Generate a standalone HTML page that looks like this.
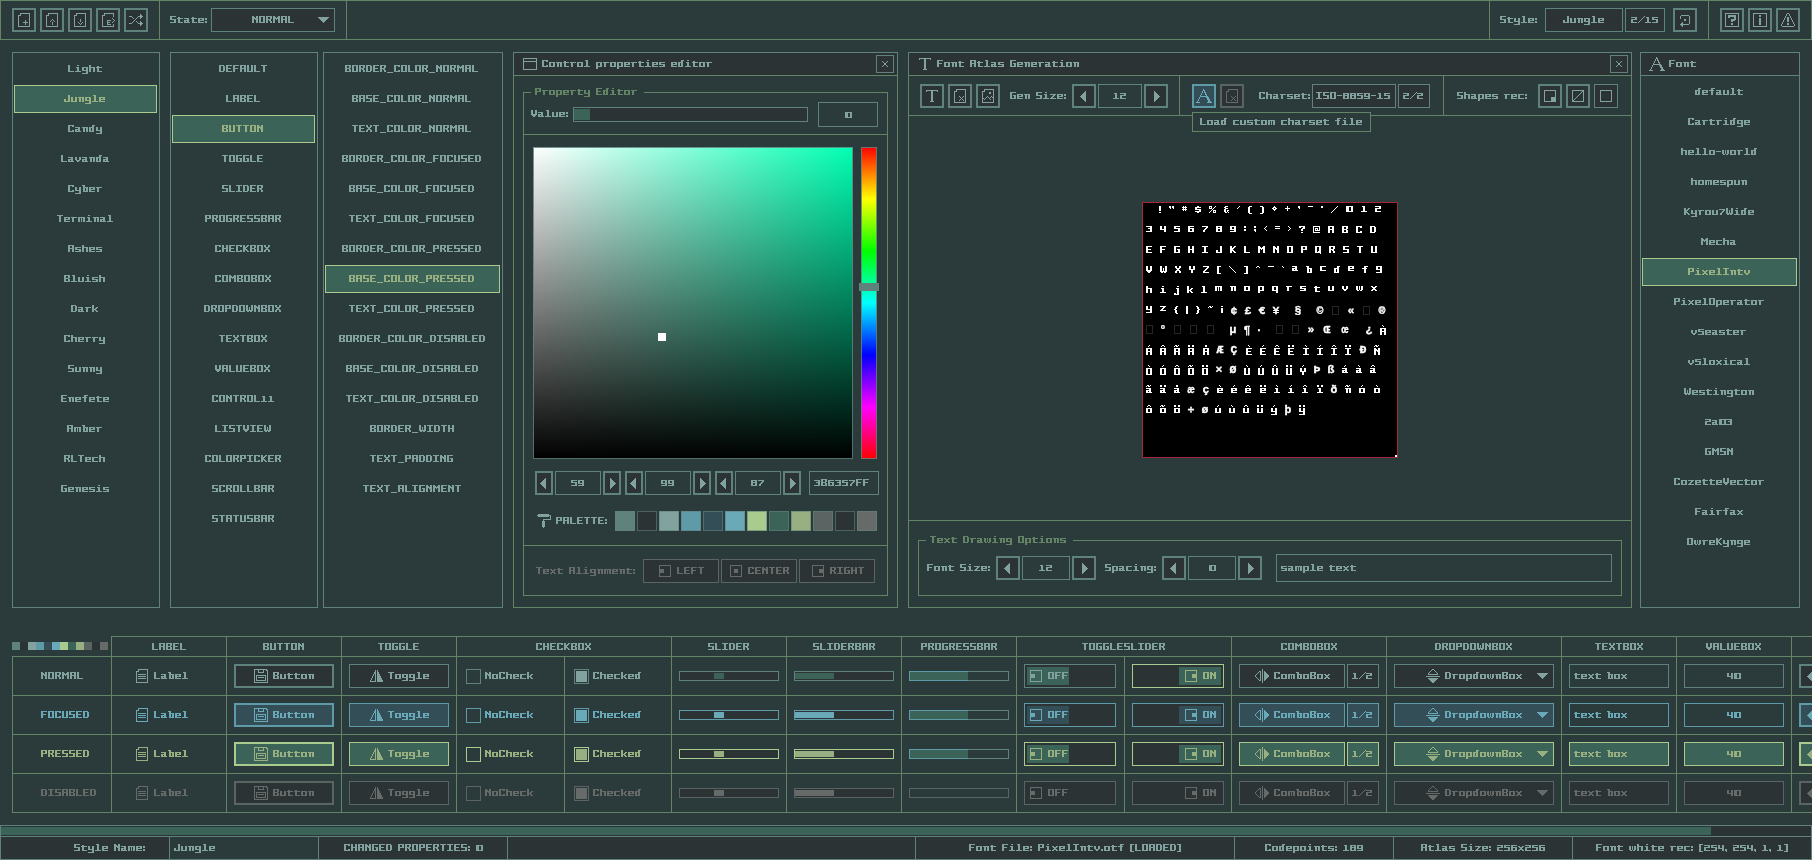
<!DOCTYPE html>
<html><head><meta charset="utf-8"><title>rGuiStyler</title>
<style>
html,body{margin:0;padding:0}
body{width:1812px;height:860px;background:#2b3a3a;overflow:hidden;position:relative;font-family:"Liberation Mono",monospace}
#r{left:0;top:0;width:1812px;height:860px;will-change:transform}
div,.t,.a,svg{position:absolute;box-sizing:border-box}
i{font-style:normal}
.t{white-space:pre;font:bold 10.3px/14px "Liberation Mono",monospace;height:14px;transform:scaleX(1.1325);transform-origin:0 50%;-webkit-text-stroke:0.14px}
.a{white-space:pre;font:bold 10px/14px "Liberation Mono",monospace;width:14px;height:14px;text-align:center;color:#fff;transform:scaleX(1.15);-webkit-text-stroke:0.3px}
.i,.p{shape-rendering:crispEdges;overflow:visible}
</style></head><body><div id="r">
<svg width="0" height="0" style="left:0;top:0"><defs><path id="g44" d="M0 5h2v1h-2zM0 6h2v1h-2zM1 7h1v1h-1z"/><path id="g45" d="M0 3h5v1h-5z"/><path id="g46" d="M0 5h2v1h-2zM0 6h2v1h-2z"/><path id="g47" d="M6 0h1v1h-1zM5 1h1v1h-1zM4 2h1v1h-1zM3 3h1v1h-1zM2 4h1v1h-1zM1 5h1v1h-1zM0 6h1v1h-1z"/><path id="g48" d="M0 1h7v1h-7zM0 2h3v1h-3zM5 2h2v1h-2zM0 3h3v1h-3zM5 3h2v1h-2zM0 4h3v1h-3zM5 4h2v1h-2zM0 5h3v1h-3zM5 5h2v1h-2zM0 6h7v1h-7z"/><path id="g49" d="M1 1h3v1h-3zM2 2h2v1h-2zM2 3h2v1h-2zM2 4h2v1h-2zM2 5h2v1h-2zM0 6h6v1h-6z"/><path id="g50" d="M0 1h6v1h-6zM4 2h2v1h-2zM0 3h6v1h-6zM0 4h2v1h-2zM0 5h2v1h-2zM0 6h6v1h-6z"/><path id="g51" d="M0 1h6v1h-6zM4 2h2v1h-2zM2 3h4v1h-4zM4 4h2v1h-2zM4 5h2v1h-2zM0 6h6v1h-6z"/><path id="g52" d="M0 1h2v1h-2zM4 1h2v1h-2zM0 2h2v1h-2zM4 2h2v1h-2zM0 3h2v1h-2zM4 3h2v1h-2zM0 4h6v1h-6zM4 5h2v1h-2zM4 6h2v1h-2z"/><path id="g53" d="M0 1h6v1h-6zM0 2h2v1h-2zM0 3h6v1h-6zM4 4h2v1h-2zM4 5h2v1h-2zM0 6h6v1h-6z"/><path id="g54" d="M0 1h6v1h-6zM0 2h2v1h-2zM0 3h6v1h-6zM0 4h2v1h-2zM4 4h2v1h-2zM0 5h2v1h-2zM4 5h2v1h-2zM0 6h6v1h-6z"/><path id="g55" d="M0 1h6v1h-6zM4 2h2v1h-2zM3 3h2v1h-2zM2 4h2v1h-2zM1 5h2v1h-2zM1 6h2v1h-2z"/><path id="g56" d="M0 1h6v1h-6zM0 2h2v1h-2zM4 2h2v1h-2zM0 3h6v1h-6zM0 4h2v1h-2zM4 4h2v1h-2zM0 5h2v1h-2zM4 5h2v1h-2zM0 6h6v1h-6z"/><path id="g57" d="M0 1h6v1h-6zM0 2h2v1h-2zM4 2h2v1h-2zM0 3h2v1h-2zM4 3h2v1h-2zM0 4h6v1h-6zM4 5h2v1h-2zM0 6h6v1h-6z"/><path id="g58" d="M0 2h2v1h-2zM0 3h2v1h-2zM0 5h2v1h-2zM0 6h2v1h-2z"/><path id="g65" d="M0 0h6v1h-6zM0 1h2v1h-2zM4 1h2v1h-2zM0 2h2v1h-2zM4 2h2v1h-2zM0 3h6v1h-6zM0 4h2v1h-2zM4 4h2v1h-2zM0 5h2v1h-2zM4 5h2v1h-2zM0 6h2v1h-2zM4 6h2v1h-2z"/><path id="g66" d="M0 0h6v1h-6zM0 1h2v1h-2zM4 1h2v1h-2zM0 2h2v1h-2zM4 2h2v1h-2zM0 3h5v1h-5zM0 4h2v1h-2zM4 4h2v1h-2zM0 5h2v1h-2zM4 5h2v1h-2zM0 6h6v1h-6z"/><path id="g67" d="M0 0h6v1h-6zM0 1h2v1h-2zM4 1h2v1h-2zM0 2h2v1h-2zM0 3h2v1h-2zM0 4h2v1h-2zM0 5h2v1h-2zM4 5h2v1h-2zM0 6h6v1h-6z"/><path id="g68" d="M0 0h5v1h-5zM0 1h2v1h-2zM4 1h2v1h-2zM0 2h2v1h-2zM4 2h2v1h-2zM0 3h2v1h-2zM4 3h2v1h-2zM0 4h2v1h-2zM4 4h2v1h-2zM0 5h2v1h-2zM4 5h2v1h-2zM0 6h5v1h-5z"/><path id="g69" d="M0 0h6v1h-6zM0 1h2v1h-2zM0 2h2v1h-2zM0 3h5v1h-5zM0 4h2v1h-2zM0 5h2v1h-2zM0 6h6v1h-6z"/><path id="g70" d="M0 0h6v1h-6zM0 1h2v1h-2zM0 2h2v1h-2zM0 3h5v1h-5zM0 4h2v1h-2zM0 5h2v1h-2zM0 6h2v1h-2z"/><path id="g71" d="M0 0h6v1h-6zM0 1h2v1h-2zM0 2h2v1h-2zM0 3h2v1h-2zM3 3h3v1h-3zM0 4h2v1h-2zM4 4h2v1h-2zM0 5h2v1h-2zM4 5h2v1h-2zM0 6h6v1h-6z"/><path id="g72" d="M0 0h2v1h-2zM4 0h2v1h-2zM0 1h2v1h-2zM4 1h2v1h-2zM0 2h2v1h-2zM4 2h2v1h-2zM0 3h6v1h-6zM0 4h2v1h-2zM4 4h2v1h-2zM0 5h2v1h-2zM4 5h2v1h-2zM0 6h2v1h-2zM4 6h2v1h-2z"/><path id="g73" d="M0 0h6v1h-6zM2 1h2v1h-2zM2 2h2v1h-2zM2 3h2v1h-2zM2 4h2v1h-2zM2 5h2v1h-2zM0 6h6v1h-6z"/><path id="g74" d="M4 0h2v1h-2zM4 1h2v1h-2zM4 2h2v1h-2zM4 3h2v1h-2zM0 4h2v1h-2zM4 4h2v1h-2zM0 5h2v1h-2zM4 5h2v1h-2zM0 6h6v1h-6z"/><path id="g75" d="M0 0h2v1h-2zM4 0h2v1h-2zM0 1h2v1h-2zM3 1h2v1h-2zM0 2h4v1h-4zM0 3h3v1h-3zM0 4h4v1h-4zM0 5h2v1h-2zM3 5h2v1h-2zM0 6h2v1h-2zM4 6h2v1h-2z"/><path id="g76" d="M0 0h2v1h-2zM0 1h2v1h-2zM0 2h2v1h-2zM0 3h2v1h-2zM0 4h2v1h-2zM0 5h2v1h-2zM0 6h6v1h-6z"/><path id="g77" d="M0 0h2v1h-2zM5 0h2v1h-2zM0 1h3v1h-3zM4 1h3v1h-3zM0 2h7v1h-7zM0 3h2v1h-2zM3 3h1v1h-1zM5 3h2v1h-2zM0 4h2v1h-2zM5 4h2v1h-2zM0 5h2v1h-2zM5 5h2v1h-2zM0 6h2v1h-2zM5 6h2v1h-2z"/><path id="g78" d="M0 0h2v1h-2zM4 0h2v1h-2zM0 1h3v1h-3zM4 1h2v1h-2zM0 2h6v1h-6zM0 3h2v1h-2zM3 3h3v1h-3zM0 4h2v1h-2zM4 4h2v1h-2zM0 5h2v1h-2zM4 5h2v1h-2zM0 6h2v1h-2zM4 6h2v1h-2z"/><path id="g79" d="M0 0h6v1h-6zM0 1h2v1h-2zM4 1h2v1h-2zM0 2h2v1h-2zM4 2h2v1h-2zM0 3h2v1h-2zM4 3h2v1h-2zM0 4h2v1h-2zM4 4h2v1h-2zM0 5h2v1h-2zM4 5h2v1h-2zM0 6h6v1h-6z"/><path id="g80" d="M0 0h6v1h-6zM0 1h2v1h-2zM4 1h2v1h-2zM0 2h2v1h-2zM4 2h2v1h-2zM0 3h6v1h-6zM0 4h2v1h-2zM0 5h2v1h-2zM0 6h2v1h-2z"/><path id="g82" d="M0 0h6v1h-6zM0 1h2v1h-2zM4 1h2v1h-2zM0 2h2v1h-2zM4 2h2v1h-2zM0 3h5v1h-5zM0 4h2v1h-2zM3 4h2v1h-2zM0 5h2v1h-2zM4 5h2v1h-2zM0 6h2v1h-2zM4 6h2v1h-2z"/><path id="g83" d="M0 0h6v1h-6zM0 1h2v1h-2zM0 2h2v1h-2zM0 3h6v1h-6zM4 4h2v1h-2zM4 5h2v1h-2zM0 6h6v1h-6z"/><path id="g84" d="M0 0h6v1h-6zM2 1h2v1h-2zM2 2h2v1h-2zM2 3h2v1h-2zM2 4h2v1h-2zM2 5h2v1h-2zM2 6h2v1h-2z"/><path id="g85" d="M0 0h2v1h-2zM4 0h2v1h-2zM0 1h2v1h-2zM4 1h2v1h-2zM0 2h2v1h-2zM4 2h2v1h-2zM0 3h2v1h-2zM4 3h2v1h-2zM0 4h2v1h-2zM4 4h2v1h-2zM0 5h2v1h-2zM4 5h2v1h-2zM0 6h6v1h-6z"/><path id="g86" d="M0 0h2v1h-2zM4 0h2v1h-2zM0 1h2v1h-2zM4 1h2v1h-2zM0 2h2v1h-2zM4 2h2v1h-2zM0 3h2v1h-2zM4 3h2v1h-2zM0 4h6v1h-6zM1 5h4v1h-4zM2 6h2v1h-2z"/><path id="g87" d="M0 0h2v1h-2zM5 0h2v1h-2zM0 1h2v1h-2zM5 1h2v1h-2zM0 2h2v1h-2zM3 2h1v1h-1zM5 2h2v1h-2zM0 3h2v1h-2zM3 3h1v1h-1zM5 3h2v1h-2zM0 4h2v1h-2zM3 4h1v1h-1zM5 4h2v1h-2zM0 5h7v1h-7zM1 6h2v1h-2zM4 6h2v1h-2z"/><path id="g88" d="M0 0h2v1h-2zM4 0h2v1h-2zM0 1h2v1h-2zM4 1h2v1h-2zM1 2h4v1h-4zM2 3h2v1h-2zM1 4h4v1h-4zM0 5h2v1h-2zM4 5h2v1h-2zM0 6h2v1h-2zM4 6h2v1h-2z"/><path id="g91" d="M0 0h4v1h-4zM0 1h2v1h-2zM0 2h2v1h-2zM0 3h2v1h-2zM0 4h2v1h-2zM0 5h2v1h-2zM0 6h2v1h-2zM0 7h4v1h-4z"/><path id="g93" d="M0 0h4v1h-4zM2 1h2v1h-2zM2 2h2v1h-2zM2 3h2v1h-2zM2 4h2v1h-2zM2 5h2v1h-2zM2 6h2v1h-2zM0 7h4v1h-4z"/><path id="g95" d="M0 7h6v1h-6z"/><path id="g97" d="M0 2h5v1h-5zM3 3h2v1h-2zM0 4h5v1h-5zM0 5h2v1h-2zM3 5h2v1h-2zM0 6h6v1h-6z"/><path id="g98" d="M0 0h3v1h-3zM1 1h2v1h-2zM1 2h5v1h-5zM1 3h2v1h-2zM4 3h2v1h-2zM1 4h2v1h-2zM4 4h2v1h-2zM1 5h2v1h-2zM4 5h2v1h-2zM1 6h5v1h-5z"/><path id="g99" d="M0 2h6v1h-6zM0 3h2v1h-2zM0 4h2v1h-2zM0 5h2v1h-2zM0 6h6v1h-6z"/><path id="g100" d="M3 0h3v1h-3zM3 1h2v1h-2zM0 2h5v1h-5zM0 3h2v1h-2zM3 3h2v1h-2zM0 4h2v1h-2zM3 4h2v1h-2zM0 5h2v1h-2zM3 5h2v1h-2zM0 6h5v1h-5z"/><path id="g101" d="M0 2h6v1h-6zM0 3h2v1h-2zM4 3h2v1h-2zM0 4h6v1h-6zM0 5h2v1h-2zM0 6h6v1h-6z"/><path id="g102" d="M2 0h4v1h-4zM2 1h2v1h-2zM0 2h5v1h-5zM2 3h2v1h-2zM2 4h2v1h-2zM2 5h2v1h-2zM2 6h2v1h-2z"/><path id="g103" d="M0 2h6v1h-6zM0 3h2v1h-2zM4 3h2v1h-2zM0 4h2v1h-2zM4 4h2v1h-2zM0 5h6v1h-6zM4 6h2v1h-2zM4 7h2v1h-2zM0 8h6v1h-6z"/><path id="g104" d="M0 0h2v1h-2zM0 1h2v1h-2zM0 2h6v1h-6zM0 3h2v1h-2zM4 3h2v1h-2zM0 4h2v1h-2zM4 4h2v1h-2zM0 5h2v1h-2zM4 5h2v1h-2zM0 6h2v1h-2zM4 6h2v1h-2z"/><path id="g105" d="M2 0h2v1h-2zM1 2h3v1h-3zM2 3h2v1h-2zM2 4h2v1h-2zM2 5h2v1h-2zM0 6h6v1h-6z"/><path id="g107" d="M0 0h2v1h-2zM0 1h2v1h-2zM0 2h2v1h-2zM4 2h2v1h-2zM0 3h2v1h-2zM3 3h2v1h-2zM0 4h4v1h-4zM0 5h2v1h-2zM3 5h2v1h-2zM0 6h2v1h-2zM4 6h2v1h-2z"/><path id="g108" d="M1 0h3v1h-3zM2 1h2v1h-2zM2 2h2v1h-2zM2 3h2v1h-2zM2 4h2v1h-2zM2 5h2v1h-2zM0 6h6v1h-6z"/><path id="g109" d="M0 2h7v1h-7zM0 3h2v1h-2zM3 3h1v1h-1zM5 3h2v1h-2zM0 4h2v1h-2zM3 4h1v1h-1zM5 4h2v1h-2zM0 5h2v1h-2zM3 5h1v1h-1zM5 5h2v1h-2zM0 6h2v1h-2zM3 6h1v1h-1zM5 6h2v1h-2z"/><path id="g110" d="M0 2h6v1h-6zM1 3h2v1h-2zM4 3h2v1h-2zM1 4h2v1h-2zM4 4h2v1h-2zM1 5h2v1h-2zM4 5h2v1h-2zM1 6h2v1h-2zM4 6h2v1h-2z"/><path id="g111" d="M0 2h6v1h-6zM0 3h2v1h-2zM4 3h2v1h-2zM0 4h2v1h-2zM4 4h2v1h-2zM0 5h2v1h-2zM4 5h2v1h-2zM0 6h6v1h-6z"/><path id="g112" d="M0 2h6v1h-6zM0 3h2v1h-2zM4 3h2v1h-2zM0 4h2v1h-2zM4 4h2v1h-2zM0 5h2v1h-2zM4 5h2v1h-2zM0 6h6v1h-6zM0 7h2v1h-2zM0 8h2v1h-2z"/><path id="g114" d="M0 2h6v1h-6zM1 3h2v1h-2zM1 4h2v1h-2zM1 5h2v1h-2zM1 6h2v1h-2z"/><path id="g115" d="M0 2h6v1h-6zM0 3h2v1h-2zM0 4h6v1h-6zM4 5h2v1h-2zM0 6h6v1h-6z"/><path id="g116" d="M1 1h2v1h-2zM0 2h6v1h-6zM1 3h2v1h-2zM1 4h2v1h-2zM1 5h2v1h-2zM1 6h5v1h-5z"/><path id="g117" d="M0 2h2v1h-2zM4 2h2v1h-2zM0 3h2v1h-2zM4 3h2v1h-2zM0 4h2v1h-2zM4 4h2v1h-2zM0 5h2v1h-2zM4 5h2v1h-2zM0 6h6v1h-6z"/><path id="g118" d="M0 2h2v1h-2zM4 2h2v1h-2zM0 3h2v1h-2zM4 3h2v1h-2zM0 4h2v1h-2zM4 4h2v1h-2zM1 5h4v1h-4zM2 6h2v1h-2z"/><path id="g119" d="M0 2h2v1h-2zM3 2h1v1h-1zM5 2h2v1h-2zM0 3h2v1h-2zM3 3h1v1h-1zM5 3h2v1h-2zM0 4h2v1h-2zM3 4h1v1h-1zM5 4h2v1h-2zM0 5h2v1h-2zM3 5h1v1h-1zM5 5h2v1h-2zM1 6h2v1h-2zM4 6h2v1h-2z"/><path id="g120" d="M0 2h2v1h-2zM4 2h2v1h-2zM1 3h4v1h-4zM2 4h2v1h-2zM1 5h4v1h-4zM0 6h2v1h-2zM4 6h2v1h-2z"/><path id="g121" d="M0 2h2v1h-2zM4 2h2v1h-2zM0 3h2v1h-2zM4 3h2v1h-2zM0 4h2v1h-2zM4 4h2v1h-2zM0 5h6v1h-6zM4 6h2v1h-2zM4 7h2v1h-2zM0 8h6v1h-6z"/><path id="g122" d="M0 2h6v1h-6zM3 3h2v1h-2zM2 4h2v1h-2zM1 5h2v1h-2zM0 6h6v1h-6z"/></defs></svg>
<div style="left:0px;top:0px;width:160px;height:40px;background:#2b3a3a;border:1px solid #638465;"></div>
<div style="left:159px;top:0px;width:188px;height:40px;background:#2b3a3a;border:1px solid #638465;"></div>
<div style="left:346px;top:0px;width:1144px;height:40px;background:#2b3a3a;border:1px solid #638465;"></div>
<div style="left:1489px;top:0px;width:220px;height:40px;background:#2b3a3a;border:1px solid #638465;"></div>
<div style="left:1708px;top:0px;width:104px;height:40px;background:#2b3a3a;border:1px solid #638465;"></div>
<div style="left:12px;top:8px;width:24px;height:24px;background:#2c3334;border:2px solid #60827d;"></div>
<svg class="i" style="left:16px;top:12px" width="16" height="16" viewBox="0 0 16 16"><path fill="#82a29f" d="M4 1h10v1h-10zM4 2h1v1h-1zM13 2h1v1h-1zM2 3h3v1h-3zM13 3h1v1h-1zM2 4h1v1h-1zM13 4h1v1h-1zM2 5h1v1h-1zM13 5h1v1h-1zM2 6h1v1h-1zM13 6h1v1h-1zM2 7h1v1h-1zM13 7h1v1h-1zM2 8h1v1h-1zM9 8h1v1h-1zM13 8h1v1h-1zM2 9h1v1h-1zM9 9h1v1h-1zM13 9h1v1h-1zM2 10h1v1h-1zM7 10h5v1h-5zM13 10h1v1h-1zM2 11h1v1h-1zM9 11h1v1h-1zM13 11h1v1h-1zM2 12h1v1h-1zM9 12h1v1h-1zM13 12h1v1h-1zM2 13h1v1h-1zM13 13h1v1h-1zM2 14h12v1h-12z"/></svg>
<div style="left:40px;top:8px;width:24px;height:24px;background:#2c3334;border:2px solid #60827d;"></div>
<svg class="i" style="left:44px;top:12px" width="16" height="16" viewBox="0 0 16 16"><path fill="#82a29f" d="M4 1h10v1h-10zM4 2h1v1h-1zM13 2h1v1h-1zM2 3h3v1h-3zM13 3h1v1h-1zM2 4h1v1h-1zM13 4h1v1h-1zM2 5h1v1h-1zM13 5h1v1h-1zM2 6h1v1h-1zM13 6h1v1h-1zM2 7h1v1h-1zM8 7h1v1h-1zM13 7h1v1h-1zM2 8h1v1h-1zM7 8h1v1h-1zM9 8h1v1h-1zM13 8h1v1h-1zM2 9h1v1h-1zM6 9h1v1h-1zM10 9h1v1h-1zM13 9h1v1h-1zM2 10h1v1h-1zM8 10h1v1h-1zM13 10h1v1h-1zM2 11h1v1h-1zM8 11h1v1h-1zM13 11h1v1h-1zM2 12h1v1h-1zM8 12h1v1h-1zM13 12h1v1h-1zM2 13h1v1h-1zM13 13h1v1h-1zM2 14h12v1h-12z"/></svg>
<div style="left:68px;top:8px;width:24px;height:24px;background:#2c3334;border:2px solid #60827d;"></div>
<svg class="i" style="left:72px;top:12px" width="16" height="16" viewBox="0 0 16 16"><path fill="#82a29f" d="M4 1h10v1h-10zM4 2h1v1h-1zM13 2h1v1h-1zM2 3h3v1h-3zM13 3h1v1h-1zM2 4h1v1h-1zM13 4h1v1h-1zM2 5h1v1h-1zM13 5h1v1h-1zM2 6h1v1h-1zM13 6h1v1h-1zM2 7h1v1h-1zM8 7h1v1h-1zM13 7h1v1h-1zM2 8h1v1h-1zM8 8h1v1h-1zM13 8h1v1h-1zM2 9h1v1h-1zM8 9h1v1h-1zM13 9h1v1h-1zM2 10h1v1h-1zM6 10h1v1h-1zM10 10h1v1h-1zM13 10h1v1h-1zM2 11h1v1h-1zM7 11h1v1h-1zM9 11h1v1h-1zM13 11h1v1h-1zM2 12h1v1h-1zM8 12h1v1h-1zM13 12h1v1h-1zM2 13h1v1h-1zM13 13h1v1h-1zM2 14h12v1h-12z"/></svg>
<div style="left:96px;top:8px;width:24px;height:24px;background:#2c3334;border:2px solid #60827d;"></div>
<svg class="i" style="left:100px;top:12px" width="16" height="16" viewBox="0 0 16 16"><path fill="#82a29f" d="M4 1h10v1h-10zM4 2h1v1h-1zM13 2h1v1h-1zM2 3h3v1h-3zM13 3h1v1h-1zM2 4h1v1h-1zM13 4h1v1h-1zM2 5h1v1h-1zM2 6h1v1h-1zM12 6h1v1h-1zM2 7h1v1h-1zM13 7h1v1h-1zM2 8h1v1h-1zM7 8h4v1h-4zM14 8h1v1h-1zM2 9h1v1h-1zM7 9h1v1h-1zM13 9h1v1h-1zM2 10h1v1h-1zM7 10h3v1h-3zM12 10h1v1h-1zM2 11h1v1h-1zM7 11h1v1h-1zM2 12h1v1h-1zM7 12h4v1h-4zM13 12h1v1h-1zM2 13h1v1h-1zM13 13h1v1h-1zM2 14h12v1h-12z"/></svg>
<div style="left:124px;top:8px;width:24px;height:24px;background:#2c3334;border:2px solid #60827d;"></div>
<svg class="i" style="left:128px;top:12px" width="16" height="16" viewBox="0 0 16 16"><path fill="#82a29f" d="M12 2h1v1h-1zM12 3h2v1h-2zM1 4h3v1h-3zM10 4h5v1h-5zM4 5h1v1h-1zM9 5h1v1h-1zM12 5h2v1h-2zM5 6h1v1h-1zM8 6h1v1h-1zM12 6h1v1h-1zM7 7h1v1h-1zM6 8h1v1h-1zM5 9h1v1h-1zM8 9h1v1h-1zM12 9h1v1h-1zM4 10h1v1h-1zM9 10h1v1h-1zM12 10h2v1h-2zM1 11h3v1h-3zM10 11h5v1h-5zM12 12h2v1h-2zM12 13h1v1h-1z"/></svg>
<svg class="p" style="left:170px;top:16px;fill:#82a29f" width="38" height="9" role="img"><title>State:</title><use href="#g83"/><use href="#g116" x="7"/><use href="#g97" x="14"/><use href="#g116" x="21"/><use href="#g101" x="28"/><use href="#g58" x="35"/></svg>
<div style="left:211px;top:8px;width:124px;height:24px;background:#2c3334;border:1px solid #60827d;"></div>
<svg class="p" style="left:252px;top:16px;fill:#82a29f" width="43" height="9" role="img"><title>NORMAL</title><use href="#g78"/><use href="#g79" x="7"/><use href="#g82" x="14"/><use href="#g77" x="21"/><use href="#g65" x="29"/><use href="#g76" x="36"/></svg>
<svg class="i" style="left:316px;top:12px" width="16" height="16" viewBox="0 0 16 16"><path fill="#82a29f" d="M2 5h11v1h-11zM3 6h9v1h-9zM4 7h7v1h-7zM5 8h5v1h-5zM6 9h3v1h-3zM7 10h1v1h-1z"/></svg>
<svg class="p" style="left:1500px;top:16px;fill:#82a29f" width="38" height="9" role="img"><title>Style:</title><use href="#g83"/><use href="#g116" x="7"/><use href="#g121" x="14"/><use href="#g108" x="21"/><use href="#g101" x="28"/><use href="#g58" x="35"/></svg>
<div style="left:1545px;top:8px;width:78px;height:24px;background:#2c3334;border:1px solid #60827d;"></div>
<svg class="p" style="left:1563px;top:16px;fill:#82a29f" width="42" height="9" role="img"><title>Jungle</title><use href="#g74"/><use href="#g117" x="7"/><use href="#g110" x="14"/><use href="#g103" x="21"/><use href="#g108" x="28"/><use href="#g101" x="35"/></svg>
<div style="left:1625px;top:8px;width:40px;height:24px;background:#2c3334;border:1px solid #60827d;"></div>
<svg class="p" style="left:1631px;top:16px;fill:#82a29f" width="28" height="9" role="img"><title>2/15</title><use href="#g50"/><use href="#g47" x="7"/><use href="#g49" x="14"/><use href="#g53" x="21"/></svg>
<div style="left:1673px;top:8px;width:24px;height:24px;background:#2c3334;border:2px solid #60827d;"></div>
<svg class="i" style="left:1677px;top:12px" width="16" height="16" viewBox="0 0 16 16"><path fill="#82a29f" d="M4 3h8v1h-8zM3 4h1v1h-1zM12 4h1v1h-1zM3 5h1v1h-1zM12 5h1v1h-1zM3 6h1v1h-1zM12 6h1v1h-1zM7 7h2v1h-2zM12 7h1v1h-1zM7 8h2v1h-2zM12 8h1v1h-1zM12 9h1v1h-1zM5 10h1v1h-1zM12 10h1v1h-1zM4 11h2v1h-2zM12 11h1v1h-1zM3 12h9v1h-9zM4 13h2v1h-2zM5 14h1v1h-1z"/></svg>
<div style="left:1720px;top:8px;width:24px;height:24px;background:#2c3334;border:2px solid #60827d;"></div>
<svg class="i" style="left:1724px;top:12px" width="16" height="16" viewBox="0 0 16 16"><path fill="#82a29f" d="M1 1h14v1h-14zM1 2h1v1h-1zM14 2h1v1h-1zM1 3h1v1h-1zM4 3h8v1h-8zM14 3h1v1h-1zM1 4h1v1h-1zM4 4h8v1h-8zM14 4h1v1h-1zM1 5h1v1h-1zM4 5h2v1h-2zM10 5h2v1h-2zM14 5h1v1h-1zM1 6h1v1h-1zM10 6h2v1h-2zM14 6h1v1h-1zM1 7h1v1h-1zM7 7h5v1h-5zM14 7h1v1h-1zM1 8h1v1h-1zM7 8h4v1h-4zM14 8h1v1h-1zM1 9h1v1h-1zM7 9h2v1h-2zM14 9h1v1h-1zM1 10h1v1h-1zM14 10h1v1h-1zM1 11h1v1h-1zM7 11h2v1h-2zM14 11h1v1h-1zM1 12h1v1h-1zM7 12h2v1h-2zM14 12h1v1h-1zM1 13h1v1h-1zM14 13h1v1h-1zM1 14h14v1h-14z"/></svg>
<div style="left:1748px;top:8px;width:24px;height:24px;background:#2c3334;border:2px solid #60827d;"></div>
<svg class="i" style="left:1752px;top:12px" width="16" height="16" viewBox="0 0 16 16"><path fill="#82a29f" d="M1 1h14v1h-14zM1 2h1v1h-1zM14 2h1v1h-1zM1 3h1v1h-1zM7 3h2v1h-2zM14 3h1v1h-1zM1 4h1v1h-1zM7 4h2v1h-2zM14 4h1v1h-1zM1 5h1v1h-1zM14 5h1v1h-1zM1 6h1v1h-1zM7 6h2v1h-2zM14 6h1v1h-1zM1 7h1v1h-1zM7 7h2v1h-2zM14 7h1v1h-1zM1 8h1v1h-1zM7 8h2v1h-2zM14 8h1v1h-1zM1 9h1v1h-1zM7 9h2v1h-2zM14 9h1v1h-1zM1 10h1v1h-1zM7 10h2v1h-2zM14 10h1v1h-1zM1 11h1v1h-1zM7 11h2v1h-2zM14 11h1v1h-1zM1 12h1v1h-1zM7 12h2v1h-2zM14 12h1v1h-1zM1 13h1v1h-1zM14 13h1v1h-1zM1 14h14v1h-14z"/></svg>
<div style="left:1776px;top:8px;width:24px;height:24px;background:#2c3334;border:2px solid #60827d;"></div>
<svg class="i" style="left:1780px;top:12px" width="16" height="16" viewBox="0 0 16 16"><path fill="#82a29f" d="M7 1h2v1h-2zM6 2h1v1h-1zM9 2h1v1h-1zM6 3h1v1h-1zM9 3h1v1h-1zM5 4h1v1h-1zM10 4h1v1h-1zM5 5h1v1h-1zM7 5h2v1h-2zM10 5h1v1h-1zM4 6h1v1h-1zM7 6h2v1h-2zM11 6h1v1h-1zM4 7h1v1h-1zM7 7h2v1h-2zM11 7h1v1h-1zM3 8h1v1h-1zM7 8h2v1h-2zM12 8h1v1h-1zM3 9h1v1h-1zM7 9h2v1h-2zM12 9h1v1h-1zM2 10h1v1h-1zM13 10h1v1h-1zM2 11h1v1h-1zM7 11h2v1h-2zM13 11h1v1h-1zM1 12h1v1h-1zM7 12h2v1h-2zM14 12h1v1h-1zM1 13h1v1h-1zM14 13h1v1h-1zM2 14h12v1h-12z"/></svg>
<div style="left:12px;top:52px;width:148px;height:556px;background:#2b3a3a;border:1px solid #60827d;"></div>
<svg class="p" style="left:68px;top:65px;fill:#82a29f" width="35" height="9" role="img"><title>Light</title><use href="#g76"/><use href="#g105" x="7"/><use href="#g103" x="14"/><use href="#g104" x="21"/><use href="#g116" x="28"/></svg>
<div style="left:14px;top:85px;width:143px;height:28px;background:#3b6357;border:1px solid #a9cb8d;"></div>
<svg class="p" style="left:64px;top:95px;fill:#97af81" width="42" height="9" role="img"><title>Jungle</title><use href="#g74"/><use href="#g117" x="7"/><use href="#g110" x="14"/><use href="#g103" x="21"/><use href="#g108" x="28"/><use href="#g101" x="35"/></svg>
<svg class="p" style="left:68px;top:125px;fill:#82a29f" width="35" height="9" role="img"><title>Candy</title><use href="#g67"/><use href="#g97" x="7"/><use href="#g110" x="14"/><use href="#g100" x="21"/><use href="#g121" x="28"/></svg>
<svg class="p" style="left:61px;top:155px;fill:#82a29f" width="49" height="9" role="img"><title>Lavanda</title><use href="#g76"/><use href="#g97" x="7"/><use href="#g118" x="14"/><use href="#g97" x="21"/><use href="#g110" x="28"/><use href="#g100" x="35"/><use href="#g97" x="42"/></svg>
<svg class="p" style="left:68px;top:185px;fill:#82a29f" width="35" height="9" role="img"><title>Cyber</title><use href="#g67"/><use href="#g121" x="7"/><use href="#g98" x="14"/><use href="#g101" x="21"/><use href="#g114" x="28"/></svg>
<svg class="p" style="left:57px;top:215px;fill:#82a29f" width="57" height="9" role="img"><title>Terminal</title><use href="#g84"/><use href="#g101" x="7"/><use href="#g114" x="14"/><use href="#g109" x="21"/><use href="#g105" x="29"/><use href="#g110" x="36"/><use href="#g97" x="43"/><use href="#g108" x="50"/></svg>
<svg class="p" style="left:68px;top:245px;fill:#82a29f" width="35" height="9" role="img"><title>Ashes</title><use href="#g65"/><use href="#g115" x="7"/><use href="#g104" x="14"/><use href="#g101" x="21"/><use href="#g115" x="28"/></svg>
<svg class="p" style="left:64px;top:275px;fill:#82a29f" width="42" height="9" role="img"><title>Bluish</title><use href="#g66"/><use href="#g108" x="7"/><use href="#g117" x="14"/><use href="#g105" x="21"/><use href="#g115" x="28"/><use href="#g104" x="35"/></svg>
<svg class="p" style="left:71px;top:305px;fill:#82a29f" width="28" height="9" role="img"><title>Dark</title><use href="#g68"/><use href="#g97" x="7"/><use href="#g114" x="14"/><use href="#g107" x="21"/></svg>
<svg class="p" style="left:64px;top:335px;fill:#82a29f" width="42" height="9" role="img"><title>Cherry</title><use href="#g67"/><use href="#g104" x="7"/><use href="#g101" x="14"/><use href="#g114" x="21"/><use href="#g114" x="28"/><use href="#g121" x="35"/></svg>
<svg class="p" style="left:68px;top:365px;fill:#82a29f" width="35" height="9" role="img"><title>Sunny</title><use href="#g83"/><use href="#g117" x="7"/><use href="#g110" x="14"/><use href="#g110" x="21"/><use href="#g121" x="28"/></svg>
<svg class="p" style="left:61px;top:395px;fill:#82a29f" width="49" height="9" role="img"><title>Enefete</title><use href="#g69"/><use href="#g110" x="7"/><use href="#g101" x="14"/><use href="#g102" x="21"/><use href="#g101" x="28"/><use href="#g116" x="35"/><use href="#g101" x="42"/></svg>
<svg class="p" style="left:67px;top:425px;fill:#82a29f" width="36" height="9" role="img"><title>Amber</title><use href="#g65"/><use href="#g109" x="7"/><use href="#g98" x="15"/><use href="#g101" x="22"/><use href="#g114" x="29"/></svg>
<svg class="p" style="left:64px;top:455px;fill:#82a29f" width="42" height="9" role="img"><title>RLTech</title><use href="#g82"/><use href="#g76" x="7"/><use href="#g84" x="14"/><use href="#g101" x="21"/><use href="#g99" x="28"/><use href="#g104" x="35"/></svg>
<svg class="p" style="left:61px;top:485px;fill:#82a29f" width="49" height="9" role="img"><title>Genesis</title><use href="#g71"/><use href="#g101" x="7"/><use href="#g110" x="14"/><use href="#g101" x="21"/><use href="#g115" x="28"/><use href="#g105" x="35"/><use href="#g115" x="42"/></svg>
<div style="left:170px;top:52px;width:148px;height:556px;background:#2b3a3a;border:1px solid #60827d;"></div>
<svg class="p" style="left:219px;top:65px;fill:#82a29f" width="49" height="9" role="img"><title>DEFAULT</title><use href="#g68"/><use href="#g69" x="7"/><use href="#g70" x="14"/><use href="#g65" x="21"/><use href="#g85" x="28"/><use href="#g76" x="35"/><use href="#g84" x="42"/></svg>
<svg class="p" style="left:226px;top:95px;fill:#82a29f" width="35" height="9" role="img"><title>LABEL</title><use href="#g76"/><use href="#g65" x="7"/><use href="#g66" x="14"/><use href="#g69" x="21"/><use href="#g76" x="28"/></svg>
<div style="left:172px;top:115px;width:143px;height:28px;background:#3b6357;border:1px solid #a9cb8d;"></div>
<svg class="p" style="left:222px;top:125px;fill:#97af81" width="42" height="9" role="img"><title>BUTTON</title><use href="#g66"/><use href="#g85" x="7"/><use href="#g84" x="14"/><use href="#g84" x="21"/><use href="#g79" x="28"/><use href="#g78" x="35"/></svg>
<svg class="p" style="left:222px;top:155px;fill:#82a29f" width="42" height="9" role="img"><title>TOGGLE</title><use href="#g84"/><use href="#g79" x="7"/><use href="#g71" x="14"/><use href="#g71" x="21"/><use href="#g76" x="28"/><use href="#g69" x="35"/></svg>
<svg class="p" style="left:222px;top:185px;fill:#82a29f" width="42" height="9" role="img"><title>SLIDER</title><use href="#g83"/><use href="#g76" x="7"/><use href="#g73" x="14"/><use href="#g68" x="21"/><use href="#g69" x="28"/><use href="#g82" x="35"/></svg>
<svg class="p" style="left:205px;top:215px;fill:#82a29f" width="77" height="9" role="img"><title>PROGRESSBAR</title><use href="#g80"/><use href="#g82" x="7"/><use href="#g79" x="14"/><use href="#g71" x="21"/><use href="#g82" x="28"/><use href="#g69" x="35"/><use href="#g83" x="42"/><use href="#g83" x="49"/><use href="#g66" x="56"/><use href="#g65" x="63"/><use href="#g82" x="70"/></svg>
<svg class="p" style="left:215px;top:245px;fill:#82a29f" width="56" height="9" role="img"><title>CHECKBOX</title><use href="#g67"/><use href="#g72" x="7"/><use href="#g69" x="14"/><use href="#g67" x="21"/><use href="#g75" x="28"/><use href="#g66" x="35"/><use href="#g79" x="42"/><use href="#g88" x="49"/></svg>
<svg class="p" style="left:215px;top:275px;fill:#82a29f" width="57" height="9" role="img"><title>COMBOBOX</title><use href="#g67"/><use href="#g79" x="7"/><use href="#g77" x="14"/><use href="#g66" x="22"/><use href="#g79" x="29"/><use href="#g66" x="36"/><use href="#g79" x="43"/><use href="#g88" x="50"/></svg>
<svg class="p" style="left:204px;top:305px;fill:#82a29f" width="78" height="9" role="img"><title>DROPDOWNBOX</title><use href="#g68"/><use href="#g82" x="7"/><use href="#g79" x="14"/><use href="#g80" x="21"/><use href="#g68" x="28"/><use href="#g79" x="35"/><use href="#g87" x="42"/><use href="#g78" x="50"/><use href="#g66" x="57"/><use href="#g79" x="64"/><use href="#g88" x="71"/></svg>
<svg class="p" style="left:219px;top:335px;fill:#82a29f" width="49" height="9" role="img"><title>TEXTBOX</title><use href="#g84"/><use href="#g69" x="7"/><use href="#g88" x="14"/><use href="#g84" x="21"/><use href="#g66" x="28"/><use href="#g79" x="35"/><use href="#g88" x="42"/></svg>
<svg class="p" style="left:215px;top:365px;fill:#82a29f" width="56" height="9" role="img"><title>VALUEBOX</title><use href="#g86"/><use href="#g65" x="7"/><use href="#g76" x="14"/><use href="#g85" x="21"/><use href="#g69" x="28"/><use href="#g66" x="35"/><use href="#g79" x="42"/><use href="#g88" x="49"/></svg>
<svg class="p" style="left:212px;top:395px;fill:#82a29f" width="63" height="9" role="img"><title>CONTROL11</title><use href="#g67"/><use href="#g79" x="7"/><use href="#g78" x="14"/><use href="#g84" x="21"/><use href="#g82" x="28"/><use href="#g79" x="35"/><use href="#g76" x="42"/><use href="#g49" x="49"/><use href="#g49" x="56"/></svg>
<svg class="p" style="left:215px;top:425px;fill:#82a29f" width="57" height="9" role="img"><title>LISTVIEW</title><use href="#g76"/><use href="#g73" x="7"/><use href="#g83" x="14"/><use href="#g84" x="21"/><use href="#g86" x="28"/><use href="#g73" x="35"/><use href="#g69" x="42"/><use href="#g87" x="49"/></svg>
<svg class="p" style="left:205px;top:455px;fill:#82a29f" width="77" height="9" role="img"><title>COLORPICKER</title><use href="#g67"/><use href="#g79" x="7"/><use href="#g76" x="14"/><use href="#g79" x="21"/><use href="#g82" x="28"/><use href="#g80" x="35"/><use href="#g73" x="42"/><use href="#g67" x="49"/><use href="#g75" x="56"/><use href="#g69" x="63"/><use href="#g82" x="70"/></svg>
<svg class="p" style="left:212px;top:485px;fill:#82a29f" width="63" height="9" role="img"><title>SCROLLBAR</title><use href="#g83"/><use href="#g67" x="7"/><use href="#g82" x="14"/><use href="#g79" x="21"/><use href="#g76" x="28"/><use href="#g76" x="35"/><use href="#g66" x="42"/><use href="#g65" x="49"/><use href="#g82" x="56"/></svg>
<svg class="p" style="left:212px;top:515px;fill:#82a29f" width="63" height="9" role="img"><title>STATUSBAR</title><use href="#g83"/><use href="#g84" x="7"/><use href="#g65" x="14"/><use href="#g84" x="21"/><use href="#g85" x="28"/><use href="#g83" x="35"/><use href="#g66" x="42"/><use href="#g65" x="49"/><use href="#g82" x="56"/></svg>
<div style="left:323px;top:52px;width:180px;height:556px;background:#2b3a3a;border:1px solid #60827d;"></div>
<svg class="p" style="left:345px;top:65px;fill:#82a29f" width="134" height="9" role="img"><title>BORDER_COLOR_NORMAL</title><use href="#g66"/><use href="#g79" x="7"/><use href="#g82" x="14"/><use href="#g68" x="21"/><use href="#g69" x="28"/><use href="#g82" x="35"/><use href="#g95" x="42"/><use href="#g67" x="49"/><use href="#g79" x="56"/><use href="#g76" x="63"/><use href="#g79" x="70"/><use href="#g82" x="77"/><use href="#g95" x="84"/><use href="#g78" x="91"/><use href="#g79" x="98"/><use href="#g82" x="105"/><use href="#g77" x="112"/><use href="#g65" x="120"/><use href="#g76" x="127"/></svg>
<svg class="p" style="left:352px;top:95px;fill:#82a29f" width="120" height="9" role="img"><title>BASE_COLOR_NORMAL</title><use href="#g66"/><use href="#g65" x="7"/><use href="#g83" x="14"/><use href="#g69" x="21"/><use href="#g95" x="28"/><use href="#g67" x="35"/><use href="#g79" x="42"/><use href="#g76" x="49"/><use href="#g79" x="56"/><use href="#g82" x="63"/><use href="#g95" x="70"/><use href="#g78" x="77"/><use href="#g79" x="84"/><use href="#g82" x="91"/><use href="#g77" x="98"/><use href="#g65" x="106"/><use href="#g76" x="113"/></svg>
<svg class="p" style="left:352px;top:125px;fill:#82a29f" width="120" height="9" role="img"><title>TEXT_COLOR_NORMAL</title><use href="#g84"/><use href="#g69" x="7"/><use href="#g88" x="14"/><use href="#g84" x="21"/><use href="#g95" x="28"/><use href="#g67" x="35"/><use href="#g79" x="42"/><use href="#g76" x="49"/><use href="#g79" x="56"/><use href="#g82" x="63"/><use href="#g95" x="70"/><use href="#g78" x="77"/><use href="#g79" x="84"/><use href="#g82" x="91"/><use href="#g77" x="98"/><use href="#g65" x="106"/><use href="#g76" x="113"/></svg>
<svg class="p" style="left:342px;top:155px;fill:#82a29f" width="140" height="9" role="img"><title>BORDER_COLOR_FOCUSED</title><use href="#g66"/><use href="#g79" x="7"/><use href="#g82" x="14"/><use href="#g68" x="21"/><use href="#g69" x="28"/><use href="#g82" x="35"/><use href="#g95" x="42"/><use href="#g67" x="49"/><use href="#g79" x="56"/><use href="#g76" x="63"/><use href="#g79" x="70"/><use href="#g82" x="77"/><use href="#g95" x="84"/><use href="#g70" x="91"/><use href="#g79" x="98"/><use href="#g67" x="105"/><use href="#g85" x="112"/><use href="#g83" x="119"/><use href="#g69" x="126"/><use href="#g68" x="133"/></svg>
<svg class="p" style="left:349px;top:185px;fill:#82a29f" width="126" height="9" role="img"><title>BASE_COLOR_FOCUSED</title><use href="#g66"/><use href="#g65" x="7"/><use href="#g83" x="14"/><use href="#g69" x="21"/><use href="#g95" x="28"/><use href="#g67" x="35"/><use href="#g79" x="42"/><use href="#g76" x="49"/><use href="#g79" x="56"/><use href="#g82" x="63"/><use href="#g95" x="70"/><use href="#g70" x="77"/><use href="#g79" x="84"/><use href="#g67" x="91"/><use href="#g85" x="98"/><use href="#g83" x="105"/><use href="#g69" x="112"/><use href="#g68" x="119"/></svg>
<svg class="p" style="left:349px;top:215px;fill:#82a29f" width="126" height="9" role="img"><title>TEXT_COLOR_FOCUSED</title><use href="#g84"/><use href="#g69" x="7"/><use href="#g88" x="14"/><use href="#g84" x="21"/><use href="#g95" x="28"/><use href="#g67" x="35"/><use href="#g79" x="42"/><use href="#g76" x="49"/><use href="#g79" x="56"/><use href="#g82" x="63"/><use href="#g95" x="70"/><use href="#g70" x="77"/><use href="#g79" x="84"/><use href="#g67" x="91"/><use href="#g85" x="98"/><use href="#g83" x="105"/><use href="#g69" x="112"/><use href="#g68" x="119"/></svg>
<svg class="p" style="left:342px;top:245px;fill:#82a29f" width="140" height="9" role="img"><title>BORDER_COLOR_PRESSED</title><use href="#g66"/><use href="#g79" x="7"/><use href="#g82" x="14"/><use href="#g68" x="21"/><use href="#g69" x="28"/><use href="#g82" x="35"/><use href="#g95" x="42"/><use href="#g67" x="49"/><use href="#g79" x="56"/><use href="#g76" x="63"/><use href="#g79" x="70"/><use href="#g82" x="77"/><use href="#g95" x="84"/><use href="#g80" x="91"/><use href="#g82" x="98"/><use href="#g69" x="105"/><use href="#g83" x="112"/><use href="#g83" x="119"/><use href="#g69" x="126"/><use href="#g68" x="133"/></svg>
<div style="left:325px;top:265px;width:175px;height:28px;background:#3b6357;border:1px solid #a9cb8d;"></div>
<svg class="p" style="left:349px;top:275px;fill:#97af81" width="126" height="9" role="img"><title>BASE_COLOR_PRESSED</title><use href="#g66"/><use href="#g65" x="7"/><use href="#g83" x="14"/><use href="#g69" x="21"/><use href="#g95" x="28"/><use href="#g67" x="35"/><use href="#g79" x="42"/><use href="#g76" x="49"/><use href="#g79" x="56"/><use href="#g82" x="63"/><use href="#g95" x="70"/><use href="#g80" x="77"/><use href="#g82" x="84"/><use href="#g69" x="91"/><use href="#g83" x="98"/><use href="#g83" x="105"/><use href="#g69" x="112"/><use href="#g68" x="119"/></svg>
<svg class="p" style="left:349px;top:305px;fill:#82a29f" width="126" height="9" role="img"><title>TEXT_COLOR_PRESSED</title><use href="#g84"/><use href="#g69" x="7"/><use href="#g88" x="14"/><use href="#g84" x="21"/><use href="#g95" x="28"/><use href="#g67" x="35"/><use href="#g79" x="42"/><use href="#g76" x="49"/><use href="#g79" x="56"/><use href="#g82" x="63"/><use href="#g95" x="70"/><use href="#g80" x="77"/><use href="#g82" x="84"/><use href="#g69" x="91"/><use href="#g83" x="98"/><use href="#g83" x="105"/><use href="#g69" x="112"/><use href="#g68" x="119"/></svg>
<svg class="p" style="left:339px;top:335px;fill:#82a29f" width="147" height="9" role="img"><title>BORDER_COLOR_DISABLED</title><use href="#g66"/><use href="#g79" x="7"/><use href="#g82" x="14"/><use href="#g68" x="21"/><use href="#g69" x="28"/><use href="#g82" x="35"/><use href="#g95" x="42"/><use href="#g67" x="49"/><use href="#g79" x="56"/><use href="#g76" x="63"/><use href="#g79" x="70"/><use href="#g82" x="77"/><use href="#g95" x="84"/><use href="#g68" x="91"/><use href="#g73" x="98"/><use href="#g83" x="105"/><use href="#g65" x="112"/><use href="#g66" x="119"/><use href="#g76" x="126"/><use href="#g69" x="133"/><use href="#g68" x="140"/></svg>
<svg class="p" style="left:346px;top:365px;fill:#82a29f" width="133" height="9" role="img"><title>BASE_COLOR_DISABLED</title><use href="#g66"/><use href="#g65" x="7"/><use href="#g83" x="14"/><use href="#g69" x="21"/><use href="#g95" x="28"/><use href="#g67" x="35"/><use href="#g79" x="42"/><use href="#g76" x="49"/><use href="#g79" x="56"/><use href="#g82" x="63"/><use href="#g95" x="70"/><use href="#g68" x="77"/><use href="#g73" x="84"/><use href="#g83" x="91"/><use href="#g65" x="98"/><use href="#g66" x="105"/><use href="#g76" x="112"/><use href="#g69" x="119"/><use href="#g68" x="126"/></svg>
<svg class="p" style="left:346px;top:395px;fill:#82a29f" width="133" height="9" role="img"><title>TEXT_COLOR_DISABLED</title><use href="#g84"/><use href="#g69" x="7"/><use href="#g88" x="14"/><use href="#g84" x="21"/><use href="#g95" x="28"/><use href="#g67" x="35"/><use href="#g79" x="42"/><use href="#g76" x="49"/><use href="#g79" x="56"/><use href="#g82" x="63"/><use href="#g95" x="70"/><use href="#g68" x="77"/><use href="#g73" x="84"/><use href="#g83" x="91"/><use href="#g65" x="98"/><use href="#g66" x="105"/><use href="#g76" x="112"/><use href="#g69" x="119"/><use href="#g68" x="126"/></svg>
<svg class="p" style="left:370px;top:425px;fill:#82a29f" width="85" height="9" role="img"><title>BORDER_WIDTH</title><use href="#g66"/><use href="#g79" x="7"/><use href="#g82" x="14"/><use href="#g68" x="21"/><use href="#g69" x="28"/><use href="#g82" x="35"/><use href="#g95" x="42"/><use href="#g87" x="49"/><use href="#g73" x="57"/><use href="#g68" x="64"/><use href="#g84" x="71"/><use href="#g72" x="78"/></svg>
<svg class="p" style="left:370px;top:455px;fill:#82a29f" width="84" height="9" role="img"><title>TEXT_PADDING</title><use href="#g84"/><use href="#g69" x="7"/><use href="#g88" x="14"/><use href="#g84" x="21"/><use href="#g95" x="28"/><use href="#g80" x="35"/><use href="#g65" x="42"/><use href="#g68" x="49"/><use href="#g68" x="56"/><use href="#g73" x="63"/><use href="#g78" x="70"/><use href="#g71" x="77"/></svg>
<svg class="p" style="left:363px;top:485px;fill:#82a29f" width="99" height="9" role="img"><title>TEXT_ALIGNMENT</title><use href="#g84"/><use href="#g69" x="7"/><use href="#g88" x="14"/><use href="#g84" x="21"/><use href="#g95" x="28"/><use href="#g65" x="35"/><use href="#g76" x="42"/><use href="#g73" x="49"/><use href="#g71" x="56"/><use href="#g78" x="63"/><use href="#g77" x="70"/><use href="#g69" x="78"/><use href="#g78" x="85"/><use href="#g84" x="92"/></svg>
<div style="left:513px;top:75px;width:385px;height:533px;background:#2b3a3a;border:1px solid #638465;"></div>
<div style="left:513px;top:52px;width:385px;height:24px;background:#2c3334;border:1px solid #60827d;"></div>
<svg class="i" style="left:522px;top:56px" width="16" height="16" viewBox="0 0 16 16"><path fill="#82a29f" d="M1 2h14v1h-14zM1 3h1v1h-1zM14 3h1v1h-1zM1 4h1v1h-1zM14 4h1v1h-1zM1 5h14v1h-14zM1 6h1v1h-1zM14 6h1v1h-1zM1 7h1v1h-1zM14 7h1v1h-1zM1 8h1v1h-1zM14 8h1v1h-1zM1 9h1v1h-1zM14 9h1v1h-1zM1 10h1v1h-1zM14 10h1v1h-1zM1 11h1v1h-1zM14 11h1v1h-1zM1 12h1v1h-1zM14 12h1v1h-1zM1 13h14v1h-14z"/></svg>
<svg class="p" style="left:542px;top:60px;fill:#82a29f" width="171" height="9" role="img"><title>Control properties editor</title><use href="#g67"/><use href="#g111" x="7"/><use href="#g110" x="14"/><use href="#g116" x="21"/><use href="#g114" x="28"/><use href="#g111" x="35"/><use href="#g108" x="42"/><use href="#g112" x="54"/><use href="#g114" x="61"/><use href="#g111" x="68"/><use href="#g112" x="75"/><use href="#g101" x="82"/><use href="#g114" x="89"/><use href="#g116" x="96"/><use href="#g105" x="103"/><use href="#g101" x="110"/><use href="#g115" x="117"/><use href="#g101" x="129"/><use href="#g100" x="136"/><use href="#g105" x="143"/><use href="#g116" x="150"/><use href="#g111" x="157"/><use href="#g114" x="164"/></svg>
<div style="left:876px;top:55px;width:18px;height:18px;background:#2c3334;border:1px solid #60827d;"></div>
<svg class="i" style="left:877px;top:56px" width="16" height="16" viewBox="0 0 16 16"><path fill="#82a29f" d="M5 5h1v1h-1zM10 5h1v1h-1zM6 6h1v1h-1zM9 6h1v1h-1zM7 7h2v1h-2zM7 8h2v1h-2zM6 9h1v1h-1zM9 9h1v1h-1zM5 10h1v1h-1zM10 10h1v1h-1z"/></svg>
<div style="left:513px;top:75px;width:385px;height:1px;background:#638465;"></div>
<div style="left:523px;top:92px;width:1px;height:504px;background:#638465;"></div>
<div style="left:887px;top:92px;width:1px;height:504px;background:#638465;"></div>
<div style="left:523px;top:595px;width:365px;height:1px;background:#638465;"></div>
<div style="left:523px;top:92px;width:8px;height:1px;background:#638465;"></div>
<div style="left:644px;top:92px;width:244px;height:1px;background:#638465;"></div>
<svg class="p" style="left:535px;top:88px;fill:#638465" width="103" height="9" role="img"><title>Property Editor</title><use href="#g80"/><use href="#g114" x="7"/><use href="#g111" x="14"/><use href="#g112" x="21"/><use href="#g101" x="28"/><use href="#g114" x="35"/><use href="#g116" x="42"/><use href="#g121" x="49"/><use href="#g69" x="61"/><use href="#g100" x="68"/><use href="#g105" x="75"/><use href="#g116" x="82"/><use href="#g111" x="89"/><use href="#g114" x="96"/></svg>
<svg class="p" style="left:531px;top:110px;fill:#82a29f" width="38" height="9" role="img"><title>Value:</title><use href="#g86"/><use href="#g97" x="7"/><use href="#g108" x="14"/><use href="#g117" x="21"/><use href="#g101" x="28"/><use href="#g58" x="35"/></svg>
<div style="left:573px;top:107px;width:235px;height:15px;background:#2c3334;border:1px solid #60827d;"></div>
<div style="left:574px;top:109px;width:16px;height:11px;background:#3b6357;"></div>
<div style="left:818px;top:102px;width:60px;height:25px;background:#2b3a3a;border:1px solid #60827d;"></div>
<svg class="p" style="left:845px;top:111px;fill:#82a29f" width="7" height="9" role="img"><title>0</title><use href="#g48"/></svg>
<div style="left:523px;top:134px;width:365px;height:1px;background:#638465;"></div>
<div style="left:533px;top:147px;width:320px;height:312px;background:linear-gradient(180deg,rgba(0,0,0,0),#000),linear-gradient(90deg,#fff,#00ffb2)"></div>
<div style="left:533px;top:147px;width:320px;height:312px;border:1px solid rgba(96,130,125,.85);"></div>
<div style="left:658px;top:333px;width:8px;height:8px;background:#fff;"></div>
<div style="left:861px;top:147px;width:16px;height:312px;background:linear-gradient(180deg,#f00 0%,#ff0 16.67%,#0f0 33.33%,#0ff 50%,#00f 66.67%,#f0f 83.33%,#f00 100%);"></div>
<div style="left:861px;top:147px;width:16px;height:312px;border:1px solid rgba(96,130,125,.85);"></div>
<div style="left:859px;top:283px;width:20px;height:8px;background:#60827d;"></div>
<div style="left:535px;top:471px;width:18px;height:24px;background:#2c3334;border:2px solid #60827d;"></div>
<svg class="i" style="left:536px;top:475px" width="16" height="16" viewBox="0 0 16 16"><path fill="#82a29f" d="M9 3h1v1h-1zM8 4h2v1h-2zM7 5h3v1h-3zM6 6h4v1h-4zM5 7h5v1h-5zM4 8h6v1h-6zM5 9h5v1h-5zM6 10h4v1h-4zM7 11h3v1h-3zM8 12h2v1h-2zM9 13h1v1h-1z"/></svg>
<div style="left:555px;top:471px;width:46px;height:24px;background:#2b3a3a;border:1px solid #60827d;"></div>
<svg class="p" style="left:571px;top:479px;fill:#82a29f" width="14" height="9" role="img"><title>59</title><use href="#g53"/><use href="#g57" x="7"/></svg>
<div style="left:603px;top:471px;width:18px;height:24px;background:#2c3334;border:2px solid #60827d;"></div>
<svg class="i" style="left:604px;top:475px" width="16" height="16" viewBox="0 0 16 16"><path fill="#82a29f" d="M6 3h1v1h-1zM6 4h2v1h-2zM6 5h3v1h-3zM6 6h4v1h-4zM6 7h5v1h-5zM6 8h6v1h-6zM6 9h5v1h-5zM6 10h4v1h-4zM6 11h3v1h-3zM6 12h2v1h-2zM6 13h1v1h-1z"/></svg>
<div style="left:625px;top:471px;width:18px;height:24px;background:#2c3334;border:2px solid #60827d;"></div>
<svg class="i" style="left:626px;top:475px" width="16" height="16" viewBox="0 0 16 16"><path fill="#82a29f" d="M9 3h1v1h-1zM8 4h2v1h-2zM7 5h3v1h-3zM6 6h4v1h-4zM5 7h5v1h-5zM4 8h6v1h-6zM5 9h5v1h-5zM6 10h4v1h-4zM7 11h3v1h-3zM8 12h2v1h-2zM9 13h1v1h-1z"/></svg>
<div style="left:645px;top:471px;width:46px;height:24px;background:#2b3a3a;border:1px solid #60827d;"></div>
<svg class="p" style="left:661px;top:479px;fill:#82a29f" width="14" height="9" role="img"><title>99</title><use href="#g57"/><use href="#g57" x="7"/></svg>
<div style="left:693px;top:471px;width:18px;height:24px;background:#2c3334;border:2px solid #60827d;"></div>
<svg class="i" style="left:694px;top:475px" width="16" height="16" viewBox="0 0 16 16"><path fill="#82a29f" d="M6 3h1v1h-1zM6 4h2v1h-2zM6 5h3v1h-3zM6 6h4v1h-4zM6 7h5v1h-5zM6 8h6v1h-6zM6 9h5v1h-5zM6 10h4v1h-4zM6 11h3v1h-3zM6 12h2v1h-2zM6 13h1v1h-1z"/></svg>
<div style="left:715px;top:471px;width:18px;height:24px;background:#2c3334;border:2px solid #60827d;"></div>
<svg class="i" style="left:716px;top:475px" width="16" height="16" viewBox="0 0 16 16"><path fill="#82a29f" d="M9 3h1v1h-1zM8 4h2v1h-2zM7 5h3v1h-3zM6 6h4v1h-4zM5 7h5v1h-5zM4 8h6v1h-6zM5 9h5v1h-5zM6 10h4v1h-4zM7 11h3v1h-3zM8 12h2v1h-2zM9 13h1v1h-1z"/></svg>
<div style="left:735px;top:471px;width:46px;height:24px;background:#2b3a3a;border:1px solid #60827d;"></div>
<svg class="p" style="left:751px;top:479px;fill:#82a29f" width="14" height="9" role="img"><title>87</title><use href="#g56"/><use href="#g55" x="7"/></svg>
<div style="left:783px;top:471px;width:18px;height:24px;background:#2c3334;border:2px solid #60827d;"></div>
<svg class="i" style="left:784px;top:475px" width="16" height="16" viewBox="0 0 16 16"><path fill="#82a29f" d="M6 3h1v1h-1zM6 4h2v1h-2zM6 5h3v1h-3zM6 6h4v1h-4zM6 7h5v1h-5zM6 8h6v1h-6zM6 9h5v1h-5zM6 10h4v1h-4zM6 11h3v1h-3zM6 12h2v1h-2zM6 13h1v1h-1z"/></svg>
<div style="left:809px;top:471px;width:70px;height:24px;background:#2b3a3a;border:1px solid #60827d;"></div>
<svg class="p" style="left:814px;top:479px;fill:#82a29f" width="56" height="9" role="img"><title>3B6357FF</title><use href="#g51"/><use href="#g66" x="7"/><use href="#g54" x="14"/><use href="#g51" x="21"/><use href="#g53" x="28"/><use href="#g55" x="35"/><use href="#g70" x="42"/><use href="#g70" x="49"/></svg>
<svg class="i" style="left:536px;top:513px" width="16" height="16" viewBox="0 0 16 16"><path fill="#82a29f" d="M2 1h11v1h-11zM1 2h14v1h-14zM2 3h11v1h-11zM14 3h1v1h-1zM14 4h1v1h-1zM14 5h1v1h-1zM7 6h8v1h-8zM7 7h1v1h-1zM6 8h3v1h-3zM6 9h3v1h-3zM6 10h3v1h-3zM6 11h3v1h-3zM6 12h3v1h-3zM6 13h3v1h-3zM7 14h1v1h-1z"/></svg>
<svg class="p" style="left:556px;top:517px;fill:#82a29f" width="52" height="9" role="img"><title>PALETTE:</title><use href="#g80"/><use href="#g65" x="7"/><use href="#g76" x="14"/><use href="#g69" x="21"/><use href="#g84" x="28"/><use href="#g84" x="35"/><use href="#g69" x="42"/><use href="#g58" x="49"/></svg>
<div style="left:615px;top:511px;width:20px;height:20px;background:#60827d;border:1px solid rgba(96,130,125,.6);"></div>
<div style="left:637px;top:511px;width:20px;height:20px;background:#2c3334;border:1px solid rgba(96,130,125,.6);"></div>
<div style="left:659px;top:511px;width:20px;height:20px;background:#82a29f;border:1px solid rgba(96,130,125,.6);"></div>
<div style="left:681px;top:511px;width:20px;height:20px;background:#5f9aa8;border:1px solid rgba(96,130,125,.6);"></div>
<div style="left:703px;top:511px;width:20px;height:20px;background:#334e57;border:1px solid rgba(96,130,125,.6);"></div>
<div style="left:725px;top:511px;width:20px;height:20px;background:#6aa9b8;border:1px solid rgba(96,130,125,.6);"></div>
<div style="left:747px;top:511px;width:20px;height:20px;background:#a9cb8d;border:1px solid rgba(96,130,125,.6);"></div>
<div style="left:769px;top:511px;width:20px;height:20px;background:#3b6357;border:1px solid rgba(96,130,125,.6);"></div>
<div style="left:791px;top:511px;width:20px;height:20px;background:#97af81;border:1px solid rgba(96,130,125,.6);"></div>
<div style="left:813px;top:511px;width:20px;height:20px;background:#5b6462;border:1px solid rgba(96,130,125,.6);"></div>
<div style="left:835px;top:511px;width:20px;height:20px;background:#2c3334;border:1px solid rgba(96,130,125,.6);"></div>
<div style="left:857px;top:511px;width:20px;height:20px;background:#666b69;border:1px solid rgba(96,130,125,.6);"></div>
<div style="left:523px;top:545px;width:365px;height:1px;background:#638465;"></div>
<svg class="p" style="left:536px;top:567px;fill:#666b69" width="100" height="9" role="img"><title>Text Alignment:</title><use href="#g84"/><use href="#g101" x="7"/><use href="#g120" x="14"/><use href="#g116" x="21"/><use href="#g65" x="33"/><use href="#g108" x="40"/><use href="#g105" x="47"/><use href="#g103" x="54"/><use href="#g110" x="61"/><use href="#g109" x="68"/><use href="#g101" x="76"/><use href="#g110" x="83"/><use href="#g116" x="90"/><use href="#g58" x="97"/></svg>
<div style="left:643px;top:559px;width:76px;height:24px;background:#2c3334;border:1px solid #5b6462;"></div>
<svg class="i" style="left:657px;top:563px" width="16" height="16" viewBox="0 0 16 16"><path fill="#666b69" d="M2 2h12v1h-12zM2 3h1v1h-1zM13 3h1v1h-1zM2 4h1v1h-1zM13 4h1v1h-1zM2 5h1v1h-1zM13 5h1v1h-1zM2 6h5v1h-5zM13 6h1v1h-1zM2 7h5v1h-5zM13 7h1v1h-1zM2 8h5v1h-5zM13 8h1v1h-1zM2 9h5v1h-5zM13 9h1v1h-1zM2 10h1v1h-1zM13 10h1v1h-1zM2 11h1v1h-1zM13 11h1v1h-1zM2 12h1v1h-1zM13 12h1v1h-1zM2 13h12v1h-12z"/></svg>
<svg class="p" style="left:677px;top:567px;fill:#666b69" width="28" height="9" role="img"><title>LEFT</title><use href="#g76"/><use href="#g69" x="7"/><use href="#g70" x="14"/><use href="#g84" x="21"/></svg>
<div style="left:721px;top:559px;width:76px;height:24px;background:#2c3334;border:1px solid #5b6462;"></div>
<svg class="i" style="left:728px;top:563px" width="16" height="16" viewBox="0 0 16 16"><path fill="#666b69" d="M2 2h12v1h-12zM2 3h1v1h-1zM13 3h1v1h-1zM2 4h1v1h-1zM13 4h1v1h-1zM2 5h1v1h-1zM13 5h1v1h-1zM2 6h1v1h-1zM6 6h4v1h-4zM13 6h1v1h-1zM2 7h1v1h-1zM6 7h4v1h-4zM13 7h1v1h-1zM2 8h1v1h-1zM6 8h4v1h-4zM13 8h1v1h-1zM2 9h1v1h-1zM6 9h4v1h-4zM13 9h1v1h-1zM2 10h1v1h-1zM13 10h1v1h-1zM2 11h1v1h-1zM13 11h1v1h-1zM2 12h1v1h-1zM13 12h1v1h-1zM2 13h12v1h-12z"/></svg>
<svg class="p" style="left:748px;top:567px;fill:#666b69" width="42" height="9" role="img"><title>CENTER</title><use href="#g67"/><use href="#g69" x="7"/><use href="#g78" x="14"/><use href="#g84" x="21"/><use href="#g69" x="28"/><use href="#g82" x="35"/></svg>
<div style="left:799px;top:559px;width:76px;height:24px;background:#2c3334;border:1px solid #5b6462;"></div>
<svg class="i" style="left:810px;top:563px" width="16" height="16" viewBox="0 0 16 16"><path fill="#666b69" d="M2 2h12v1h-12zM2 3h1v1h-1zM13 3h1v1h-1zM2 4h1v1h-1zM13 4h1v1h-1zM2 5h1v1h-1zM13 5h1v1h-1zM2 6h1v1h-1zM9 6h5v1h-5zM2 7h1v1h-1zM9 7h5v1h-5zM2 8h1v1h-1zM9 8h5v1h-5zM2 9h1v1h-1zM9 9h5v1h-5zM2 10h1v1h-1zM13 10h1v1h-1zM2 11h1v1h-1zM13 11h1v1h-1zM2 12h1v1h-1zM13 12h1v1h-1zM2 13h12v1h-12z"/></svg>
<svg class="p" style="left:830px;top:567px;fill:#666b69" width="35" height="9" role="img"><title>RIGHT</title><use href="#g82"/><use href="#g73" x="7"/><use href="#g71" x="14"/><use href="#g72" x="21"/><use href="#g84" x="28"/></svg>
<div style="left:908px;top:75px;width:724px;height:533px;background:#2b3a3a;border:1px solid #638465;"></div>
<div style="left:908px;top:52px;width:724px;height:24px;background:#2c3334;border:1px solid #60827d;"></div>
<svg class="i" style="left:917px;top:56px" width="16" height="16" viewBox="0 0 16 16"><path fill="#82a29f" d="M2 2h12v1h-12zM2 3h1v1h-1zM7 3h2v1h-2zM13 3h1v1h-1zM7 4h2v1h-2zM7 5h2v1h-2zM7 6h2v1h-2zM7 7h2v1h-2zM7 8h2v1h-2zM7 9h2v1h-2zM7 10h2v1h-2zM7 11h2v1h-2zM7 12h2v1h-2zM6 13h4v1h-4z"/></svg>
<svg class="p" style="left:937px;top:60px;fill:#82a29f" width="143" height="9" role="img"><title>Font Atlas Generation</title><use href="#g70"/><use href="#g111" x="7"/><use href="#g110" x="14"/><use href="#g116" x="21"/><use href="#g65" x="33"/><use href="#g116" x="40"/><use href="#g108" x="47"/><use href="#g97" x="54"/><use href="#g115" x="61"/><use href="#g71" x="73"/><use href="#g101" x="80"/><use href="#g110" x="87"/><use href="#g101" x="94"/><use href="#g114" x="101"/><use href="#g97" x="108"/><use href="#g116" x="115"/><use href="#g105" x="122"/><use href="#g111" x="129"/><use href="#g110" x="136"/></svg>
<div style="left:1610px;top:55px;width:18px;height:18px;background:#2c3334;border:1px solid #60827d;"></div>
<svg class="i" style="left:1611px;top:56px" width="16" height="16" viewBox="0 0 16 16"><path fill="#82a29f" d="M5 5h1v1h-1zM10 5h1v1h-1zM6 6h1v1h-1zM9 6h1v1h-1zM7 7h2v1h-2zM7 8h2v1h-2zM6 9h1v1h-1zM9 9h1v1h-1zM5 10h1v1h-1zM10 10h1v1h-1z"/></svg>
<div style="left:908px;top:75px;width:272px;height:41px;background:#2b3a3a;border:1px solid #638465;"></div>
<div style="left:1179px;top:75px;width:265px;height:41px;background:#2b3a3a;border:1px solid #638465;"></div>
<div style="left:1443px;top:75px;width:189px;height:41px;background:#2b3a3a;border:1px solid #638465;"></div>
<div style="left:920px;top:84px;width:24px;height:24px;background:#2c3334;border:2px solid #60827d;"></div>
<svg class="i" style="left:924px;top:88px" width="16" height="16" viewBox="0 0 16 16"><path fill="#82a29f" d="M2 2h12v1h-12zM2 3h1v1h-1zM7 3h2v1h-2zM13 3h1v1h-1zM7 4h2v1h-2zM7 5h2v1h-2zM7 6h2v1h-2zM7 7h2v1h-2zM7 8h2v1h-2zM7 9h2v1h-2zM7 10h2v1h-2zM7 11h2v1h-2zM7 12h2v1h-2zM6 13h4v1h-4z"/></svg>
<div style="left:948px;top:84px;width:24px;height:24px;background:#2c3334;border:2px solid #60827d;"></div>
<svg class="i" style="left:952px;top:88px" width="16" height="16" viewBox="0 0 16 16"><path fill="#82a29f" d="M4 1h10v1h-10zM4 2h1v1h-1zM13 2h1v1h-1zM2 3h3v1h-3zM13 3h1v1h-1zM2 4h1v1h-1zM13 4h1v1h-1zM2 5h1v1h-1zM13 5h1v1h-1zM2 6h1v1h-1zM13 6h1v1h-1zM2 7h1v1h-1zM13 7h1v1h-1zM2 8h1v1h-1zM7 8h1v1h-1zM11 8h1v1h-1zM13 8h1v1h-1zM2 9h1v1h-1zM8 9h1v1h-1zM10 9h1v1h-1zM13 9h1v1h-1zM2 10h1v1h-1zM9 10h1v1h-1zM13 10h1v1h-1zM2 11h1v1h-1zM8 11h1v1h-1zM10 11h1v1h-1zM13 11h1v1h-1zM2 12h1v1h-1zM7 12h1v1h-1zM11 12h1v1h-1zM13 12h1v1h-1zM2 13h1v1h-1zM13 13h1v1h-1zM2 14h12v1h-12z"/></svg>
<div style="left:976px;top:84px;width:24px;height:24px;background:#2c3334;border:2px solid #60827d;"></div>
<svg class="i" style="left:980px;top:88px" width="16" height="16" viewBox="0 0 16 16"><path fill="#82a29f" d="M4 1h10v1h-10zM4 2h1v1h-1zM13 2h1v1h-1zM2 3h3v1h-3zM13 3h1v1h-1zM2 4h1v1h-1zM9 4h2v1h-2zM13 4h1v1h-1zM2 5h1v1h-1zM9 5h2v1h-2zM13 5h1v1h-1zM2 6h1v1h-1zM13 6h1v1h-1zM2 7h1v1h-1zM13 7h1v1h-1zM2 8h1v1h-1zM7 8h1v1h-1zM11 8h1v1h-1zM13 8h1v1h-1zM2 9h1v1h-1zM6 9h1v1h-1zM8 9h1v1h-1zM10 9h1v1h-1zM12 9h2v1h-2zM2 10h2v1h-2zM5 10h1v1h-1zM9 10h1v1h-1zM13 10h1v1h-1zM2 11h1v1h-1zM4 11h1v1h-1zM10 11h1v1h-1zM13 11h1v1h-1zM2 12h1v1h-1zM13 12h1v1h-1zM2 13h1v1h-1zM13 13h1v1h-1zM2 14h12v1h-12z"/></svg>
<svg class="p" style="left:1010px;top:92px;fill:#82a29f" width="57" height="9" role="img"><title>Gen Size:</title><use href="#g71"/><use href="#g101" x="7"/><use href="#g110" x="14"/><use href="#g83" x="26"/><use href="#g105" x="33"/><use href="#g122" x="40"/><use href="#g101" x="47"/><use href="#g58" x="54"/></svg>
<div style="left:1072px;top:84px;width:24px;height:24px;background:#2c3334;border:2px solid #60827d;"></div>
<svg class="i" style="left:1076px;top:88px" width="16" height="16" viewBox="0 0 16 16"><path fill="#82a29f" d="M9 3h1v1h-1zM8 4h2v1h-2zM7 5h3v1h-3zM6 6h4v1h-4zM5 7h5v1h-5zM4 8h6v1h-6zM5 9h5v1h-5zM6 10h4v1h-4zM7 11h3v1h-3zM8 12h2v1h-2zM9 13h1v1h-1z"/></svg>
<div style="left:1098px;top:84px;width:44px;height:24px;background:#2b3a3a;border:1px solid #60827d;"></div>
<svg class="p" style="left:1113px;top:92px;fill:#82a29f" width="14" height="9" role="img"><title>12</title><use href="#g49"/><use href="#g50" x="7"/></svg>
<div style="left:1144px;top:84px;width:24px;height:24px;background:#2c3334;border:2px solid #60827d;"></div>
<svg class="i" style="left:1148px;top:88px" width="16" height="16" viewBox="0 0 16 16"><path fill="#82a29f" d="M6 3h1v1h-1zM6 4h2v1h-2zM6 5h3v1h-3zM6 6h4v1h-4zM6 7h5v1h-5zM6 8h6v1h-6zM6 9h5v1h-5zM6 10h4v1h-4zM6 11h3v1h-3zM6 12h2v1h-2zM6 13h1v1h-1z"/></svg>
<div style="left:1192px;top:84px;width:24px;height:24px;background:#334e57;border:2px solid #5f9aa8;"></div>
<svg class="i" style="left:1196px;top:88px" width="16" height="16" viewBox="0 0 16 16"><path fill="#6aa9b8" d="M7 1h1v1h-1zM7 2h2v1h-2zM6 3h1v1h-1zM8 3h1v1h-1zM6 4h1v1h-1zM8 4h2v1h-2zM5 5h1v1h-1zM9 5h1v1h-1zM5 6h1v1h-1zM9 6h2v1h-2zM4 7h1v1h-1zM10 7h1v1h-1zM4 8h8v1h-8zM3 9h1v1h-1zM10 9h3v1h-3zM3 10h1v1h-1zM11 10h2v1h-2zM2 11h1v1h-1zM11 11h3v1h-3zM2 12h1v1h-1zM12 12h2v1h-2zM1 13h1v1h-1zM12 13h3v1h-3zM0 14h4v1h-4zM11 14h5v1h-5z"/></svg>
<div style="left:1220px;top:84px;width:24px;height:24px;background:#2c3334;border:2px solid #5b6462;"></div>
<svg class="i" style="left:1224px;top:88px" width="16" height="16" viewBox="0 0 16 16"><path fill="#666b69" d="M4 1h10v1h-10zM4 2h1v1h-1zM13 2h1v1h-1zM2 3h3v1h-3zM13 3h1v1h-1zM2 4h1v1h-1zM13 4h1v1h-1zM2 5h1v1h-1zM13 5h1v1h-1zM2 6h1v1h-1zM13 6h1v1h-1zM2 7h1v1h-1zM13 7h1v1h-1zM2 8h1v1h-1zM7 8h1v1h-1zM11 8h1v1h-1zM13 8h1v1h-1zM2 9h1v1h-1zM8 9h1v1h-1zM10 9h1v1h-1zM13 9h1v1h-1zM2 10h1v1h-1zM9 10h1v1h-1zM13 10h1v1h-1zM2 11h1v1h-1zM8 11h1v1h-1zM10 11h1v1h-1zM13 11h1v1h-1zM2 12h1v1h-1zM7 12h1v1h-1zM11 12h1v1h-1zM13 12h1v1h-1zM2 13h1v1h-1zM13 13h1v1h-1zM2 14h12v1h-12z"/></svg>
<svg class="p" style="left:1259px;top:92px;fill:#82a29f" width="52" height="9" role="img"><title>Charset:</title><use href="#g67"/><use href="#g104" x="7"/><use href="#g97" x="14"/><use href="#g114" x="21"/><use href="#g115" x="28"/><use href="#g101" x="35"/><use href="#g116" x="42"/><use href="#g58" x="49"/></svg>
<div style="left:1312px;top:84px;width:84px;height:24px;background:#2c3334;border:1px solid #60827d;"></div>
<svg class="p" style="left:1316px;top:92px;fill:#82a29f" width="75" height="9" role="img"><title>ISO-8859-15</title><use href="#g73"/><use href="#g83" x="7"/><use href="#g79" x="14"/><use href="#g45" x="21"/><use href="#g56" x="27"/><use href="#g56" x="34"/><use href="#g53" x="41"/><use href="#g57" x="48"/><use href="#g45" x="55"/><use href="#g49" x="61"/><use href="#g53" x="68"/></svg>
<div style="left:1398px;top:84px;width:32px;height:24px;background:#2c3334;border:1px solid #60827d;"></div>
<svg class="p" style="left:1403px;top:92px;fill:#82a29f" width="21" height="9" role="img"><title>2/2</title><use href="#g50"/><use href="#g47" x="7"/><use href="#g50" x="14"/></svg>
<svg class="p" style="left:1457px;top:92px;fill:#82a29f" width="71" height="9" role="img"><title>Shapes rec:</title><use href="#g83"/><use href="#g104" x="7"/><use href="#g97" x="14"/><use href="#g112" x="21"/><use href="#g101" x="28"/><use href="#g115" x="35"/><use href="#g114" x="47"/><use href="#g101" x="54"/><use href="#g99" x="61"/><use href="#g58" x="68"/></svg>
<div style="left:1538px;top:84px;width:24px;height:24px;background:#2c3334;border:2px solid #60827d;"></div>
<svg class="i" style="left:1542px;top:88px" width="16" height="16" viewBox="0 0 16 16"><path fill="#82a29f" d="M2 2h12v1h-12zM2 3h1v1h-1zM13 3h1v1h-1zM2 4h1v1h-1zM13 4h1v1h-1zM2 5h1v1h-1zM13 5h1v1h-1zM2 6h1v1h-1zM13 6h1v1h-1zM2 7h1v1h-1zM13 7h1v1h-1zM2 8h1v1h-1zM13 8h1v1h-1zM2 9h1v1h-1zM9 9h5v1h-5zM2 10h1v1h-1zM9 10h5v1h-5zM2 11h1v1h-1zM9 11h5v1h-5zM2 12h1v1h-1zM9 12h5v1h-5zM2 13h12v1h-12z"/></svg>
<div style="left:1566px;top:84px;width:24px;height:24px;background:#2c3334;border:2px solid #60827d;"></div>
<svg class="i" style="left:1570px;top:88px" width="16" height="16" viewBox="0 0 16 16"><path fill="#82a29f" d="M2 2h12v1h-12zM2 3h1v1h-1zM12 3h2v1h-2zM2 4h1v1h-1zM11 4h1v1h-1zM13 4h1v1h-1zM2 5h1v1h-1zM10 5h1v1h-1zM13 5h1v1h-1zM2 6h1v1h-1zM9 6h1v1h-1zM13 6h1v1h-1zM2 7h1v1h-1zM8 7h1v1h-1zM13 7h1v1h-1zM2 8h1v1h-1zM7 8h1v1h-1zM13 8h1v1h-1zM2 9h1v1h-1zM6 9h1v1h-1zM13 9h1v1h-1zM2 10h1v1h-1zM5 10h1v1h-1zM13 10h1v1h-1zM2 11h1v1h-1zM4 11h1v1h-1zM13 11h1v1h-1zM2 12h2v1h-2zM13 12h1v1h-1zM2 13h12v1h-12z"/></svg>
<div style="left:1594px;top:84px;width:24px;height:24px;background:#2c3334;border:1px solid #60827d;"></div>
<svg class="i" style="left:1598px;top:88px" width="16" height="16" viewBox="0 0 16 16"><path fill="#82a29f" d="M2 2h12v1h-12zM2 3h1v1h-1zM13 3h1v1h-1zM2 4h1v1h-1zM13 4h1v1h-1zM2 5h1v1h-1zM13 5h1v1h-1zM2 6h1v1h-1zM13 6h1v1h-1zM2 7h1v1h-1zM13 7h1v1h-1zM2 8h1v1h-1zM13 8h1v1h-1zM2 9h1v1h-1zM13 9h1v1h-1zM2 10h1v1h-1zM13 10h1v1h-1zM2 11h1v1h-1zM13 11h1v1h-1zM2 12h1v1h-1zM13 12h1v1h-1zM2 13h12v1h-12z"/></svg>
<div style="left:1192px;top:112px;width:179px;height:20px;background:#2b3a3a;border:1px solid #638465;"></div>
<svg class="p" style="left:1200px;top:118px;fill:#82a29f" width="163" height="9" role="img"><title>Load custom charset file</title><use href="#g76"/><use href="#g111" x="7"/><use href="#g97" x="14"/><use href="#g100" x="21"/><use href="#g99" x="33"/><use href="#g117" x="40"/><use href="#g115" x="47"/><use href="#g116" x="54"/><use href="#g111" x="61"/><use href="#g109" x="68"/><use href="#g99" x="81"/><use href="#g104" x="88"/><use href="#g97" x="95"/><use href="#g114" x="102"/><use href="#g115" x="109"/><use href="#g101" x="116"/><use href="#g116" x="123"/><use href="#g102" x="135"/><use href="#g105" x="142"/><use href="#g108" x="149"/><use href="#g101" x="156"/></svg>
<div style="left:1142px;top:202px;width:256px;height:256px;background:#000;border:1px solid #a3283a;"></div>
<div style="left:1395px;top:455px;width:2px;height:2px;background:#fff;"></div>
<svg class="p" style="left:1142px;top:202px;fill:#fff" width="256" height="256"><path d="M17 4h2v1h-2zM17 5h2v1h-2zM17 6h2v1h-2zM17 7h2v1h-2zM17 8h2v1h-2zM17 10h2v1h-2zM27 4h2v1h-2zM30 4h2v1h-2zM27 5h2v1h-2zM30 5h2v1h-2zM28 6h1v1h-1zM31 6h1v1h-1zM41 4h1v1h-1zM43 4h1v1h-1zM40 5h5v1h-5zM41 6h1v1h-1zM43 6h1v1h-1zM40 7h5v1h-5zM41 8h1v1h-1zM43 8h1v1h-1zM55 4h2v1h-2zM53 5h6v1h-6zM53 6h2v1h-2zM53 7h6v1h-6zM57 8h2v1h-2zM53 9h6v1h-6zM55 10h2v1h-2zM67 4h3v1h-3zM73 4h1v1h-1zM67 5h1v1h-1zM69 5h1v1h-1zM72 5h1v1h-1zM67 6h3v1h-3zM71 6h1v1h-1zM70 7h1v1h-1zM69 8h1v1h-1zM71 8h3v1h-3zM68 9h1v1h-1zM71 9h1v1h-1zM73 9h1v1h-1zM67 10h1v1h-1zM71 10h3v1h-3zM83 4h3v1h-3zM82 5h2v1h-2zM83 6h3v1h-3zM82 7h2v1h-2zM82 8h2v1h-2zM85 8h2v1h-2zM82 9h2v1h-2zM85 9h1v1h-1zM83 10h2v1h-2zM86 10h1v1h-1zM97 4h1v1h-1zM96 5h1v1h-1zM95 6h1v1h-1zM107 4h3v1h-3zM106 5h2v1h-2zM106 6h2v1h-2zM106 7h2v1h-2zM106 8h2v1h-2zM106 9h2v1h-2zM106 10h2v1h-2zM107 11h3v1h-3zM118 4h3v1h-3zM120 5h2v1h-2zM120 6h2v1h-2zM120 7h2v1h-2zM120 8h2v1h-2zM120 9h2v1h-2zM120 10h2v1h-2zM118 11h3v1h-3zM132 4h1v1h-1zM131 5h3v1h-3zM130 6h2v1h-2zM133 6h2v1h-2zM131 7h3v1h-3zM132 8h1v1h-1zM145 4h1v1h-1zM145 5h1v1h-1zM143 6h5v1h-5zM145 7h1v1h-1zM145 8h1v1h-1zM156 4h2v1h-2zM156 5h2v1h-2zM157 6h1v1h-1zM166 4h5v1h-5zM179 4h2v1h-2zM179 5h2v1h-2zM195 4h1v1h-1zM194 5h1v1h-1zM193 6h1v1h-1zM192 7h1v1h-1zM191 8h1v1h-1zM190 9h1v1h-1zM189 10h1v1h-1zM204 4h7v1h-7zM204 5h3v1h-3zM209 5h2v1h-2zM204 6h3v1h-3zM209 6h2v1h-2zM204 7h3v1h-3zM209 7h2v1h-2zM204 8h3v1h-3zM209 8h2v1h-2zM204 9h7v1h-7zM220 4h3v1h-3zM221 5h2v1h-2zM221 6h2v1h-2zM221 7h2v1h-2zM221 8h2v1h-2zM219 9h6v1h-6zM233 4h6v1h-6zM237 5h2v1h-2zM233 6h6v1h-6zM233 7h2v1h-2zM233 8h2v1h-2zM233 9h6v1h-6zM4 24h6v1h-6zM8 25h2v1h-2zM6 26h4v1h-4zM8 27h2v1h-2zM8 28h2v1h-2zM4 29h6v1h-6zM18 24h2v1h-2zM22 24h2v1h-2zM18 25h2v1h-2zM22 25h2v1h-2zM18 26h2v1h-2zM22 26h2v1h-2zM18 27h6v1h-6zM22 28h2v1h-2zM22 29h2v1h-2zM32 24h6v1h-6zM32 25h2v1h-2zM32 26h6v1h-6zM36 27h2v1h-2zM36 28h2v1h-2zM32 29h6v1h-6zM46 24h6v1h-6zM46 25h2v1h-2zM46 26h6v1h-6zM46 27h2v1h-2zM50 27h2v1h-2zM46 28h2v1h-2zM50 28h2v1h-2zM46 29h6v1h-6zM60 24h6v1h-6zM64 25h2v1h-2zM63 26h2v1h-2zM62 27h2v1h-2zM61 28h2v1h-2zM61 29h2v1h-2zM74 24h6v1h-6zM74 25h2v1h-2zM78 25h2v1h-2zM74 26h6v1h-6zM74 27h2v1h-2zM78 27h2v1h-2zM74 28h2v1h-2zM78 28h2v1h-2zM74 29h6v1h-6zM88 24h6v1h-6zM88 25h2v1h-2zM92 25h2v1h-2zM88 26h2v1h-2zM92 26h2v1h-2zM88 27h6v1h-6zM92 28h2v1h-2zM88 29h6v1h-6zM102 24h2v1h-2zM102 25h2v1h-2zM102 27h2v1h-2zM102 28h2v1h-2zM112 24h2v1h-2zM112 25h2v1h-2zM112 27h2v1h-2zM112 28h2v1h-2zM113 29h1v1h-1zM124 24h1v1h-1zM123 25h1v1h-1zM122 26h1v1h-1zM123 27h1v1h-1zM124 28h1v1h-1zM133 24h5v1h-5zM133 26h5v1h-5zM146 24h1v1h-1zM147 25h1v1h-1zM148 26h1v1h-1zM147 27h1v1h-1zM146 28h1v1h-1zM157 24h6v1h-6zM157 25h2v1h-2zM161 25h2v1h-2zM160 26h3v1h-3zM159 27h2v1h-2zM159 28h2v1h-2zM159 30h2v1h-2zM171 24h7v1h-7zM171 25h1v1h-1zM177 25h1v1h-1zM171 26h1v1h-1zM173 26h3v1h-3zM177 26h1v1h-1zM171 27h1v1h-1zM173 27h1v1h-1zM175 27h1v1h-1zM177 27h1v1h-1zM171 28h1v1h-1zM173 28h5v1h-5zM171 29h1v1h-1zM171 30h7v1h-7zM186 24h6v1h-6zM186 25h2v1h-2zM190 25h2v1h-2zM186 26h2v1h-2zM190 26h2v1h-2zM186 27h6v1h-6zM186 28h2v1h-2zM190 28h2v1h-2zM186 29h2v1h-2zM190 29h2v1h-2zM186 30h2v1h-2zM190 30h2v1h-2zM200 24h6v1h-6zM200 25h2v1h-2zM204 25h2v1h-2zM200 26h2v1h-2zM204 26h2v1h-2zM200 27h5v1h-5zM200 28h2v1h-2zM204 28h2v1h-2zM200 29h2v1h-2zM204 29h2v1h-2zM200 30h6v1h-6zM214 24h6v1h-6zM214 25h2v1h-2zM218 25h2v1h-2zM214 26h2v1h-2zM214 27h2v1h-2zM214 28h2v1h-2zM214 29h2v1h-2zM218 29h2v1h-2zM214 30h6v1h-6zM228 24h5v1h-5zM228 25h2v1h-2zM232 25h2v1h-2zM228 26h2v1h-2zM232 26h2v1h-2zM228 27h2v1h-2zM232 27h2v1h-2zM228 28h2v1h-2zM232 28h2v1h-2zM228 29h2v1h-2zM232 29h2v1h-2zM228 30h5v1h-5zM4 44h6v1h-6zM4 45h2v1h-2zM4 46h2v1h-2zM4 47h5v1h-5zM4 48h2v1h-2zM4 49h2v1h-2zM4 50h6v1h-6zM18 44h6v1h-6zM18 45h2v1h-2zM18 46h2v1h-2zM18 47h5v1h-5zM18 48h2v1h-2zM18 49h2v1h-2zM18 50h2v1h-2zM32 44h6v1h-6zM32 45h2v1h-2zM32 46h2v1h-2zM32 47h2v1h-2zM35 47h3v1h-3zM32 48h2v1h-2zM36 48h2v1h-2zM32 49h2v1h-2zM36 49h2v1h-2zM32 50h6v1h-6zM46 44h2v1h-2zM50 44h2v1h-2zM46 45h2v1h-2zM50 45h2v1h-2zM46 46h2v1h-2zM50 46h2v1h-2zM46 47h6v1h-6zM46 48h2v1h-2zM50 48h2v1h-2zM46 49h2v1h-2zM50 49h2v1h-2zM46 50h2v1h-2zM50 50h2v1h-2zM60 44h6v1h-6zM62 45h2v1h-2zM62 46h2v1h-2zM62 47h2v1h-2zM62 48h2v1h-2zM62 49h2v1h-2zM60 50h6v1h-6zM78 44h2v1h-2zM78 45h2v1h-2zM78 46h2v1h-2zM78 47h2v1h-2zM74 48h2v1h-2zM78 48h2v1h-2zM74 49h2v1h-2zM78 49h2v1h-2zM74 50h6v1h-6zM88 44h2v1h-2zM92 44h2v1h-2zM88 45h2v1h-2zM91 45h2v1h-2zM88 46h4v1h-4zM88 47h3v1h-3zM88 48h4v1h-4zM88 49h2v1h-2zM91 49h2v1h-2zM88 50h2v1h-2zM92 50h2v1h-2zM102 44h2v1h-2zM102 45h2v1h-2zM102 46h2v1h-2zM102 47h2v1h-2zM102 48h2v1h-2zM102 49h2v1h-2zM102 50h6v1h-6zM116 44h2v1h-2zM121 44h2v1h-2zM116 45h3v1h-3zM120 45h3v1h-3zM116 46h7v1h-7zM116 47h2v1h-2zM119 47h1v1h-1zM121 47h2v1h-2zM116 48h2v1h-2zM121 48h2v1h-2zM116 49h2v1h-2zM121 49h2v1h-2zM116 50h2v1h-2zM121 50h2v1h-2zM131 44h2v1h-2zM135 44h2v1h-2zM131 45h3v1h-3zM135 45h2v1h-2zM131 46h6v1h-6zM131 47h2v1h-2zM134 47h3v1h-3zM131 48h2v1h-2zM135 48h2v1h-2zM131 49h2v1h-2zM135 49h2v1h-2zM131 50h2v1h-2zM135 50h2v1h-2zM145 44h6v1h-6zM145 45h2v1h-2zM149 45h2v1h-2zM145 46h2v1h-2zM149 46h2v1h-2zM145 47h2v1h-2zM149 47h2v1h-2zM145 48h2v1h-2zM149 48h2v1h-2zM145 49h2v1h-2zM149 49h2v1h-2zM145 50h6v1h-6zM159 44h6v1h-6zM159 45h2v1h-2zM163 45h2v1h-2zM159 46h2v1h-2zM163 46h2v1h-2zM159 47h6v1h-6zM159 48h2v1h-2zM159 49h2v1h-2zM159 50h2v1h-2zM173 44h6v1h-6zM173 45h2v1h-2zM177 45h2v1h-2zM173 46h2v1h-2zM177 46h2v1h-2zM173 47h2v1h-2zM177 47h2v1h-2zM173 48h2v1h-2zM177 48h2v1h-2zM173 49h2v1h-2zM176 49h3v1h-3zM173 50h6v1h-6zM178 51h1v1h-1zM187 44h6v1h-6zM187 45h2v1h-2zM191 45h2v1h-2zM187 46h2v1h-2zM191 46h2v1h-2zM187 47h5v1h-5zM187 48h2v1h-2zM190 48h2v1h-2zM187 49h2v1h-2zM191 49h2v1h-2zM187 50h2v1h-2zM191 50h2v1h-2zM201 44h6v1h-6zM201 45h2v1h-2zM201 46h2v1h-2zM201 47h6v1h-6zM205 48h2v1h-2zM205 49h2v1h-2zM201 50h6v1h-6zM215 44h6v1h-6zM217 45h2v1h-2zM217 46h2v1h-2zM217 47h2v1h-2zM217 48h2v1h-2zM217 49h2v1h-2zM217 50h2v1h-2zM229 44h2v1h-2zM233 44h2v1h-2zM229 45h2v1h-2zM233 45h2v1h-2zM229 46h2v1h-2zM233 46h2v1h-2zM229 47h2v1h-2zM233 47h2v1h-2zM229 48h2v1h-2zM233 48h2v1h-2zM229 49h2v1h-2zM233 49h2v1h-2zM229 50h6v1h-6zM4 64h2v1h-2zM8 64h2v1h-2zM4 65h2v1h-2zM8 65h2v1h-2zM4 66h2v1h-2zM8 66h2v1h-2zM4 67h2v1h-2zM8 67h2v1h-2zM4 68h6v1h-6zM5 69h4v1h-4zM6 70h2v1h-2zM18 64h2v1h-2zM23 64h2v1h-2zM18 65h2v1h-2zM23 65h2v1h-2zM18 66h2v1h-2zM21 66h1v1h-1zM23 66h2v1h-2zM18 67h2v1h-2zM21 67h1v1h-1zM23 67h2v1h-2zM18 68h2v1h-2zM21 68h1v1h-1zM23 68h2v1h-2zM18 69h7v1h-7zM19 70h2v1h-2zM22 70h2v1h-2zM33 64h2v1h-2zM37 64h2v1h-2zM33 65h2v1h-2zM37 65h2v1h-2zM34 66h4v1h-4zM35 67h2v1h-2zM34 68h4v1h-4zM33 69h2v1h-2zM37 69h2v1h-2zM33 70h2v1h-2zM37 70h2v1h-2zM47 64h2v1h-2zM51 64h2v1h-2zM47 65h2v1h-2zM51 65h2v1h-2zM47 66h2v1h-2zM51 66h2v1h-2zM47 67h6v1h-6zM49 68h2v1h-2zM49 69h2v1h-2zM49 70h2v1h-2zM61 64h6v1h-6zM65 65h2v1h-2zM64 66h2v1h-2zM63 67h2v1h-2zM62 68h2v1h-2zM61 69h2v1h-2zM61 70h6v1h-6zM75 64h4v1h-4zM75 65h2v1h-2zM75 66h2v1h-2zM75 67h2v1h-2zM75 68h2v1h-2zM75 69h2v1h-2zM75 70h2v1h-2zM75 71h4v1h-4zM87 64h1v1h-1zM88 65h1v1h-1zM89 66h1v1h-1zM90 67h1v1h-1zM91 68h1v1h-1zM92 69h1v1h-1zM93 70h1v1h-1zM102 64h4v1h-4zM104 65h2v1h-2zM104 66h2v1h-2zM104 67h2v1h-2zM104 68h2v1h-2zM104 69h2v1h-2zM104 70h2v1h-2zM102 71h4v1h-4zM115 64h2v1h-2zM114 65h1v1h-1zM117 65h1v1h-1zM126 64h6v1h-6zM140 64h1v1h-1zM141 65h1v1h-1zM150 64h5v1h-5zM153 65h2v1h-2zM150 66h5v1h-5zM150 67h2v1h-2zM153 67h2v1h-2zM150 68h6v1h-6zM164 64h3v1h-3zM165 65h2v1h-2zM165 66h5v1h-5zM165 67h2v1h-2zM168 67h2v1h-2zM165 68h2v1h-2zM168 68h2v1h-2zM165 69h2v1h-2zM168 69h2v1h-2zM165 70h5v1h-5zM178 64h6v1h-6zM178 65h2v1h-2zM178 66h2v1h-2zM178 67h2v1h-2zM178 68h6v1h-6zM195 64h3v1h-3zM195 65h2v1h-2zM192 66h5v1h-5zM192 67h2v1h-2zM195 67h2v1h-2zM192 68h2v1h-2zM195 68h2v1h-2zM192 69h2v1h-2zM195 69h2v1h-2zM192 70h5v1h-5zM206 64h6v1h-6zM206 65h2v1h-2zM210 65h2v1h-2zM206 66h6v1h-6zM206 67h2v1h-2zM206 68h6v1h-6zM222 64h4v1h-4zM222 65h2v1h-2zM220 66h5v1h-5zM222 67h2v1h-2zM222 68h2v1h-2zM222 69h2v1h-2zM222 70h2v1h-2zM234 64h6v1h-6zM234 65h2v1h-2zM238 65h2v1h-2zM234 66h2v1h-2zM238 66h2v1h-2zM234 67h6v1h-6zM238 68h2v1h-2zM238 69h2v1h-2zM234 70h6v1h-6zM4 84h2v1h-2zM4 85h2v1h-2zM4 86h6v1h-6zM4 87h2v1h-2zM8 87h2v1h-2zM4 88h2v1h-2zM8 88h2v1h-2zM4 89h2v1h-2zM8 89h2v1h-2zM4 90h2v1h-2zM8 90h2v1h-2zM20 84h2v1h-2zM19 86h3v1h-3zM20 87h2v1h-2zM20 88h2v1h-2zM20 89h2v1h-2zM18 90h6v1h-6zM35 84h2v1h-2zM34 86h3v1h-3zM35 87h2v1h-2zM35 88h2v1h-2zM35 89h2v1h-2zM35 90h2v1h-2zM32 91h2v1h-2zM35 91h2v1h-2zM32 92h5v1h-5zM45 84h2v1h-2zM45 85h2v1h-2zM45 86h2v1h-2zM49 86h2v1h-2zM45 87h2v1h-2zM48 87h2v1h-2zM45 88h4v1h-4zM45 89h2v1h-2zM48 89h2v1h-2zM45 90h2v1h-2zM49 90h2v1h-2zM60 84h3v1h-3zM61 85h2v1h-2zM61 86h2v1h-2zM61 87h2v1h-2zM61 88h2v1h-2zM61 89h2v1h-2zM59 90h6v1h-6zM73 84h7v1h-7zM73 85h2v1h-2zM76 85h1v1h-1zM78 85h2v1h-2zM73 86h2v1h-2zM76 86h1v1h-1zM78 86h2v1h-2zM73 87h2v1h-2zM76 87h1v1h-1zM78 87h2v1h-2zM73 88h2v1h-2zM76 88h1v1h-1zM78 88h2v1h-2zM88 84h6v1h-6zM89 85h2v1h-2zM92 85h2v1h-2zM89 86h2v1h-2zM92 86h2v1h-2zM89 87h2v1h-2zM92 87h2v1h-2zM89 88h2v1h-2zM92 88h2v1h-2zM102 84h6v1h-6zM102 85h2v1h-2zM106 85h2v1h-2zM102 86h2v1h-2zM106 86h2v1h-2zM102 87h2v1h-2zM106 87h2v1h-2zM102 88h6v1h-6zM116 84h6v1h-6zM116 85h2v1h-2zM120 85h2v1h-2zM116 86h2v1h-2zM120 86h2v1h-2zM116 87h2v1h-2zM120 87h2v1h-2zM116 88h6v1h-6zM116 89h2v1h-2zM116 90h2v1h-2zM130 84h6v1h-6zM130 85h2v1h-2zM134 85h2v1h-2zM130 86h2v1h-2zM134 86h2v1h-2zM130 87h2v1h-2zM134 87h2v1h-2zM130 88h6v1h-6zM134 89h2v1h-2zM134 90h2v1h-2zM144 84h6v1h-6zM145 85h2v1h-2zM145 86h2v1h-2zM145 87h2v1h-2zM145 88h2v1h-2zM158 84h6v1h-6zM158 85h2v1h-2zM158 86h6v1h-6zM162 87h2v1h-2zM158 88h6v1h-6zM173 84h2v1h-2zM172 85h6v1h-6zM173 86h2v1h-2zM173 87h2v1h-2zM173 88h2v1h-2zM173 89h5v1h-5zM186 84h2v1h-2zM190 84h2v1h-2zM186 85h2v1h-2zM190 85h2v1h-2zM186 86h2v1h-2zM190 86h2v1h-2zM186 87h2v1h-2zM190 87h2v1h-2zM186 88h6v1h-6zM200 84h2v1h-2zM204 84h2v1h-2zM200 85h2v1h-2zM204 85h2v1h-2zM200 86h2v1h-2zM204 86h2v1h-2zM201 87h4v1h-4zM202 88h2v1h-2zM214 84h2v1h-2zM217 84h1v1h-1zM219 84h2v1h-2zM214 85h2v1h-2zM217 85h1v1h-1zM219 85h2v1h-2zM214 86h2v1h-2zM217 86h1v1h-1zM219 86h2v1h-2zM214 87h2v1h-2zM217 87h1v1h-1zM219 87h2v1h-2zM215 88h2v1h-2zM218 88h2v1h-2zM229 84h2v1h-2zM233 84h2v1h-2zM230 85h4v1h-4zM231 86h2v1h-2zM230 87h4v1h-4zM229 88h2v1h-2zM233 88h2v1h-2zM4 104h2v1h-2zM8 104h2v1h-2zM4 105h2v1h-2zM8 105h2v1h-2zM4 106h2v1h-2zM8 106h2v1h-2zM4 107h6v1h-6zM8 108h2v1h-2zM8 109h2v1h-2zM4 110h6v1h-6zM18 104h6v1h-6zM21 105h2v1h-2zM20 106h2v1h-2zM19 107h2v1h-2zM18 108h6v1h-6zM34 104h2v1h-2zM33 105h2v1h-2zM33 106h2v1h-2zM32 107h2v1h-2zM33 108h2v1h-2zM33 109h2v1h-2zM33 110h2v1h-2zM34 111h2v1h-2zM44 104h2v1h-2zM44 105h2v1h-2zM44 106h2v1h-2zM44 107h2v1h-2zM44 108h2v1h-2zM44 109h2v1h-2zM44 110h2v1h-2zM44 111h2v1h-2zM54 104h2v1h-2zM55 105h2v1h-2zM55 106h2v1h-2zM56 107h2v1h-2zM55 108h2v1h-2zM55 109h2v1h-2zM55 110h2v1h-2zM54 111h2v1h-2zM67 104h2v1h-2zM70 104h1v1h-1zM66 105h1v1h-1zM68 105h2v1h-2zM79 104h2v1h-2zM79 106h2v1h-2zM79 107h2v1h-2zM79 108h2v1h-2zM79 109h2v1h-2zM79 110h2v1h-2zM240 123h1v1h-1zM241 124h1v1h-1zM238 126h6v1h-6zM238 127h2v1h-2zM242 127h2v1h-2zM238 128h2v1h-2zM242 128h2v1h-2zM238 129h6v1h-6zM238 130h2v1h-2zM242 130h2v1h-2zM238 131h2v1h-2zM242 131h2v1h-2zM238 132h2v1h-2zM242 132h2v1h-2zM7 143h1v1h-1zM6 144h1v1h-1zM4 146h6v1h-6zM4 147h2v1h-2zM8 147h2v1h-2zM4 148h2v1h-2zM8 148h2v1h-2zM4 149h6v1h-6zM4 150h2v1h-2zM8 150h2v1h-2zM4 151h2v1h-2zM8 151h2v1h-2zM4 152h2v1h-2zM8 152h2v1h-2zM20 143h2v1h-2zM19 144h1v1h-1zM22 144h1v1h-1zM18 146h6v1h-6zM18 147h2v1h-2zM22 147h2v1h-2zM18 148h2v1h-2zM22 148h2v1h-2zM18 149h6v1h-6zM18 150h2v1h-2zM22 150h2v1h-2zM18 151h2v1h-2zM22 151h2v1h-2zM18 152h2v1h-2zM22 152h2v1h-2zM33 143h2v1h-2zM36 143h1v1h-1zM32 144h1v1h-1zM34 144h2v1h-2zM32 146h6v1h-6zM32 147h2v1h-2zM36 147h2v1h-2zM32 148h2v1h-2zM36 148h2v1h-2zM32 149h6v1h-6zM32 150h2v1h-2zM36 150h2v1h-2zM32 151h2v1h-2zM36 151h2v1h-2zM32 152h2v1h-2zM36 152h2v1h-2zM46 143h2v1h-2zM50 143h2v1h-2zM46 144h2v1h-2zM50 144h2v1h-2zM46 146h6v1h-6zM46 147h2v1h-2zM50 147h2v1h-2zM46 148h2v1h-2zM50 148h2v1h-2zM46 149h6v1h-6zM46 150h2v1h-2zM50 150h2v1h-2zM46 151h2v1h-2zM50 151h2v1h-2zM46 152h2v1h-2zM50 152h2v1h-2zM63 143h2v1h-2zM63 144h2v1h-2zM61 146h6v1h-6zM61 147h2v1h-2zM65 147h2v1h-2zM61 148h2v1h-2zM65 148h2v1h-2zM61 149h6v1h-6zM61 150h2v1h-2zM65 150h2v1h-2zM61 151h2v1h-2zM65 151h2v1h-2zM61 152h2v1h-2zM65 152h2v1h-2zM106 143h1v1h-1zM107 144h1v1h-1zM104 146h6v1h-6zM104 147h2v1h-2zM104 148h2v1h-2zM104 149h5v1h-5zM104 150h2v1h-2zM104 151h2v1h-2zM104 152h6v1h-6zM121 143h1v1h-1zM120 144h1v1h-1zM118 146h6v1h-6zM118 147h2v1h-2zM118 148h2v1h-2zM118 149h5v1h-5zM118 150h2v1h-2zM118 151h2v1h-2zM118 152h6v1h-6zM134 143h2v1h-2zM133 144h1v1h-1zM136 144h1v1h-1zM132 146h6v1h-6zM132 147h2v1h-2zM132 148h2v1h-2zM132 149h5v1h-5zM132 150h2v1h-2zM132 151h2v1h-2zM132 152h6v1h-6zM146 143h2v1h-2zM150 143h2v1h-2zM146 144h2v1h-2zM150 144h2v1h-2zM146 146h6v1h-6zM146 147h2v1h-2zM146 148h2v1h-2zM146 149h5v1h-5zM146 150h2v1h-2zM146 151h2v1h-2zM146 152h6v1h-6zM163 143h1v1h-1zM164 144h1v1h-1zM161 146h6v1h-6zM163 147h2v1h-2zM163 148h2v1h-2zM163 149h2v1h-2zM163 150h2v1h-2zM163 151h2v1h-2zM161 152h6v1h-6zM178 143h1v1h-1zM177 144h1v1h-1zM175 146h6v1h-6zM177 147h2v1h-2zM177 148h2v1h-2zM177 149h2v1h-2zM177 150h2v1h-2zM177 151h2v1h-2zM175 152h6v1h-6zM191 143h2v1h-2zM190 144h1v1h-1zM193 144h1v1h-1zM189 146h6v1h-6zM191 147h2v1h-2zM191 148h2v1h-2zM191 149h2v1h-2zM191 150h2v1h-2zM191 151h2v1h-2zM189 152h6v1h-6zM203 143h2v1h-2zM207 143h2v1h-2zM203 144h2v1h-2zM207 144h2v1h-2zM203 146h6v1h-6zM205 147h2v1h-2zM205 148h2v1h-2zM205 149h2v1h-2zM205 150h2v1h-2zM205 151h2v1h-2zM203 152h6v1h-6zM233 143h2v1h-2zM236 143h1v1h-1zM232 144h1v1h-1zM234 144h2v1h-2zM232 146h2v1h-2zM236 146h2v1h-2zM232 147h3v1h-3zM236 147h2v1h-2zM232 148h6v1h-6zM232 149h2v1h-2zM235 149h3v1h-3zM232 150h2v1h-2zM236 150h2v1h-2zM232 151h2v1h-2zM236 151h2v1h-2zM232 152h2v1h-2zM236 152h2v1h-2zM6 163h1v1h-1zM7 164h1v1h-1zM4 166h6v1h-6zM4 167h2v1h-2zM8 167h2v1h-2zM4 168h2v1h-2zM8 168h2v1h-2zM4 169h2v1h-2zM8 169h2v1h-2zM4 170h2v1h-2zM8 170h2v1h-2zM4 171h2v1h-2zM8 171h2v1h-2zM4 172h6v1h-6zM21 163h1v1h-1zM20 164h1v1h-1zM18 166h6v1h-6zM18 167h2v1h-2zM22 167h2v1h-2zM18 168h2v1h-2zM22 168h2v1h-2zM18 169h2v1h-2zM22 169h2v1h-2zM18 170h2v1h-2zM22 170h2v1h-2zM18 171h2v1h-2zM22 171h2v1h-2zM18 172h6v1h-6zM34 163h2v1h-2zM33 164h1v1h-1zM36 164h1v1h-1zM32 166h6v1h-6zM32 167h2v1h-2zM36 167h2v1h-2zM32 168h2v1h-2zM36 168h2v1h-2zM32 169h2v1h-2zM36 169h2v1h-2zM32 170h2v1h-2zM36 170h2v1h-2zM32 171h2v1h-2zM36 171h2v1h-2zM32 172h6v1h-6zM47 163h2v1h-2zM50 163h1v1h-1zM46 164h1v1h-1zM48 164h2v1h-2zM46 166h6v1h-6zM46 167h2v1h-2zM50 167h2v1h-2zM46 168h2v1h-2zM50 168h2v1h-2zM46 169h2v1h-2zM50 169h2v1h-2zM46 170h2v1h-2zM50 170h2v1h-2zM46 171h2v1h-2zM50 171h2v1h-2zM46 172h6v1h-6zM60 163h2v1h-2zM64 163h2v1h-2zM60 164h2v1h-2zM64 164h2v1h-2zM60 166h6v1h-6zM60 167h2v1h-2zM64 167h2v1h-2zM60 168h2v1h-2zM64 168h2v1h-2zM60 169h2v1h-2zM64 169h2v1h-2zM60 170h2v1h-2zM64 170h2v1h-2zM60 171h2v1h-2zM64 171h2v1h-2zM60 172h6v1h-6zM104 163h1v1h-1zM105 164h1v1h-1zM102 166h2v1h-2zM106 166h2v1h-2zM102 167h2v1h-2zM106 167h2v1h-2zM102 168h2v1h-2zM106 168h2v1h-2zM102 169h2v1h-2zM106 169h2v1h-2zM102 170h2v1h-2zM106 170h2v1h-2zM102 171h2v1h-2zM106 171h2v1h-2zM102 172h6v1h-6zM119 163h1v1h-1zM118 164h1v1h-1zM116 166h2v1h-2zM120 166h2v1h-2zM116 167h2v1h-2zM120 167h2v1h-2zM116 168h2v1h-2zM120 168h2v1h-2zM116 169h2v1h-2zM120 169h2v1h-2zM116 170h2v1h-2zM120 170h2v1h-2zM116 171h2v1h-2zM120 171h2v1h-2zM116 172h6v1h-6zM132 163h2v1h-2zM131 164h1v1h-1zM134 164h1v1h-1zM130 166h2v1h-2zM134 166h2v1h-2zM130 167h2v1h-2zM134 167h2v1h-2zM130 168h2v1h-2zM134 168h2v1h-2zM130 169h2v1h-2zM134 169h2v1h-2zM130 170h2v1h-2zM134 170h2v1h-2zM130 171h2v1h-2zM134 171h2v1h-2zM130 172h6v1h-6zM144 163h2v1h-2zM148 163h2v1h-2zM144 164h2v1h-2zM148 164h2v1h-2zM144 166h2v1h-2zM148 166h2v1h-2zM144 167h2v1h-2zM148 167h2v1h-2zM144 168h2v1h-2zM148 168h2v1h-2zM144 169h2v1h-2zM148 169h2v1h-2zM144 170h2v1h-2zM148 170h2v1h-2zM144 171h2v1h-2zM148 171h2v1h-2zM144 172h6v1h-6zM161 163h1v1h-1zM160 164h1v1h-1zM158 166h2v1h-2zM162 166h2v1h-2zM158 167h2v1h-2zM162 167h2v1h-2zM158 168h2v1h-2zM162 168h2v1h-2zM158 169h6v1h-6zM160 170h2v1h-2zM160 171h2v1h-2zM160 172h2v1h-2zM203 163h1v1h-1zM202 164h1v1h-1zM200 166h5v1h-5zM203 167h2v1h-2zM200 168h5v1h-5zM200 169h2v1h-2zM203 169h2v1h-2zM200 170h6v1h-6zM216 163h1v1h-1zM217 164h1v1h-1zM214 166h5v1h-5zM217 167h2v1h-2zM214 168h5v1h-5zM214 169h2v1h-2zM217 169h2v1h-2zM214 170h6v1h-6zM230 163h2v1h-2zM229 164h1v1h-1zM232 164h1v1h-1zM228 166h5v1h-5zM231 167h2v1h-2zM228 168h5v1h-5zM228 169h2v1h-2zM231 169h2v1h-2zM228 170h6v1h-6zM5 183h2v1h-2zM8 183h1v1h-1zM4 184h1v1h-1zM6 184h2v1h-2zM4 186h5v1h-5zM7 187h2v1h-2zM4 188h5v1h-5zM4 189h2v1h-2zM7 189h2v1h-2zM4 190h6v1h-6zM18 183h2v1h-2zM22 183h2v1h-2zM18 184h2v1h-2zM22 184h2v1h-2zM18 186h5v1h-5zM21 187h2v1h-2zM18 188h5v1h-5zM18 189h2v1h-2zM21 189h2v1h-2zM18 190h6v1h-6zM34 183h2v1h-2zM34 184h2v1h-2zM32 186h5v1h-5zM35 187h2v1h-2zM32 188h5v1h-5zM32 189h2v1h-2zM35 189h2v1h-2zM32 190h6v1h-6zM77 183h1v1h-1zM78 184h1v1h-1zM75 186h6v1h-6zM75 187h2v1h-2zM79 187h2v1h-2zM75 188h6v1h-6zM75 189h2v1h-2zM75 190h6v1h-6zM92 183h1v1h-1zM91 184h1v1h-1zM89 186h6v1h-6zM89 187h2v1h-2zM93 187h2v1h-2zM89 188h6v1h-6zM89 189h2v1h-2zM89 190h6v1h-6zM105 183h2v1h-2zM104 184h1v1h-1zM107 184h1v1h-1zM103 186h6v1h-6zM103 187h2v1h-2zM107 187h2v1h-2zM103 188h6v1h-6zM103 189h2v1h-2zM103 190h6v1h-6zM118 183h2v1h-2zM122 183h2v1h-2zM118 184h2v1h-2zM122 184h2v1h-2zM118 186h6v1h-6zM118 187h2v1h-2zM122 187h2v1h-2zM118 188h6v1h-6zM118 189h2v1h-2zM118 190h6v1h-6zM134 183h1v1h-1zM135 184h1v1h-1zM133 186h3v1h-3zM134 187h2v1h-2zM134 188h2v1h-2zM134 189h2v1h-2zM132 190h6v1h-6zM149 183h1v1h-1zM148 184h1v1h-1zM147 186h3v1h-3zM148 187h2v1h-2zM148 188h2v1h-2zM148 189h2v1h-2zM146 190h6v1h-6zM162 183h2v1h-2zM161 184h1v1h-1zM164 184h1v1h-1zM161 186h3v1h-3zM162 187h2v1h-2zM162 188h2v1h-2zM162 189h2v1h-2zM160 190h6v1h-6zM175 183h2v1h-2zM179 183h2v1h-2zM175 184h2v1h-2zM179 184h2v1h-2zM176 186h3v1h-3zM177 187h2v1h-2zM177 188h2v1h-2zM177 189h2v1h-2zM175 190h6v1h-6zM204 183h2v1h-2zM207 183h1v1h-1zM203 184h1v1h-1zM205 184h2v1h-2zM203 186h6v1h-6zM204 187h2v1h-2zM207 187h2v1h-2zM204 188h2v1h-2zM207 188h2v1h-2zM204 189h2v1h-2zM207 189h2v1h-2zM204 190h2v1h-2zM207 190h2v1h-2zM220 183h1v1h-1zM219 184h1v1h-1zM217 186h6v1h-6zM217 187h2v1h-2zM221 187h2v1h-2zM217 188h2v1h-2zM221 188h2v1h-2zM217 189h2v1h-2zM221 189h2v1h-2zM217 190h6v1h-6zM234 183h1v1h-1zM235 184h1v1h-1zM232 186h6v1h-6zM232 187h2v1h-2zM236 187h2v1h-2zM232 188h2v1h-2zM236 188h2v1h-2zM232 189h2v1h-2zM236 189h2v1h-2zM232 190h6v1h-6zM6 203h2v1h-2zM5 204h1v1h-1zM8 204h1v1h-1zM4 206h6v1h-6zM4 207h2v1h-2zM8 207h2v1h-2zM4 208h2v1h-2zM8 208h2v1h-2zM4 209h2v1h-2zM8 209h2v1h-2zM4 210h6v1h-6zM19 203h2v1h-2zM22 203h1v1h-1zM18 204h1v1h-1zM20 204h2v1h-2zM18 206h6v1h-6zM18 207h2v1h-2zM22 207h2v1h-2zM18 208h2v1h-2zM22 208h2v1h-2zM18 209h2v1h-2zM22 209h2v1h-2zM18 210h6v1h-6zM32 203h2v1h-2zM36 203h2v1h-2zM32 204h2v1h-2zM36 204h2v1h-2zM32 206h6v1h-6zM32 207h2v1h-2zM36 207h2v1h-2zM32 208h2v1h-2zM36 208h2v1h-2zM32 209h2v1h-2zM36 209h2v1h-2zM32 210h6v1h-6zM76 203h1v1h-1zM75 204h1v1h-1zM73 206h2v1h-2zM77 206h2v1h-2zM73 207h2v1h-2zM77 207h2v1h-2zM73 208h2v1h-2zM77 208h2v1h-2zM73 209h2v1h-2zM77 209h2v1h-2zM73 210h6v1h-6zM89 203h1v1h-1zM90 204h1v1h-1zM87 206h2v1h-2zM91 206h2v1h-2zM87 207h2v1h-2zM91 207h2v1h-2zM87 208h2v1h-2zM91 208h2v1h-2zM87 209h2v1h-2zM91 209h2v1h-2zM87 210h6v1h-6zM103 203h2v1h-2zM102 204h1v1h-1zM105 204h1v1h-1zM101 206h2v1h-2zM105 206h2v1h-2zM101 207h2v1h-2zM105 207h2v1h-2zM101 208h2v1h-2zM105 208h2v1h-2zM101 209h2v1h-2zM105 209h2v1h-2zM101 210h6v1h-6zM115 203h2v1h-2zM119 203h2v1h-2zM115 204h2v1h-2zM119 204h2v1h-2zM115 206h2v1h-2zM119 206h2v1h-2zM115 207h2v1h-2zM119 207h2v1h-2zM115 208h2v1h-2zM119 208h2v1h-2zM115 209h2v1h-2zM119 209h2v1h-2zM115 210h6v1h-6zM132 203h1v1h-1zM131 204h1v1h-1zM129 206h2v1h-2zM133 206h2v1h-2zM129 207h2v1h-2zM133 207h2v1h-2zM129 208h2v1h-2zM133 208h2v1h-2zM129 209h6v1h-6zM133 210h2v1h-2zM133 211h2v1h-2zM129 212h6v1h-6zM157 203h2v1h-2zM161 203h2v1h-2zM157 204h2v1h-2zM161 204h2v1h-2zM157 206h2v1h-2zM161 206h2v1h-2zM157 207h2v1h-2zM161 207h2v1h-2zM157 208h2v1h-2zM161 208h2v1h-2zM157 209h6v1h-6zM161 210h2v1h-2zM161 211h2v1h-2zM157 212h6v1h-6z"/></svg>
<span class="a" style="left:1227.1px;top:304.8px">¢</span>
<span class="a" style="left:1240.5px;top:304.8px">£</span>
<span class="a" style="left:1255.0px;top:304.8px">€</span>
<span class="a" style="left:1268.8px;top:304.8px">¥</span>
<span class="a" style="left:1290.9px;top:304.8px">§</span>
<span class="a" style="left:1313.4px;top:304.8px">©</span>
<div style="left:1332.3px;top:306.0px;width:7px;height:9px;border:1px solid #262626"></div>
<span class="a" style="left:1344.2px;top:304.8px">«</span>
<div style="left:1362.8px;top:306.0px;width:7px;height:9px;border:1px solid #262626"></div>
<span class="a" style="left:1374.7px;top:304.8px">®</span>
<div style="left:1146.2px;top:325.0px;width:7px;height:9px;border:1px solid #262626"></div>
<span class="a" style="left:1156.1px;top:323.8px">°</span>
<div style="left:1174.1px;top:325.0px;width:7px;height:9px;border:1px solid #262626"></div>
<div style="left:1190.4px;top:325.0px;width:7px;height:9px;border:1px solid #262626"></div>
<div style="left:1206.5px;top:325.0px;width:7px;height:9px;border:1px solid #262626"></div>
<span class="a" style="left:1226.1px;top:323.8px">µ</span>
<span class="a" style="left:1239.6px;top:323.8px">¶</span>
<span class="a" style="left:1251.8px;top:323.8px">·</span>
<div style="left:1276.1px;top:325.0px;width:7px;height:9px;border:1px solid #262626"></div>
<div style="left:1292.2px;top:325.0px;width:7px;height:9px;border:1px solid #262626"></div>
<span class="a" style="left:1303.8px;top:323.8px">»</span>
<span class="a" style="left:1319.8px;top:323.8px">Œ</span>
<span class="a" style="left:1337.5px;top:323.8px">œ</span>
<span class="a" style="left:1361.8px;top:323.8px">¿</span>
<span class="a" style="left:1213.0px;top:343.8px">Æ</span>
<span class="a" style="left:1227.3px;top:343.8px">Ç</span>
<span class="a" style="left:1355.6px;top:343.8px">Ð</span>
<span class="a" style="left:1211.9px;top:363.8px">×</span>
<span class="a" style="left:1225.9px;top:363.8px">Ø</span>
<span class="a" style="left:1310.2px;top:363.8px">Þ</span>
<span class="a" style="left:1324.2px;top:363.8px">ß</span>
<span class="a" style="left:1184.4px;top:383.8px">æ</span>
<span class="a" style="left:1198.7px;top:383.8px">ç</span>
<span class="a" style="left:1326.8px;top:383.8px">ð</span>
<span class="a" style="left:1183.5px;top:403.8px">÷</span>
<span class="a" style="left:1197.5px;top:403.8px">ø</span>
<span class="a" style="left:1281.1px;top:403.8px">þ</span>
<div style="left:908px;top:520px;width:724px;height:1px;background:#638465;"></div>
<div style="left:918px;top:540px;width:1px;height:56px;background:#638465;"></div>
<div style="left:1621px;top:540px;width:1px;height:56px;background:#638465;"></div>
<div style="left:918px;top:595px;width:704px;height:1px;background:#638465;"></div>
<div style="left:918px;top:540px;width:8px;height:1px;background:#638465;"></div>
<div style="left:1073px;top:540px;width:549px;height:1px;background:#638465;"></div>
<svg class="p" style="left:930px;top:536px;fill:#638465" width="137" height="9" role="img"><title>Text Drawing Options</title><use href="#g84"/><use href="#g101" x="7"/><use href="#g120" x="14"/><use href="#g116" x="21"/><use href="#g68" x="33"/><use href="#g114" x="40"/><use href="#g97" x="47"/><use href="#g119" x="54"/><use href="#g105" x="62"/><use href="#g110" x="69"/><use href="#g103" x="76"/><use href="#g79" x="88"/><use href="#g112" x="95"/><use href="#g116" x="102"/><use href="#g105" x="109"/><use href="#g111" x="116"/><use href="#g110" x="123"/><use href="#g115" x="130"/></svg>
<svg class="p" style="left:927px;top:564px;fill:#82a29f" width="64" height="9" role="img"><title>Font Size:</title><use href="#g70"/><use href="#g111" x="7"/><use href="#g110" x="14"/><use href="#g116" x="21"/><use href="#g83" x="33"/><use href="#g105" x="40"/><use href="#g122" x="47"/><use href="#g101" x="54"/><use href="#g58" x="61"/></svg>
<div style="left:996px;top:556px;width:24px;height:24px;background:#2c3334;border:2px solid #60827d;"></div>
<svg class="i" style="left:1000px;top:560px" width="16" height="16" viewBox="0 0 16 16"><path fill="#82a29f" d="M9 3h1v1h-1zM8 4h2v1h-2zM7 5h3v1h-3zM6 6h4v1h-4zM5 7h5v1h-5zM4 8h6v1h-6zM5 9h5v1h-5zM6 10h4v1h-4zM7 11h3v1h-3zM8 12h2v1h-2zM9 13h1v1h-1z"/></svg>
<div style="left:1022px;top:556px;width:48px;height:24px;background:#2b3a3a;border:1px solid #60827d;"></div>
<svg class="p" style="left:1039px;top:564px;fill:#82a29f" width="14" height="9" role="img"><title>12</title><use href="#g49"/><use href="#g50" x="7"/></svg>
<div style="left:1072px;top:556px;width:24px;height:24px;background:#2c3334;border:2px solid #60827d;"></div>
<svg class="i" style="left:1076px;top:560px" width="16" height="16" viewBox="0 0 16 16"><path fill="#82a29f" d="M6 3h1v1h-1zM6 4h2v1h-2zM6 5h3v1h-3zM6 6h4v1h-4zM6 7h5v1h-5zM6 8h6v1h-6zM6 9h5v1h-5zM6 10h4v1h-4zM6 11h3v1h-3zM6 12h2v1h-2zM6 13h1v1h-1z"/></svg>
<svg class="p" style="left:1105px;top:564px;fill:#82a29f" width="52" height="9" role="img"><title>Spacing:</title><use href="#g83"/><use href="#g112" x="7"/><use href="#g97" x="14"/><use href="#g99" x="21"/><use href="#g105" x="28"/><use href="#g110" x="35"/><use href="#g103" x="42"/><use href="#g58" x="49"/></svg>
<div style="left:1162px;top:556px;width:24px;height:24px;background:#2c3334;border:2px solid #60827d;"></div>
<svg class="i" style="left:1166px;top:560px" width="16" height="16" viewBox="0 0 16 16"><path fill="#82a29f" d="M9 3h1v1h-1zM8 4h2v1h-2zM7 5h3v1h-3zM6 6h4v1h-4zM5 7h5v1h-5zM4 8h6v1h-6zM5 9h5v1h-5zM6 10h4v1h-4zM7 11h3v1h-3zM8 12h2v1h-2zM9 13h1v1h-1z"/></svg>
<div style="left:1188px;top:556px;width:48px;height:24px;background:#2b3a3a;border:1px solid #60827d;"></div>
<svg class="p" style="left:1209px;top:564px;fill:#82a29f" width="7" height="9" role="img"><title>0</title><use href="#g48"/></svg>
<div style="left:1238px;top:556px;width:24px;height:24px;background:#2c3334;border:2px solid #60827d;"></div>
<svg class="i" style="left:1242px;top:560px" width="16" height="16" viewBox="0 0 16 16"><path fill="#82a29f" d="M6 3h1v1h-1zM6 4h2v1h-2zM6 5h3v1h-3zM6 6h4v1h-4zM6 7h5v1h-5zM6 8h6v1h-6zM6 9h5v1h-5zM6 10h4v1h-4zM6 11h3v1h-3zM6 12h2v1h-2zM6 13h1v1h-1z"/></svg>
<div style="left:1276px;top:554px;width:336px;height:28px;background:#2b3a3a;border:1px solid #60827d;"></div>
<svg class="p" style="left:1281px;top:564px;fill:#82a29f" width="76" height="9" role="img"><title>sample text</title><use href="#g115"/><use href="#g97" x="7"/><use href="#g109" x="14"/><use href="#g112" x="22"/><use href="#g108" x="29"/><use href="#g101" x="36"/><use href="#g116" x="48"/><use href="#g101" x="55"/><use href="#g120" x="62"/><use href="#g116" x="69"/></svg>
<div style="left:1640px;top:75px;width:160px;height:533px;background:#2b3a3a;border:1px solid #60827d;"></div>
<div style="left:1640px;top:52px;width:160px;height:24px;background:#2c3334;border:1px solid #60827d;"></div>
<svg class="i" style="left:1649px;top:56px" width="16" height="16" viewBox="0 0 16 16"><path fill="#82a29f" d="M7 1h1v1h-1zM7 2h2v1h-2zM6 3h1v1h-1zM8 3h1v1h-1zM6 4h1v1h-1zM8 4h2v1h-2zM5 5h1v1h-1zM9 5h1v1h-1zM5 6h1v1h-1zM9 6h2v1h-2zM4 7h1v1h-1zM10 7h1v1h-1zM4 8h8v1h-8zM3 9h1v1h-1zM10 9h3v1h-3zM3 10h1v1h-1zM11 10h2v1h-2zM2 11h1v1h-1zM11 11h3v1h-3zM2 12h1v1h-1zM12 12h2v1h-2zM1 13h1v1h-1zM12 13h3v1h-3zM0 14h4v1h-4zM11 14h5v1h-5z"/></svg>
<svg class="p" style="left:1669px;top:60px;fill:#82a29f" width="28" height="9" role="img"><title>Font</title><use href="#g70"/><use href="#g111" x="7"/><use href="#g110" x="14"/><use href="#g116" x="21"/></svg>
<svg class="p" style="left:1695px;top:88px;fill:#82a29f" width="49" height="9" role="img"><title>default</title><use href="#g100"/><use href="#g101" x="7"/><use href="#g102" x="14"/><use href="#g97" x="21"/><use href="#g117" x="28"/><use href="#g108" x="35"/><use href="#g116" x="42"/></svg>
<svg class="p" style="left:1688px;top:118px;fill:#82a29f" width="63" height="9" role="img"><title>Cartridge</title><use href="#g67"/><use href="#g97" x="7"/><use href="#g114" x="14"/><use href="#g116" x="21"/><use href="#g114" x="28"/><use href="#g105" x="35"/><use href="#g100" x="42"/><use href="#g103" x="49"/><use href="#g101" x="56"/></svg>
<svg class="p" style="left:1681px;top:148px;fill:#82a29f" width="77" height="9" role="img"><title>hello-world</title><use href="#g104"/><use href="#g101" x="7"/><use href="#g108" x="14"/><use href="#g108" x="21"/><use href="#g111" x="28"/><use href="#g45" x="35"/><use href="#g119" x="41"/><use href="#g111" x="49"/><use href="#g114" x="56"/><use href="#g108" x="63"/><use href="#g100" x="70"/></svg>
<svg class="p" style="left:1691px;top:178px;fill:#82a29f" width="57" height="9" role="img"><title>homespun</title><use href="#g104"/><use href="#g111" x="7"/><use href="#g109" x="14"/><use href="#g101" x="22"/><use href="#g115" x="29"/><use href="#g112" x="36"/><use href="#g117" x="43"/><use href="#g110" x="50"/></svg>
<svg class="p" style="left:1684px;top:208px;fill:#82a29f" width="71" height="9" role="img"><title>Kyrou7Wide</title><use href="#g75"/><use href="#g121" x="7"/><use href="#g114" x="14"/><use href="#g111" x="21"/><use href="#g117" x="28"/><use href="#g55" x="35"/><use href="#g87" x="42"/><use href="#g105" x="50"/><use href="#g100" x="57"/><use href="#g101" x="64"/></svg>
<svg class="p" style="left:1701px;top:238px;fill:#82a29f" width="36" height="9" role="img"><title>Mecha</title><use href="#g77"/><use href="#g101" x="8"/><use href="#g99" x="15"/><use href="#g104" x="22"/><use href="#g97" x="29"/></svg>
<div style="left:1642px;top:258px;width:155px;height:28px;background:#3b6357;border:1px solid #a9cb8d;"></div>
<svg class="p" style="left:1688px;top:268px;fill:#97af81" width="63" height="9" role="img"><title>PixelIntv</title><use href="#g80"/><use href="#g105" x="7"/><use href="#g120" x="14"/><use href="#g101" x="21"/><use href="#g108" x="28"/><use href="#g73" x="35"/><use href="#g110" x="42"/><use href="#g116" x="49"/><use href="#g118" x="56"/></svg>
<svg class="p" style="left:1674px;top:298px;fill:#82a29f" width="91" height="9" role="img"><title>PixelOperator</title><use href="#g80"/><use href="#g105" x="7"/><use href="#g120" x="14"/><use href="#g101" x="21"/><use href="#g108" x="28"/><use href="#g79" x="35"/><use href="#g112" x="42"/><use href="#g101" x="49"/><use href="#g114" x="56"/><use href="#g97" x="63"/><use href="#g116" x="70"/><use href="#g111" x="77"/><use href="#g114" x="84"/></svg>
<svg class="p" style="left:1691px;top:328px;fill:#82a29f" width="56" height="9" role="img"><title>v5easter</title><use href="#g118"/><use href="#g53" x="7"/><use href="#g101" x="14"/><use href="#g97" x="21"/><use href="#g115" x="28"/><use href="#g116" x="35"/><use href="#g101" x="42"/><use href="#g114" x="49"/></svg>
<svg class="p" style="left:1688px;top:358px;fill:#82a29f" width="63" height="9" role="img"><title>v5loxical</title><use href="#g118"/><use href="#g53" x="7"/><use href="#g108" x="14"/><use href="#g111" x="21"/><use href="#g120" x="28"/><use href="#g105" x="35"/><use href="#g99" x="42"/><use href="#g97" x="49"/><use href="#g108" x="56"/></svg>
<svg class="p" style="left:1684px;top:388px;fill:#82a29f" width="71" height="9" role="img"><title>Westington</title><use href="#g87"/><use href="#g101" x="8"/><use href="#g115" x="15"/><use href="#g116" x="22"/><use href="#g105" x="29"/><use href="#g110" x="36"/><use href="#g103" x="43"/><use href="#g116" x="50"/><use href="#g111" x="57"/><use href="#g110" x="64"/></svg>
<svg class="p" style="left:1705px;top:418px;fill:#82a29f" width="28" height="9" role="img"><title>2a03</title><use href="#g50"/><use href="#g97" x="7"/><use href="#g48" x="14"/><use href="#g51" x="21"/></svg>
<svg class="p" style="left:1705px;top:448px;fill:#82a29f" width="29" height="9" role="img"><title>GMSN</title><use href="#g71"/><use href="#g77" x="7"/><use href="#g83" x="15"/><use href="#g78" x="22"/></svg>
<svg class="p" style="left:1674px;top:478px;fill:#82a29f" width="91" height="9" role="img"><title>CozetteVector</title><use href="#g67"/><use href="#g111" x="7"/><use href="#g122" x="14"/><use href="#g101" x="21"/><use href="#g116" x="28"/><use href="#g116" x="35"/><use href="#g101" x="42"/><use href="#g86" x="49"/><use href="#g101" x="56"/><use href="#g99" x="63"/><use href="#g116" x="70"/><use href="#g111" x="77"/><use href="#g114" x="84"/></svg>
<svg class="p" style="left:1695px;top:508px;fill:#82a29f" width="49" height="9" role="img"><title>Fairfax</title><use href="#g70"/><use href="#g97" x="7"/><use href="#g105" x="14"/><use href="#g114" x="21"/><use href="#g102" x="28"/><use href="#g97" x="35"/><use href="#g120" x="42"/></svg>
<svg class="p" style="left:1687px;top:538px;fill:#82a29f" width="64" height="9" role="img"><title>OwreKynge</title><use href="#g79"/><use href="#g119" x="7"/><use href="#g114" x="15"/><use href="#g101" x="22"/><use href="#g75" x="29"/><use href="#g121" x="36"/><use href="#g110" x="43"/><use href="#g103" x="50"/><use href="#g101" x="57"/></svg>
<div style="left:12px;top:642px;width:8px;height:8px;background:#60827d;"></div>
<div style="left:20px;top:642px;width:8px;height:8px;background:#2c3334;"></div>
<div style="left:28px;top:642px;width:8px;height:8px;background:#82a29f;"></div>
<div style="left:36px;top:642px;width:8px;height:8px;background:#5f9aa8;"></div>
<div style="left:44px;top:642px;width:8px;height:8px;background:#334e57;"></div>
<div style="left:52px;top:642px;width:8px;height:8px;background:#6aa9b8;"></div>
<div style="left:60px;top:642px;width:8px;height:8px;background:#a9cb8d;"></div>
<div style="left:68px;top:642px;width:8px;height:8px;background:#3b6357;"></div>
<div style="left:76px;top:642px;width:8px;height:8px;background:#97af81;"></div>
<div style="left:84px;top:642px;width:8px;height:8px;background:#5b6462;"></div>
<div style="left:92px;top:642px;width:8px;height:8px;background:#2c3334;"></div>
<div style="left:100px;top:642px;width:8px;height:8px;background:#666b69;"></div>
<div style="left:111px;top:636px;width:1701px;height:1px;background:#638465;"></div>
<div style="left:12px;top:656px;width:1800px;height:1px;background:#638465;"></div>
<div style="left:12px;top:695px;width:1800px;height:1px;background:#638465;"></div>
<div style="left:12px;top:734px;width:1800px;height:1px;background:#638465;"></div>
<div style="left:12px;top:773px;width:1800px;height:1px;background:#638465;"></div>
<div style="left:12px;top:812px;width:1800px;height:1px;background:#638465;"></div>
<div style="left:12px;top:656px;width:1px;height:157px;background:#638465;"></div>
<div style="left:111px;top:636px;width:1px;height:177px;background:#638465;"></div>
<div style="left:226px;top:636px;width:1px;height:177px;background:#638465;"></div>
<div style="left:341px;top:636px;width:1px;height:177px;background:#638465;"></div>
<div style="left:456px;top:636px;width:1px;height:177px;background:#638465;"></div>
<div style="left:671px;top:636px;width:1px;height:177px;background:#638465;"></div>
<div style="left:786px;top:636px;width:1px;height:177px;background:#638465;"></div>
<div style="left:901px;top:636px;width:1px;height:177px;background:#638465;"></div>
<div style="left:1016px;top:636px;width:1px;height:177px;background:#638465;"></div>
<div style="left:1231px;top:636px;width:1px;height:177px;background:#638465;"></div>
<div style="left:1386px;top:636px;width:1px;height:177px;background:#638465;"></div>
<div style="left:1561px;top:636px;width:1px;height:177px;background:#638465;"></div>
<div style="left:1676px;top:636px;width:1px;height:177px;background:#638465;"></div>
<div style="left:1791px;top:636px;width:1px;height:177px;background:#638465;"></div>
<div style="left:564px;top:656px;width:1px;height:157px;background:#638465;"></div>
<div style="left:1124px;top:656px;width:1px;height:157px;background:#638465;"></div>
<svg class="p" style="left:152px;top:643px;fill:#82a29f" width="35" height="9" role="img"><title>LABEL</title><use href="#g76"/><use href="#g65" x="7"/><use href="#g66" x="14"/><use href="#g69" x="21"/><use href="#g76" x="28"/></svg>
<svg class="p" style="left:263px;top:643px;fill:#82a29f" width="42" height="9" role="img"><title>BUTTON</title><use href="#g66"/><use href="#g85" x="7"/><use href="#g84" x="14"/><use href="#g84" x="21"/><use href="#g79" x="28"/><use href="#g78" x="35"/></svg>
<svg class="p" style="left:378px;top:643px;fill:#82a29f" width="42" height="9" role="img"><title>TOGGLE</title><use href="#g84"/><use href="#g79" x="7"/><use href="#g71" x="14"/><use href="#g71" x="21"/><use href="#g76" x="28"/><use href="#g69" x="35"/></svg>
<svg class="p" style="left:536px;top:643px;fill:#82a29f" width="56" height="9" role="img"><title>CHECKBOX</title><use href="#g67"/><use href="#g72" x="7"/><use href="#g69" x="14"/><use href="#g67" x="21"/><use href="#g75" x="28"/><use href="#g66" x="35"/><use href="#g79" x="42"/><use href="#g88" x="49"/></svg>
<svg class="p" style="left:708px;top:643px;fill:#82a29f" width="42" height="9" role="img"><title>SLIDER</title><use href="#g83"/><use href="#g76" x="7"/><use href="#g73" x="14"/><use href="#g68" x="21"/><use href="#g69" x="28"/><use href="#g82" x="35"/></svg>
<svg class="p" style="left:813px;top:643px;fill:#82a29f" width="63" height="9" role="img"><title>SLIDERBAR</title><use href="#g83"/><use href="#g76" x="7"/><use href="#g73" x="14"/><use href="#g68" x="21"/><use href="#g69" x="28"/><use href="#g82" x="35"/><use href="#g66" x="42"/><use href="#g65" x="49"/><use href="#g82" x="56"/></svg>
<svg class="p" style="left:921px;top:643px;fill:#82a29f" width="77" height="9" role="img"><title>PROGRESSBAR</title><use href="#g80"/><use href="#g82" x="7"/><use href="#g79" x="14"/><use href="#g71" x="21"/><use href="#g82" x="28"/><use href="#g69" x="35"/><use href="#g83" x="42"/><use href="#g83" x="49"/><use href="#g66" x="56"/><use href="#g65" x="63"/><use href="#g82" x="70"/></svg>
<svg class="p" style="left:1082px;top:643px;fill:#82a29f" width="84" height="9" role="img"><title>TOGGLESLIDER</title><use href="#g84"/><use href="#g79" x="7"/><use href="#g71" x="14"/><use href="#g71" x="21"/><use href="#g76" x="28"/><use href="#g69" x="35"/><use href="#g83" x="42"/><use href="#g76" x="49"/><use href="#g73" x="56"/><use href="#g68" x="63"/><use href="#g69" x="70"/><use href="#g82" x="77"/></svg>
<svg class="p" style="left:1281px;top:643px;fill:#82a29f" width="57" height="9" role="img"><title>COMBOBOX</title><use href="#g67"/><use href="#g79" x="7"/><use href="#g77" x="14"/><use href="#g66" x="22"/><use href="#g79" x="29"/><use href="#g66" x="36"/><use href="#g79" x="43"/><use href="#g88" x="50"/></svg>
<svg class="p" style="left:1435px;top:643px;fill:#82a29f" width="78" height="9" role="img"><title>DROPDOWNBOX</title><use href="#g68"/><use href="#g82" x="7"/><use href="#g79" x="14"/><use href="#g80" x="21"/><use href="#g68" x="28"/><use href="#g79" x="35"/><use href="#g87" x="42"/><use href="#g78" x="50"/><use href="#g66" x="57"/><use href="#g79" x="64"/><use href="#g88" x="71"/></svg>
<svg class="p" style="left:1595px;top:643px;fill:#82a29f" width="49" height="9" role="img"><title>TEXTBOX</title><use href="#g84"/><use href="#g69" x="7"/><use href="#g88" x="14"/><use href="#g84" x="21"/><use href="#g66" x="28"/><use href="#g79" x="35"/><use href="#g88" x="42"/></svg>
<svg class="p" style="left:1706px;top:643px;fill:#82a29f" width="56" height="9" role="img"><title>VALUEBOX</title><use href="#g86"/><use href="#g65" x="7"/><use href="#g76" x="14"/><use href="#g85" x="21"/><use href="#g69" x="28"/><use href="#g66" x="35"/><use href="#g79" x="42"/><use href="#g88" x="49"/></svg>
<svg class="p" style="left:41px;top:672px;fill:#82a29f" width="43" height="9" role="img"><title>NORMAL</title><use href="#g78"/><use href="#g79" x="7"/><use href="#g82" x="14"/><use href="#g77" x="21"/><use href="#g65" x="29"/><use href="#g76" x="36"/></svg>
<svg class="i" style="left:134px;top:668px" width="16" height="16" viewBox="0 0 16 16"><path fill="#82a29f" d="M4 1h10v1h-10zM4 2h1v1h-1zM13 2h1v1h-1zM2 3h3v1h-3zM13 3h1v1h-1zM2 4h1v1h-1zM13 4h1v1h-1zM2 5h1v1h-1zM13 5h1v1h-1zM2 6h1v1h-1zM4 6h8v1h-8zM13 6h1v1h-1zM2 7h1v1h-1zM13 7h1v1h-1zM2 8h1v1h-1zM4 8h8v1h-8zM13 8h1v1h-1zM2 9h1v1h-1zM13 9h1v1h-1zM2 10h1v1h-1zM4 10h8v1h-8zM13 10h1v1h-1zM2 11h1v1h-1zM13 11h1v1h-1zM2 12h1v1h-1zM13 12h1v1h-1zM2 13h1v1h-1zM13 13h1v1h-1zM2 14h12v1h-12z"/></svg>
<svg class="p" style="left:154px;top:672px;fill:#82a29f" width="35" height="9" role="img"><title>Label</title><use href="#g76"/><use href="#g97" x="7"/><use href="#g98" x="14"/><use href="#g101" x="21"/><use href="#g108" x="28"/></svg>
<div style="left:234px;top:664px;width:100px;height:24px;background:#2c3334;border:2px solid #60827d;"></div>
<svg class="i" style="left:253px;top:668px" width="16" height="16" viewBox="0 0 16 16"><path fill="#82a29f" d="M1 1h13v1h-13zM1 2h1v1h-1zM5 2h1v1h-1zM10 2h1v1h-1zM13 2h2v1h-2zM1 3h1v1h-1zM5 3h1v1h-1zM10 3h1v1h-1zM14 3h1v1h-1zM1 4h1v1h-1zM5 4h6v1h-6zM14 4h1v1h-1zM1 5h1v1h-1zM14 5h1v1h-1zM1 6h1v1h-1zM14 6h1v1h-1zM1 7h1v1h-1zM3 7h10v1h-10zM14 7h1v1h-1zM1 8h1v1h-1zM3 8h1v1h-1zM12 8h1v1h-1zM14 8h1v1h-1zM1 9h1v1h-1zM3 9h1v1h-1zM5 9h6v1h-6zM12 9h1v1h-1zM14 9h1v1h-1zM1 10h1v1h-1zM3 10h1v1h-1zM12 10h1v1h-1zM14 10h1v1h-1zM1 11h1v1h-1zM3 11h1v1h-1zM12 11h1v1h-1zM14 11h1v1h-1zM1 12h1v1h-1zM3 12h10v1h-10zM14 12h1v1h-1zM1 13h1v1h-1zM14 13h1v1h-1zM1 14h14v1h-14z"/></svg>
<svg class="p" style="left:273px;top:672px;fill:#82a29f" width="42" height="9" role="img"><title>Button</title><use href="#g66"/><use href="#g117" x="7"/><use href="#g116" x="14"/><use href="#g116" x="21"/><use href="#g111" x="28"/><use href="#g110" x="35"/></svg>
<div style="left:349px;top:664px;width:100px;height:24px;background:#2c3334;border:1px solid #60827d;"></div>
<svg class="i" style="left:368px;top:668px" width="16" height="16" viewBox="0 0 16 16"><path fill="#82a29f" d="M7 2h1v1h-1zM9 2h1v1h-1zM7 3h1v1h-1zM9 3h1v1h-1zM6 4h2v1h-2zM9 4h2v1h-2zM6 5h2v1h-2zM9 5h2v1h-2zM5 6h1v1h-1zM7 6h1v1h-1zM9 6h3v1h-3zM5 7h1v1h-1zM7 7h1v1h-1zM9 7h3v1h-3zM4 8h1v1h-1zM7 8h1v1h-1zM9 8h4v1h-4zM4 9h1v1h-1zM7 9h1v1h-1zM9 9h4v1h-4zM3 10h1v1h-1zM7 10h1v1h-1zM9 10h5v1h-5zM3 11h1v1h-1zM7 11h1v1h-1zM9 11h5v1h-5zM2 12h1v1h-1zM7 12h1v1h-1zM9 12h6v1h-6zM2 13h6v1h-6zM9 13h6v1h-6z"/></svg>
<svg class="p" style="left:388px;top:672px;fill:#82a29f" width="42" height="9" role="img"><title>Toggle</title><use href="#g84"/><use href="#g111" x="7"/><use href="#g103" x="14"/><use href="#g103" x="21"/><use href="#g108" x="28"/><use href="#g101" x="35"/></svg>
<div style="left:466px;top:669px;width:15px;height:15px;background:#2b3a3a;border:1px solid #60827d;"></div>
<svg class="p" style="left:485px;top:672px;fill:#82a29f" width="49" height="9" role="img"><title>NoCheck</title><use href="#g78"/><use href="#g111" x="7"/><use href="#g67" x="14"/><use href="#g104" x="21"/><use href="#g101" x="28"/><use href="#g99" x="35"/><use href="#g107" x="42"/></svg>
<div style="left:574px;top:669px;width:15px;height:15px;background:#2b3a3a;border:1px solid #60827d;"></div>
<div style="left:576px;top:671px;width:11px;height:11px;background:#82a29f;"></div>
<svg class="p" style="left:593px;top:672px;fill:#82a29f" width="49" height="9" role="img"><title>Checked</title><use href="#g67"/><use href="#g104" x="7"/><use href="#g101" x="14"/><use href="#g99" x="21"/><use href="#g107" x="28"/><use href="#g101" x="35"/><use href="#g100" x="42"/></svg>
<div style="left:679px;top:671px;width:100px;height:10px;background:#2c3334;border:1px solid #60827d;"></div>
<div style="left:714px;top:673px;width:10px;height:6px;background:#3b6357;"></div>
<div style="left:794px;top:671px;width:100px;height:10px;background:#2c3334;border:1px solid #60827d;"></div>
<div style="left:795px;top:673px;width:39px;height:6px;background:#3b6357;"></div>
<div style="left:909px;top:671px;width:100px;height:10px;background:#2b3a3a;border:1px solid #60827d;"></div>
<div style="left:909px;top:671px;width:59px;height:10px;background:#3b6357;border:1px solid #5f9aa8;border-right:none;"></div>
<div style="left:1024px;top:664px;width:92px;height:24px;background:#2c3334;border:1px solid #60827d;"></div>
<div style="left:1027px;top:667px;width:42px;height:18px;background:#3b6357;"></div>
<svg class="i" style="left:1028px;top:668px" width="16" height="16" viewBox="0 0 16 16"><path fill="#82a29f" d="M2 2h12v1h-12zM2 3h1v1h-1zM13 3h1v1h-1zM2 4h1v1h-1zM13 4h1v1h-1zM2 5h1v1h-1zM13 5h1v1h-1zM2 6h5v1h-5zM13 6h1v1h-1zM2 7h5v1h-5zM13 7h1v1h-1zM2 8h5v1h-5zM13 8h1v1h-1zM2 9h5v1h-5zM13 9h1v1h-1zM2 10h1v1h-1zM13 10h1v1h-1zM2 11h1v1h-1zM13 11h1v1h-1zM2 12h1v1h-1zM13 12h1v1h-1zM2 13h12v1h-12z"/></svg>
<svg class="p" style="left:1048px;top:672px;fill:#82a29f" width="21" height="9" role="img"><title>OFF</title><use href="#g79"/><use href="#g70" x="7"/><use href="#g70" x="14"/></svg>
<div style="left:1132px;top:664px;width:92px;height:24px;background:#2c3334;border:1px solid #a9cb8d;"></div>
<div style="left:1179px;top:667px;width:42px;height:18px;background:#3b6357;"></div>
<svg class="i" style="left:1183px;top:668px" width="16" height="16" viewBox="0 0 16 16"><path fill="#97af81" d="M2 2h12v1h-12zM2 3h1v1h-1zM13 3h1v1h-1zM2 4h1v1h-1zM13 4h1v1h-1zM2 5h1v1h-1zM13 5h1v1h-1zM2 6h1v1h-1zM9 6h5v1h-5zM2 7h1v1h-1zM9 7h5v1h-5zM2 8h1v1h-1zM9 8h5v1h-5zM2 9h1v1h-1zM9 9h5v1h-5zM2 10h1v1h-1zM13 10h1v1h-1zM2 11h1v1h-1zM13 11h1v1h-1zM2 12h1v1h-1zM13 12h1v1h-1zM2 13h12v1h-12z"/></svg>
<svg class="p" style="left:1203px;top:672px;fill:#97af81" width="14" height="9" role="img"><title>ON</title><use href="#g79"/><use href="#g78" x="7"/></svg>
<div style="left:1239px;top:664px;width:106px;height:24px;background:#2c3334;border:1px solid #60827d;"></div>
<svg class="i" style="left:1254px;top:668px" width="16" height="16" viewBox="0 0 16 16"><path fill="#82a29f" d="M8 1h1v1h-1zM8 2h1v1h-1zM5 3h2v1h-2zM8 3h1v1h-1zM10 3h1v1h-1zM4 4h1v1h-1zM6 4h1v1h-1zM8 4h1v1h-1zM10 4h2v1h-2zM3 5h1v1h-1zM6 5h1v1h-1zM8 5h1v1h-1zM10 5h3v1h-3zM2 6h1v1h-1zM6 6h1v1h-1zM8 6h1v1h-1zM10 6h4v1h-4zM1 7h1v1h-1zM6 7h1v1h-1zM8 7h1v1h-1zM10 7h5v1h-5zM1 8h1v1h-1zM6 8h1v1h-1zM8 8h1v1h-1zM10 8h5v1h-5zM2 9h1v1h-1zM6 9h1v1h-1zM8 9h1v1h-1zM10 9h4v1h-4zM3 10h1v1h-1zM6 10h1v1h-1zM8 10h1v1h-1zM10 10h3v1h-3zM4 11h1v1h-1zM6 11h1v1h-1zM8 11h1v1h-1zM10 11h2v1h-2zM5 12h2v1h-2zM8 12h1v1h-1zM10 12h1v1h-1zM8 13h1v1h-1zM8 14h1v1h-1z"/></svg>
<svg class="p" style="left:1274px;top:672px;fill:#82a29f" width="57" height="9" role="img"><title>ComboBox</title><use href="#g67"/><use href="#g111" x="7"/><use href="#g109" x="14"/><use href="#g98" x="22"/><use href="#g111" x="29"/><use href="#g66" x="36"/><use href="#g111" x="43"/><use href="#g120" x="50"/></svg>
<div style="left:1347px;top:664px;width:32px;height:24px;background:#2c3334;border:1px solid #60827d;"></div>
<svg class="p" style="left:1352px;top:672px;fill:#82a29f" width="21" height="9" role="img"><title>1/2</title><use href="#g49"/><use href="#g47" x="7"/><use href="#g50" x="14"/></svg>
<div style="left:1394px;top:664px;width:160px;height:24px;background:#2c3334;border:1px solid #60827d;"></div>
<svg class="i" style="left:1425px;top:668px" width="16" height="16" viewBox="0 0 16 16"><path fill="#82a29f" d="M7 1h2v1h-2zM6 2h1v1h-1zM9 2h1v1h-1zM5 3h1v1h-1zM10 3h1v1h-1zM4 4h1v1h-1zM11 4h1v1h-1zM3 5h1v1h-1zM12 5h1v1h-1zM3 6h10v1h-10zM1 8h14v1h-14zM3 10h10v1h-10zM4 11h8v1h-8zM5 12h6v1h-6zM6 13h4v1h-4zM7 14h2v1h-2z"/></svg>
<svg class="p" style="left:1445px;top:672px;fill:#82a29f" width="78" height="9" role="img"><title>DropdownBox</title><use href="#g68"/><use href="#g114" x="7"/><use href="#g111" x="14"/><use href="#g112" x="21"/><use href="#g100" x="28"/><use href="#g111" x="35"/><use href="#g119" x="42"/><use href="#g110" x="50"/><use href="#g66" x="57"/><use href="#g111" x="64"/><use href="#g120" x="71"/></svg>
<svg class="i" style="left:1535px;top:668px" width="16" height="16" viewBox="0 0 16 16"><path fill="#82a29f" d="M2 5h11v1h-11zM3 6h9v1h-9zM4 7h7v1h-7zM5 8h5v1h-5zM6 9h3v1h-3zM7 10h1v1h-1z"/></svg>
<div style="left:1569px;top:664px;width:100px;height:24px;background:#2b3a3a;border:1px solid #60827d;"></div>
<svg class="p" style="left:1574px;top:672px;fill:#82a29f" width="54" height="9" role="img"><title>text box</title><use href="#g116"/><use href="#g101" x="7"/><use href="#g120" x="14"/><use href="#g116" x="21"/><use href="#g98" x="33"/><use href="#g111" x="40"/><use href="#g120" x="47"/></svg>
<div style="left:1684px;top:664px;width:100px;height:24px;background:#2b3a3a;border:1px solid #60827d;"></div>
<svg class="p" style="left:1727px;top:672px;fill:#82a29f" width="14" height="9" role="img"><title>40</title><use href="#g52"/><use href="#g48" x="7"/></svg>
<div style="left:1799px;top:664px;width:24px;height:24px;background:#2c3334;border:2px solid #60827d;"></div>
<svg class="i" style="left:1803px;top:668px" width="16" height="16" viewBox="0 0 16 16"><path fill="#82a29f" d="M9 3h1v1h-1zM8 4h2v1h-2zM7 5h3v1h-3zM6 6h4v1h-4zM5 7h5v1h-5zM4 8h6v1h-6zM5 9h5v1h-5zM6 10h4v1h-4zM7 11h3v1h-3zM8 12h2v1h-2zM9 13h1v1h-1z"/></svg>
<svg class="p" style="left:41px;top:711px;fill:#6aa9b8" width="49" height="9" role="img"><title>FOCUSED</title><use href="#g70"/><use href="#g79" x="7"/><use href="#g67" x="14"/><use href="#g85" x="21"/><use href="#g83" x="28"/><use href="#g69" x="35"/><use href="#g68" x="42"/></svg>
<svg class="i" style="left:134px;top:707px" width="16" height="16" viewBox="0 0 16 16"><path fill="#6aa9b8" d="M4 1h10v1h-10zM4 2h1v1h-1zM13 2h1v1h-1zM2 3h3v1h-3zM13 3h1v1h-1zM2 4h1v1h-1zM13 4h1v1h-1zM2 5h1v1h-1zM13 5h1v1h-1zM2 6h1v1h-1zM4 6h8v1h-8zM13 6h1v1h-1zM2 7h1v1h-1zM13 7h1v1h-1zM2 8h1v1h-1zM4 8h8v1h-8zM13 8h1v1h-1zM2 9h1v1h-1zM13 9h1v1h-1zM2 10h1v1h-1zM4 10h8v1h-8zM13 10h1v1h-1zM2 11h1v1h-1zM13 11h1v1h-1zM2 12h1v1h-1zM13 12h1v1h-1zM2 13h1v1h-1zM13 13h1v1h-1zM2 14h12v1h-12z"/></svg>
<svg class="p" style="left:154px;top:711px;fill:#6aa9b8" width="35" height="9" role="img"><title>Label</title><use href="#g76"/><use href="#g97" x="7"/><use href="#g98" x="14"/><use href="#g101" x="21"/><use href="#g108" x="28"/></svg>
<div style="left:234px;top:703px;width:100px;height:24px;background:#334e57;border:2px solid #5f9aa8;"></div>
<svg class="i" style="left:253px;top:707px" width="16" height="16" viewBox="0 0 16 16"><path fill="#6aa9b8" d="M1 1h13v1h-13zM1 2h1v1h-1zM5 2h1v1h-1zM10 2h1v1h-1zM13 2h2v1h-2zM1 3h1v1h-1zM5 3h1v1h-1zM10 3h1v1h-1zM14 3h1v1h-1zM1 4h1v1h-1zM5 4h6v1h-6zM14 4h1v1h-1zM1 5h1v1h-1zM14 5h1v1h-1zM1 6h1v1h-1zM14 6h1v1h-1zM1 7h1v1h-1zM3 7h10v1h-10zM14 7h1v1h-1zM1 8h1v1h-1zM3 8h1v1h-1zM12 8h1v1h-1zM14 8h1v1h-1zM1 9h1v1h-1zM3 9h1v1h-1zM5 9h6v1h-6zM12 9h1v1h-1zM14 9h1v1h-1zM1 10h1v1h-1zM3 10h1v1h-1zM12 10h1v1h-1zM14 10h1v1h-1zM1 11h1v1h-1zM3 11h1v1h-1zM12 11h1v1h-1zM14 11h1v1h-1zM1 12h1v1h-1zM3 12h10v1h-10zM14 12h1v1h-1zM1 13h1v1h-1zM14 13h1v1h-1zM1 14h14v1h-14z"/></svg>
<svg class="p" style="left:273px;top:711px;fill:#6aa9b8" width="42" height="9" role="img"><title>Button</title><use href="#g66"/><use href="#g117" x="7"/><use href="#g116" x="14"/><use href="#g116" x="21"/><use href="#g111" x="28"/><use href="#g110" x="35"/></svg>
<div style="left:349px;top:703px;width:100px;height:24px;background:#334e57;border:1px solid #5f9aa8;"></div>
<svg class="i" style="left:368px;top:707px" width="16" height="16" viewBox="0 0 16 16"><path fill="#6aa9b8" d="M7 2h1v1h-1zM9 2h1v1h-1zM7 3h1v1h-1zM9 3h1v1h-1zM6 4h2v1h-2zM9 4h2v1h-2zM6 5h2v1h-2zM9 5h2v1h-2zM5 6h1v1h-1zM7 6h1v1h-1zM9 6h3v1h-3zM5 7h1v1h-1zM7 7h1v1h-1zM9 7h3v1h-3zM4 8h1v1h-1zM7 8h1v1h-1zM9 8h4v1h-4zM4 9h1v1h-1zM7 9h1v1h-1zM9 9h4v1h-4zM3 10h1v1h-1zM7 10h1v1h-1zM9 10h5v1h-5zM3 11h1v1h-1zM7 11h1v1h-1zM9 11h5v1h-5zM2 12h1v1h-1zM7 12h1v1h-1zM9 12h6v1h-6zM2 13h6v1h-6zM9 13h6v1h-6z"/></svg>
<svg class="p" style="left:388px;top:711px;fill:#6aa9b8" width="42" height="9" role="img"><title>Toggle</title><use href="#g84"/><use href="#g111" x="7"/><use href="#g103" x="14"/><use href="#g103" x="21"/><use href="#g108" x="28"/><use href="#g101" x="35"/></svg>
<div style="left:466px;top:708px;width:15px;height:15px;background:#2b3a3a;border:1px solid #5f9aa8;"></div>
<svg class="p" style="left:485px;top:711px;fill:#6aa9b8" width="49" height="9" role="img"><title>NoCheck</title><use href="#g78"/><use href="#g111" x="7"/><use href="#g67" x="14"/><use href="#g104" x="21"/><use href="#g101" x="28"/><use href="#g99" x="35"/><use href="#g107" x="42"/></svg>
<div style="left:574px;top:708px;width:15px;height:15px;background:#2b3a3a;border:1px solid #5f9aa8;"></div>
<div style="left:576px;top:710px;width:11px;height:11px;background:#6aa9b8;"></div>
<svg class="p" style="left:593px;top:711px;fill:#6aa9b8" width="49" height="9" role="img"><title>Checked</title><use href="#g67"/><use href="#g104" x="7"/><use href="#g101" x="14"/><use href="#g99" x="21"/><use href="#g107" x="28"/><use href="#g101" x="35"/><use href="#g100" x="42"/></svg>
<div style="left:679px;top:710px;width:100px;height:10px;background:#2c3334;border:1px solid #5f9aa8;"></div>
<div style="left:714px;top:712px;width:10px;height:6px;background:#6aa9b8;"></div>
<div style="left:794px;top:710px;width:100px;height:10px;background:#2c3334;border:1px solid #5f9aa8;"></div>
<div style="left:795px;top:712px;width:39px;height:6px;background:#6aa9b8;"></div>
<div style="left:909px;top:710px;width:100px;height:10px;background:#2b3a3a;border:1px solid #60827d;"></div>
<div style="left:909px;top:710px;width:59px;height:10px;background:#3b6357;border:1px solid #5f9aa8;border-right:none;"></div>
<div style="left:1024px;top:703px;width:92px;height:24px;background:#2c3334;border:1px solid #5f9aa8;"></div>
<div style="left:1027px;top:706px;width:42px;height:18px;background:#334e57;"></div>
<svg class="i" style="left:1028px;top:707px" width="16" height="16" viewBox="0 0 16 16"><path fill="#6aa9b8" d="M2 2h12v1h-12zM2 3h1v1h-1zM13 3h1v1h-1zM2 4h1v1h-1zM13 4h1v1h-1zM2 5h1v1h-1zM13 5h1v1h-1zM2 6h5v1h-5zM13 6h1v1h-1zM2 7h5v1h-5zM13 7h1v1h-1zM2 8h5v1h-5zM13 8h1v1h-1zM2 9h5v1h-5zM13 9h1v1h-1zM2 10h1v1h-1zM13 10h1v1h-1zM2 11h1v1h-1zM13 11h1v1h-1zM2 12h1v1h-1zM13 12h1v1h-1zM2 13h12v1h-12z"/></svg>
<svg class="p" style="left:1048px;top:711px;fill:#6aa9b8" width="21" height="9" role="img"><title>OFF</title><use href="#g79"/><use href="#g70" x="7"/><use href="#g70" x="14"/></svg>
<div style="left:1132px;top:703px;width:92px;height:24px;background:#2c3334;border:1px solid #5f9aa8;"></div>
<div style="left:1179px;top:706px;width:42px;height:18px;background:#334e57;"></div>
<svg class="i" style="left:1183px;top:707px" width="16" height="16" viewBox="0 0 16 16"><path fill="#6aa9b8" d="M2 2h12v1h-12zM2 3h1v1h-1zM13 3h1v1h-1zM2 4h1v1h-1zM13 4h1v1h-1zM2 5h1v1h-1zM13 5h1v1h-1zM2 6h1v1h-1zM9 6h5v1h-5zM2 7h1v1h-1zM9 7h5v1h-5zM2 8h1v1h-1zM9 8h5v1h-5zM2 9h1v1h-1zM9 9h5v1h-5zM2 10h1v1h-1zM13 10h1v1h-1zM2 11h1v1h-1zM13 11h1v1h-1zM2 12h1v1h-1zM13 12h1v1h-1zM2 13h12v1h-12z"/></svg>
<svg class="p" style="left:1203px;top:711px;fill:#6aa9b8" width="14" height="9" role="img"><title>ON</title><use href="#g79"/><use href="#g78" x="7"/></svg>
<div style="left:1239px;top:703px;width:106px;height:24px;background:#334e57;border:1px solid #5f9aa8;"></div>
<svg class="i" style="left:1254px;top:707px" width="16" height="16" viewBox="0 0 16 16"><path fill="#6aa9b8" d="M8 1h1v1h-1zM8 2h1v1h-1zM5 3h2v1h-2zM8 3h1v1h-1zM10 3h1v1h-1zM4 4h1v1h-1zM6 4h1v1h-1zM8 4h1v1h-1zM10 4h2v1h-2zM3 5h1v1h-1zM6 5h1v1h-1zM8 5h1v1h-1zM10 5h3v1h-3zM2 6h1v1h-1zM6 6h1v1h-1zM8 6h1v1h-1zM10 6h4v1h-4zM1 7h1v1h-1zM6 7h1v1h-1zM8 7h1v1h-1zM10 7h5v1h-5zM1 8h1v1h-1zM6 8h1v1h-1zM8 8h1v1h-1zM10 8h5v1h-5zM2 9h1v1h-1zM6 9h1v1h-1zM8 9h1v1h-1zM10 9h4v1h-4zM3 10h1v1h-1zM6 10h1v1h-1zM8 10h1v1h-1zM10 10h3v1h-3zM4 11h1v1h-1zM6 11h1v1h-1zM8 11h1v1h-1zM10 11h2v1h-2zM5 12h2v1h-2zM8 12h1v1h-1zM10 12h1v1h-1zM8 13h1v1h-1zM8 14h1v1h-1z"/></svg>
<svg class="p" style="left:1274px;top:711px;fill:#6aa9b8" width="57" height="9" role="img"><title>ComboBox</title><use href="#g67"/><use href="#g111" x="7"/><use href="#g109" x="14"/><use href="#g98" x="22"/><use href="#g111" x="29"/><use href="#g66" x="36"/><use href="#g111" x="43"/><use href="#g120" x="50"/></svg>
<div style="left:1347px;top:703px;width:32px;height:24px;background:#334e57;border:1px solid #5f9aa8;"></div>
<svg class="p" style="left:1352px;top:711px;fill:#6aa9b8" width="21" height="9" role="img"><title>1/2</title><use href="#g49"/><use href="#g47" x="7"/><use href="#g50" x="14"/></svg>
<div style="left:1394px;top:703px;width:160px;height:24px;background:#334e57;border:1px solid #5f9aa8;"></div>
<svg class="i" style="left:1425px;top:707px" width="16" height="16" viewBox="0 0 16 16"><path fill="#6aa9b8" d="M7 1h2v1h-2zM6 2h1v1h-1zM9 2h1v1h-1zM5 3h1v1h-1zM10 3h1v1h-1zM4 4h1v1h-1zM11 4h1v1h-1zM3 5h1v1h-1zM12 5h1v1h-1zM3 6h10v1h-10zM1 8h14v1h-14zM3 10h10v1h-10zM4 11h8v1h-8zM5 12h6v1h-6zM6 13h4v1h-4zM7 14h2v1h-2z"/></svg>
<svg class="p" style="left:1445px;top:711px;fill:#6aa9b8" width="78" height="9" role="img"><title>DropdownBox</title><use href="#g68"/><use href="#g114" x="7"/><use href="#g111" x="14"/><use href="#g112" x="21"/><use href="#g100" x="28"/><use href="#g111" x="35"/><use href="#g119" x="42"/><use href="#g110" x="50"/><use href="#g66" x="57"/><use href="#g111" x="64"/><use href="#g120" x="71"/></svg>
<svg class="i" style="left:1535px;top:707px" width="16" height="16" viewBox="0 0 16 16"><path fill="#6aa9b8" d="M2 5h11v1h-11zM3 6h9v1h-9zM4 7h7v1h-7zM5 8h5v1h-5zM6 9h3v1h-3zM7 10h1v1h-1z"/></svg>
<div style="left:1569px;top:703px;width:100px;height:24px;background:#2b3a3a;border:1px solid #5f9aa8;"></div>
<svg class="p" style="left:1574px;top:711px;fill:#6aa9b8" width="54" height="9" role="img"><title>text box</title><use href="#g116"/><use href="#g101" x="7"/><use href="#g120" x="14"/><use href="#g116" x="21"/><use href="#g98" x="33"/><use href="#g111" x="40"/><use href="#g120" x="47"/></svg>
<div style="left:1684px;top:703px;width:100px;height:24px;background:#2b3a3a;border:1px solid #5f9aa8;"></div>
<svg class="p" style="left:1727px;top:711px;fill:#6aa9b8" width="14" height="9" role="img"><title>40</title><use href="#g52"/><use href="#g48" x="7"/></svg>
<div style="left:1799px;top:703px;width:24px;height:24px;background:#334e57;border:2px solid #5f9aa8;"></div>
<svg class="i" style="left:1803px;top:707px" width="16" height="16" viewBox="0 0 16 16"><path fill="#6aa9b8" d="M9 3h1v1h-1zM8 4h2v1h-2zM7 5h3v1h-3zM6 6h4v1h-4zM5 7h5v1h-5zM4 8h6v1h-6zM5 9h5v1h-5zM6 10h4v1h-4zM7 11h3v1h-3zM8 12h2v1h-2zM9 13h1v1h-1z"/></svg>
<svg class="p" style="left:41px;top:750px;fill:#97af81" width="49" height="9" role="img"><title>PRESSED</title><use href="#g80"/><use href="#g82" x="7"/><use href="#g69" x="14"/><use href="#g83" x="21"/><use href="#g83" x="28"/><use href="#g69" x="35"/><use href="#g68" x="42"/></svg>
<svg class="i" style="left:134px;top:746px" width="16" height="16" viewBox="0 0 16 16"><path fill="#97af81" d="M4 1h10v1h-10zM4 2h1v1h-1zM13 2h1v1h-1zM2 3h3v1h-3zM13 3h1v1h-1zM2 4h1v1h-1zM13 4h1v1h-1zM2 5h1v1h-1zM13 5h1v1h-1zM2 6h1v1h-1zM4 6h8v1h-8zM13 6h1v1h-1zM2 7h1v1h-1zM13 7h1v1h-1zM2 8h1v1h-1zM4 8h8v1h-8zM13 8h1v1h-1zM2 9h1v1h-1zM13 9h1v1h-1zM2 10h1v1h-1zM4 10h8v1h-8zM13 10h1v1h-1zM2 11h1v1h-1zM13 11h1v1h-1zM2 12h1v1h-1zM13 12h1v1h-1zM2 13h1v1h-1zM13 13h1v1h-1zM2 14h12v1h-12z"/></svg>
<svg class="p" style="left:154px;top:750px;fill:#97af81" width="35" height="9" role="img"><title>Label</title><use href="#g76"/><use href="#g97" x="7"/><use href="#g98" x="14"/><use href="#g101" x="21"/><use href="#g108" x="28"/></svg>
<div style="left:234px;top:742px;width:100px;height:24px;background:#3b6357;border:2px solid #a9cb8d;"></div>
<svg class="i" style="left:253px;top:746px" width="16" height="16" viewBox="0 0 16 16"><path fill="#97af81" d="M1 1h13v1h-13zM1 2h1v1h-1zM5 2h1v1h-1zM10 2h1v1h-1zM13 2h2v1h-2zM1 3h1v1h-1zM5 3h1v1h-1zM10 3h1v1h-1zM14 3h1v1h-1zM1 4h1v1h-1zM5 4h6v1h-6zM14 4h1v1h-1zM1 5h1v1h-1zM14 5h1v1h-1zM1 6h1v1h-1zM14 6h1v1h-1zM1 7h1v1h-1zM3 7h10v1h-10zM14 7h1v1h-1zM1 8h1v1h-1zM3 8h1v1h-1zM12 8h1v1h-1zM14 8h1v1h-1zM1 9h1v1h-1zM3 9h1v1h-1zM5 9h6v1h-6zM12 9h1v1h-1zM14 9h1v1h-1zM1 10h1v1h-1zM3 10h1v1h-1zM12 10h1v1h-1zM14 10h1v1h-1zM1 11h1v1h-1zM3 11h1v1h-1zM12 11h1v1h-1zM14 11h1v1h-1zM1 12h1v1h-1zM3 12h10v1h-10zM14 12h1v1h-1zM1 13h1v1h-1zM14 13h1v1h-1zM1 14h14v1h-14z"/></svg>
<svg class="p" style="left:273px;top:750px;fill:#97af81" width="42" height="9" role="img"><title>Button</title><use href="#g66"/><use href="#g117" x="7"/><use href="#g116" x="14"/><use href="#g116" x="21"/><use href="#g111" x="28"/><use href="#g110" x="35"/></svg>
<div style="left:349px;top:742px;width:100px;height:24px;background:#3b6357;border:1px solid #a9cb8d;"></div>
<svg class="i" style="left:368px;top:746px" width="16" height="16" viewBox="0 0 16 16"><path fill="#97af81" d="M7 2h1v1h-1zM9 2h1v1h-1zM7 3h1v1h-1zM9 3h1v1h-1zM6 4h2v1h-2zM9 4h2v1h-2zM6 5h2v1h-2zM9 5h2v1h-2zM5 6h1v1h-1zM7 6h1v1h-1zM9 6h3v1h-3zM5 7h1v1h-1zM7 7h1v1h-1zM9 7h3v1h-3zM4 8h1v1h-1zM7 8h1v1h-1zM9 8h4v1h-4zM4 9h1v1h-1zM7 9h1v1h-1zM9 9h4v1h-4zM3 10h1v1h-1zM7 10h1v1h-1zM9 10h5v1h-5zM3 11h1v1h-1zM7 11h1v1h-1zM9 11h5v1h-5zM2 12h1v1h-1zM7 12h1v1h-1zM9 12h6v1h-6zM2 13h6v1h-6zM9 13h6v1h-6z"/></svg>
<svg class="p" style="left:388px;top:750px;fill:#97af81" width="42" height="9" role="img"><title>Toggle</title><use href="#g84"/><use href="#g111" x="7"/><use href="#g103" x="14"/><use href="#g103" x="21"/><use href="#g108" x="28"/><use href="#g101" x="35"/></svg>
<div style="left:466px;top:747px;width:15px;height:15px;background:#2b3a3a;border:1px solid #a9cb8d;"></div>
<svg class="p" style="left:485px;top:750px;fill:#97af81" width="49" height="9" role="img"><title>NoCheck</title><use href="#g78"/><use href="#g111" x="7"/><use href="#g67" x="14"/><use href="#g104" x="21"/><use href="#g101" x="28"/><use href="#g99" x="35"/><use href="#g107" x="42"/></svg>
<div style="left:574px;top:747px;width:15px;height:15px;background:#2b3a3a;border:1px solid #a9cb8d;"></div>
<div style="left:576px;top:749px;width:11px;height:11px;background:#97af81;"></div>
<svg class="p" style="left:593px;top:750px;fill:#97af81" width="49" height="9" role="img"><title>Checked</title><use href="#g67"/><use href="#g104" x="7"/><use href="#g101" x="14"/><use href="#g99" x="21"/><use href="#g107" x="28"/><use href="#g101" x="35"/><use href="#g100" x="42"/></svg>
<div style="left:679px;top:749px;width:100px;height:10px;background:#2c3334;border:1px solid #a9cb8d;"></div>
<div style="left:714px;top:751px;width:10px;height:6px;background:#97af81;"></div>
<div style="left:794px;top:749px;width:100px;height:10px;background:#2c3334;border:1px solid #a9cb8d;"></div>
<div style="left:795px;top:751px;width:39px;height:6px;background:#97af81;"></div>
<div style="left:909px;top:749px;width:100px;height:10px;background:#2b3a3a;border:1px solid #60827d;"></div>
<div style="left:909px;top:749px;width:59px;height:10px;background:#3b6357;border:1px solid #5f9aa8;border-right:none;"></div>
<div style="left:1024px;top:742px;width:92px;height:24px;background:#2c3334;border:1px solid #a9cb8d;"></div>
<div style="left:1027px;top:745px;width:42px;height:18px;background:#3b6357;"></div>
<svg class="i" style="left:1028px;top:746px" width="16" height="16" viewBox="0 0 16 16"><path fill="#97af81" d="M2 2h12v1h-12zM2 3h1v1h-1zM13 3h1v1h-1zM2 4h1v1h-1zM13 4h1v1h-1zM2 5h1v1h-1zM13 5h1v1h-1zM2 6h5v1h-5zM13 6h1v1h-1zM2 7h5v1h-5zM13 7h1v1h-1zM2 8h5v1h-5zM13 8h1v1h-1zM2 9h5v1h-5zM13 9h1v1h-1zM2 10h1v1h-1zM13 10h1v1h-1zM2 11h1v1h-1zM13 11h1v1h-1zM2 12h1v1h-1zM13 12h1v1h-1zM2 13h12v1h-12z"/></svg>
<svg class="p" style="left:1048px;top:750px;fill:#97af81" width="21" height="9" role="img"><title>OFF</title><use href="#g79"/><use href="#g70" x="7"/><use href="#g70" x="14"/></svg>
<div style="left:1132px;top:742px;width:92px;height:24px;background:#2c3334;border:1px solid #a9cb8d;"></div>
<div style="left:1179px;top:745px;width:42px;height:18px;background:#3b6357;"></div>
<svg class="i" style="left:1183px;top:746px" width="16" height="16" viewBox="0 0 16 16"><path fill="#97af81" d="M2 2h12v1h-12zM2 3h1v1h-1zM13 3h1v1h-1zM2 4h1v1h-1zM13 4h1v1h-1zM2 5h1v1h-1zM13 5h1v1h-1zM2 6h1v1h-1zM9 6h5v1h-5zM2 7h1v1h-1zM9 7h5v1h-5zM2 8h1v1h-1zM9 8h5v1h-5zM2 9h1v1h-1zM9 9h5v1h-5zM2 10h1v1h-1zM13 10h1v1h-1zM2 11h1v1h-1zM13 11h1v1h-1zM2 12h1v1h-1zM13 12h1v1h-1zM2 13h12v1h-12z"/></svg>
<svg class="p" style="left:1203px;top:750px;fill:#97af81" width="14" height="9" role="img"><title>ON</title><use href="#g79"/><use href="#g78" x="7"/></svg>
<div style="left:1239px;top:742px;width:106px;height:24px;background:#3b6357;border:1px solid #a9cb8d;"></div>
<svg class="i" style="left:1254px;top:746px" width="16" height="16" viewBox="0 0 16 16"><path fill="#97af81" d="M8 1h1v1h-1zM8 2h1v1h-1zM5 3h2v1h-2zM8 3h1v1h-1zM10 3h1v1h-1zM4 4h1v1h-1zM6 4h1v1h-1zM8 4h1v1h-1zM10 4h2v1h-2zM3 5h1v1h-1zM6 5h1v1h-1zM8 5h1v1h-1zM10 5h3v1h-3zM2 6h1v1h-1zM6 6h1v1h-1zM8 6h1v1h-1zM10 6h4v1h-4zM1 7h1v1h-1zM6 7h1v1h-1zM8 7h1v1h-1zM10 7h5v1h-5zM1 8h1v1h-1zM6 8h1v1h-1zM8 8h1v1h-1zM10 8h5v1h-5zM2 9h1v1h-1zM6 9h1v1h-1zM8 9h1v1h-1zM10 9h4v1h-4zM3 10h1v1h-1zM6 10h1v1h-1zM8 10h1v1h-1zM10 10h3v1h-3zM4 11h1v1h-1zM6 11h1v1h-1zM8 11h1v1h-1zM10 11h2v1h-2zM5 12h2v1h-2zM8 12h1v1h-1zM10 12h1v1h-1zM8 13h1v1h-1zM8 14h1v1h-1z"/></svg>
<svg class="p" style="left:1274px;top:750px;fill:#97af81" width="57" height="9" role="img"><title>ComboBox</title><use href="#g67"/><use href="#g111" x="7"/><use href="#g109" x="14"/><use href="#g98" x="22"/><use href="#g111" x="29"/><use href="#g66" x="36"/><use href="#g111" x="43"/><use href="#g120" x="50"/></svg>
<div style="left:1347px;top:742px;width:32px;height:24px;background:#3b6357;border:1px solid #a9cb8d;"></div>
<svg class="p" style="left:1352px;top:750px;fill:#97af81" width="21" height="9" role="img"><title>1/2</title><use href="#g49"/><use href="#g47" x="7"/><use href="#g50" x="14"/></svg>
<div style="left:1394px;top:742px;width:160px;height:24px;background:#3b6357;border:1px solid #a9cb8d;"></div>
<svg class="i" style="left:1425px;top:746px" width="16" height="16" viewBox="0 0 16 16"><path fill="#97af81" d="M7 1h2v1h-2zM6 2h1v1h-1zM9 2h1v1h-1zM5 3h1v1h-1zM10 3h1v1h-1zM4 4h1v1h-1zM11 4h1v1h-1zM3 5h1v1h-1zM12 5h1v1h-1zM3 6h10v1h-10zM1 8h14v1h-14zM3 10h10v1h-10zM4 11h8v1h-8zM5 12h6v1h-6zM6 13h4v1h-4zM7 14h2v1h-2z"/></svg>
<svg class="p" style="left:1445px;top:750px;fill:#97af81" width="78" height="9" role="img"><title>DropdownBox</title><use href="#g68"/><use href="#g114" x="7"/><use href="#g111" x="14"/><use href="#g112" x="21"/><use href="#g100" x="28"/><use href="#g111" x="35"/><use href="#g119" x="42"/><use href="#g110" x="50"/><use href="#g66" x="57"/><use href="#g111" x="64"/><use href="#g120" x="71"/></svg>
<svg class="i" style="left:1535px;top:746px" width="16" height="16" viewBox="0 0 16 16"><path fill="#97af81" d="M2 5h11v1h-11zM3 6h9v1h-9zM4 7h7v1h-7zM5 8h5v1h-5zM6 9h3v1h-3zM7 10h1v1h-1z"/></svg>
<div style="left:1569px;top:742px;width:100px;height:24px;background:#3b6357;border:1px solid #a9cb8d;"></div>
<svg class="p" style="left:1574px;top:750px;fill:#97af81" width="54" height="9" role="img"><title>text box</title><use href="#g116"/><use href="#g101" x="7"/><use href="#g120" x="14"/><use href="#g116" x="21"/><use href="#g98" x="33"/><use href="#g111" x="40"/><use href="#g120" x="47"/></svg>
<div style="left:1684px;top:742px;width:100px;height:24px;background:#3b6357;border:1px solid #a9cb8d;"></div>
<svg class="p" style="left:1727px;top:750px;fill:#97af81" width="14" height="9" role="img"><title>40</title><use href="#g52"/><use href="#g48" x="7"/></svg>
<div style="left:1799px;top:742px;width:24px;height:24px;background:#3b6357;border:2px solid #a9cb8d;"></div>
<svg class="i" style="left:1803px;top:746px" width="16" height="16" viewBox="0 0 16 16"><path fill="#97af81" d="M9 3h1v1h-1zM8 4h2v1h-2zM7 5h3v1h-3zM6 6h4v1h-4zM5 7h5v1h-5zM4 8h6v1h-6zM5 9h5v1h-5zM6 10h4v1h-4zM7 11h3v1h-3zM8 12h2v1h-2zM9 13h1v1h-1z"/></svg>
<svg class="p" style="left:41px;top:789px;fill:#666b69" width="56" height="9" role="img"><title>DISABLED</title><use href="#g68"/><use href="#g73" x="7"/><use href="#g83" x="14"/><use href="#g65" x="21"/><use href="#g66" x="28"/><use href="#g76" x="35"/><use href="#g69" x="42"/><use href="#g68" x="49"/></svg>
<svg class="i" style="left:134px;top:785px" width="16" height="16" viewBox="0 0 16 16"><path fill="#666b69" d="M4 1h10v1h-10zM4 2h1v1h-1zM13 2h1v1h-1zM2 3h3v1h-3zM13 3h1v1h-1zM2 4h1v1h-1zM13 4h1v1h-1zM2 5h1v1h-1zM13 5h1v1h-1zM2 6h1v1h-1zM4 6h8v1h-8zM13 6h1v1h-1zM2 7h1v1h-1zM13 7h1v1h-1zM2 8h1v1h-1zM4 8h8v1h-8zM13 8h1v1h-1zM2 9h1v1h-1zM13 9h1v1h-1zM2 10h1v1h-1zM4 10h8v1h-8zM13 10h1v1h-1zM2 11h1v1h-1zM13 11h1v1h-1zM2 12h1v1h-1zM13 12h1v1h-1zM2 13h1v1h-1zM13 13h1v1h-1zM2 14h12v1h-12z"/></svg>
<svg class="p" style="left:154px;top:789px;fill:#666b69" width="35" height="9" role="img"><title>Label</title><use href="#g76"/><use href="#g97" x="7"/><use href="#g98" x="14"/><use href="#g101" x="21"/><use href="#g108" x="28"/></svg>
<div style="left:234px;top:781px;width:100px;height:24px;background:#2c3334;border:2px solid #5b6462;"></div>
<svg class="i" style="left:253px;top:785px" width="16" height="16" viewBox="0 0 16 16"><path fill="#666b69" d="M1 1h13v1h-13zM1 2h1v1h-1zM5 2h1v1h-1zM10 2h1v1h-1zM13 2h2v1h-2zM1 3h1v1h-1zM5 3h1v1h-1zM10 3h1v1h-1zM14 3h1v1h-1zM1 4h1v1h-1zM5 4h6v1h-6zM14 4h1v1h-1zM1 5h1v1h-1zM14 5h1v1h-1zM1 6h1v1h-1zM14 6h1v1h-1zM1 7h1v1h-1zM3 7h10v1h-10zM14 7h1v1h-1zM1 8h1v1h-1zM3 8h1v1h-1zM12 8h1v1h-1zM14 8h1v1h-1zM1 9h1v1h-1zM3 9h1v1h-1zM5 9h6v1h-6zM12 9h1v1h-1zM14 9h1v1h-1zM1 10h1v1h-1zM3 10h1v1h-1zM12 10h1v1h-1zM14 10h1v1h-1zM1 11h1v1h-1zM3 11h1v1h-1zM12 11h1v1h-1zM14 11h1v1h-1zM1 12h1v1h-1zM3 12h10v1h-10zM14 12h1v1h-1zM1 13h1v1h-1zM14 13h1v1h-1zM1 14h14v1h-14z"/></svg>
<svg class="p" style="left:273px;top:789px;fill:#666b69" width="42" height="9" role="img"><title>Button</title><use href="#g66"/><use href="#g117" x="7"/><use href="#g116" x="14"/><use href="#g116" x="21"/><use href="#g111" x="28"/><use href="#g110" x="35"/></svg>
<div style="left:349px;top:781px;width:100px;height:24px;background:#2c3334;border:1px solid #5b6462;"></div>
<svg class="i" style="left:368px;top:785px" width="16" height="16" viewBox="0 0 16 16"><path fill="#666b69" d="M7 2h1v1h-1zM9 2h1v1h-1zM7 3h1v1h-1zM9 3h1v1h-1zM6 4h2v1h-2zM9 4h2v1h-2zM6 5h2v1h-2zM9 5h2v1h-2zM5 6h1v1h-1zM7 6h1v1h-1zM9 6h3v1h-3zM5 7h1v1h-1zM7 7h1v1h-1zM9 7h3v1h-3zM4 8h1v1h-1zM7 8h1v1h-1zM9 8h4v1h-4zM4 9h1v1h-1zM7 9h1v1h-1zM9 9h4v1h-4zM3 10h1v1h-1zM7 10h1v1h-1zM9 10h5v1h-5zM3 11h1v1h-1zM7 11h1v1h-1zM9 11h5v1h-5zM2 12h1v1h-1zM7 12h1v1h-1zM9 12h6v1h-6zM2 13h6v1h-6zM9 13h6v1h-6z"/></svg>
<svg class="p" style="left:388px;top:789px;fill:#666b69" width="42" height="9" role="img"><title>Toggle</title><use href="#g84"/><use href="#g111" x="7"/><use href="#g103" x="14"/><use href="#g103" x="21"/><use href="#g108" x="28"/><use href="#g101" x="35"/></svg>
<div style="left:466px;top:786px;width:15px;height:15px;background:#2b3a3a;border:1px solid #5b6462;"></div>
<svg class="p" style="left:485px;top:789px;fill:#666b69" width="49" height="9" role="img"><title>NoCheck</title><use href="#g78"/><use href="#g111" x="7"/><use href="#g67" x="14"/><use href="#g104" x="21"/><use href="#g101" x="28"/><use href="#g99" x="35"/><use href="#g107" x="42"/></svg>
<div style="left:574px;top:786px;width:15px;height:15px;background:#2b3a3a;border:1px solid #5b6462;"></div>
<div style="left:576px;top:788px;width:11px;height:11px;background:#666b69;"></div>
<svg class="p" style="left:593px;top:789px;fill:#666b69" width="49" height="9" role="img"><title>Checked</title><use href="#g67"/><use href="#g104" x="7"/><use href="#g101" x="14"/><use href="#g99" x="21"/><use href="#g107" x="28"/><use href="#g101" x="35"/><use href="#g100" x="42"/></svg>
<div style="left:679px;top:788px;width:100px;height:10px;background:#2c3334;border:1px solid #5b6462;"></div>
<div style="left:714px;top:790px;width:10px;height:6px;background:#666b69;"></div>
<div style="left:794px;top:788px;width:100px;height:10px;background:#2c3334;border:1px solid #5b6462;"></div>
<div style="left:795px;top:790px;width:39px;height:6px;background:#666b69;"></div>
<div style="left:909px;top:788px;width:100px;height:10px;background:#2b3a3a;border:1px solid #5b6462;"></div>
<div style="left:1024px;top:781px;width:92px;height:24px;background:#2c3334;border:1px solid #5b6462;"></div>
<svg class="i" style="left:1028px;top:785px" width="16" height="16" viewBox="0 0 16 16"><path fill="#666b69" d="M2 2h12v1h-12zM2 3h1v1h-1zM13 3h1v1h-1zM2 4h1v1h-1zM13 4h1v1h-1zM2 5h1v1h-1zM13 5h1v1h-1zM2 6h5v1h-5zM13 6h1v1h-1zM2 7h5v1h-5zM13 7h1v1h-1zM2 8h5v1h-5zM13 8h1v1h-1zM2 9h5v1h-5zM13 9h1v1h-1zM2 10h1v1h-1zM13 10h1v1h-1zM2 11h1v1h-1zM13 11h1v1h-1zM2 12h1v1h-1zM13 12h1v1h-1zM2 13h12v1h-12z"/></svg>
<svg class="p" style="left:1048px;top:789px;fill:#666b69" width="21" height="9" role="img"><title>OFF</title><use href="#g79"/><use href="#g70" x="7"/><use href="#g70" x="14"/></svg>
<div style="left:1132px;top:781px;width:92px;height:24px;background:#2c3334;border:1px solid #5b6462;"></div>
<svg class="i" style="left:1183px;top:785px" width="16" height="16" viewBox="0 0 16 16"><path fill="#666b69" d="M2 2h12v1h-12zM2 3h1v1h-1zM13 3h1v1h-1zM2 4h1v1h-1zM13 4h1v1h-1zM2 5h1v1h-1zM13 5h1v1h-1zM2 6h1v1h-1zM9 6h5v1h-5zM2 7h1v1h-1zM9 7h5v1h-5zM2 8h1v1h-1zM9 8h5v1h-5zM2 9h1v1h-1zM9 9h5v1h-5zM2 10h1v1h-1zM13 10h1v1h-1zM2 11h1v1h-1zM13 11h1v1h-1zM2 12h1v1h-1zM13 12h1v1h-1zM2 13h12v1h-12z"/></svg>
<svg class="p" style="left:1203px;top:789px;fill:#666b69" width="14" height="9" role="img"><title>ON</title><use href="#g79"/><use href="#g78" x="7"/></svg>
<div style="left:1239px;top:781px;width:106px;height:24px;background:#2c3334;border:1px solid #5b6462;"></div>
<svg class="i" style="left:1254px;top:785px" width="16" height="16" viewBox="0 0 16 16"><path fill="#666b69" d="M8 1h1v1h-1zM8 2h1v1h-1zM5 3h2v1h-2zM8 3h1v1h-1zM10 3h1v1h-1zM4 4h1v1h-1zM6 4h1v1h-1zM8 4h1v1h-1zM10 4h2v1h-2zM3 5h1v1h-1zM6 5h1v1h-1zM8 5h1v1h-1zM10 5h3v1h-3zM2 6h1v1h-1zM6 6h1v1h-1zM8 6h1v1h-1zM10 6h4v1h-4zM1 7h1v1h-1zM6 7h1v1h-1zM8 7h1v1h-1zM10 7h5v1h-5zM1 8h1v1h-1zM6 8h1v1h-1zM8 8h1v1h-1zM10 8h5v1h-5zM2 9h1v1h-1zM6 9h1v1h-1zM8 9h1v1h-1zM10 9h4v1h-4zM3 10h1v1h-1zM6 10h1v1h-1zM8 10h1v1h-1zM10 10h3v1h-3zM4 11h1v1h-1zM6 11h1v1h-1zM8 11h1v1h-1zM10 11h2v1h-2zM5 12h2v1h-2zM8 12h1v1h-1zM10 12h1v1h-1zM8 13h1v1h-1zM8 14h1v1h-1z"/></svg>
<svg class="p" style="left:1274px;top:789px;fill:#666b69" width="57" height="9" role="img"><title>ComboBox</title><use href="#g67"/><use href="#g111" x="7"/><use href="#g109" x="14"/><use href="#g98" x="22"/><use href="#g111" x="29"/><use href="#g66" x="36"/><use href="#g111" x="43"/><use href="#g120" x="50"/></svg>
<div style="left:1347px;top:781px;width:32px;height:24px;background:#2c3334;border:1px solid #5b6462;"></div>
<svg class="p" style="left:1352px;top:789px;fill:#666b69" width="21" height="9" role="img"><title>1/2</title><use href="#g49"/><use href="#g47" x="7"/><use href="#g50" x="14"/></svg>
<div style="left:1394px;top:781px;width:160px;height:24px;background:#2c3334;border:1px solid #5b6462;"></div>
<svg class="i" style="left:1425px;top:785px" width="16" height="16" viewBox="0 0 16 16"><path fill="#666b69" d="M7 1h2v1h-2zM6 2h1v1h-1zM9 2h1v1h-1zM5 3h1v1h-1zM10 3h1v1h-1zM4 4h1v1h-1zM11 4h1v1h-1zM3 5h1v1h-1zM12 5h1v1h-1zM3 6h10v1h-10zM1 8h14v1h-14zM3 10h10v1h-10zM4 11h8v1h-8zM5 12h6v1h-6zM6 13h4v1h-4zM7 14h2v1h-2z"/></svg>
<svg class="p" style="left:1445px;top:789px;fill:#666b69" width="78" height="9" role="img"><title>DropdownBox</title><use href="#g68"/><use href="#g114" x="7"/><use href="#g111" x="14"/><use href="#g112" x="21"/><use href="#g100" x="28"/><use href="#g111" x="35"/><use href="#g119" x="42"/><use href="#g110" x="50"/><use href="#g66" x="57"/><use href="#g111" x="64"/><use href="#g120" x="71"/></svg>
<svg class="i" style="left:1535px;top:785px" width="16" height="16" viewBox="0 0 16 16"><path fill="#666b69" d="M2 5h11v1h-11zM3 6h9v1h-9zM4 7h7v1h-7zM5 8h5v1h-5zM6 9h3v1h-3zM7 10h1v1h-1z"/></svg>
<div style="left:1569px;top:781px;width:100px;height:24px;background:#2c3334;border:1px solid #5b6462;"></div>
<svg class="p" style="left:1574px;top:789px;fill:#666b69" width="54" height="9" role="img"><title>text box</title><use href="#g116"/><use href="#g101" x="7"/><use href="#g120" x="14"/><use href="#g116" x="21"/><use href="#g98" x="33"/><use href="#g111" x="40"/><use href="#g120" x="47"/></svg>
<div style="left:1684px;top:781px;width:100px;height:24px;background:#2c3334;border:1px solid #5b6462;"></div>
<svg class="p" style="left:1727px;top:789px;fill:#666b69" width="14" height="9" role="img"><title>40</title><use href="#g52"/><use href="#g48" x="7"/></svg>
<div style="left:1799px;top:781px;width:24px;height:24px;background:#2c3334;border:2px solid #5b6462;"></div>
<svg class="i" style="left:1803px;top:785px" width="16" height="16" viewBox="0 0 16 16"><path fill="#666b69" d="M9 3h1v1h-1zM8 4h2v1h-2zM7 5h3v1h-3zM6 6h4v1h-4zM5 7h5v1h-5zM4 8h6v1h-6zM5 9h5v1h-5zM6 10h4v1h-4zM7 11h3v1h-3zM8 12h2v1h-2zM9 13h1v1h-1z"/></svg>
<div style="left:0px;top:825px;width:1812px;height:12px;background:#2c3334;border:1px solid #60827d;"></div>
<div style="left:1px;top:827px;width:1710px;height:8px;background:#3b6357;"></div>
<div style="left:0px;top:836px;width:170px;height:24px;background:#2c3334;border:1px solid #60827d;"></div>
<div style="left:169px;top:836px;width:150px;height:24px;background:#2c3334;border:1px solid #60827d;"></div>
<div style="left:318px;top:836px;width:190px;height:24px;background:#2c3334;border:1px solid #60827d;"></div>
<div style="left:507px;top:836px;width:409px;height:24px;background:#2c3334;border:1px solid #60827d;"></div>
<div style="left:915px;top:836px;width:320px;height:24px;background:#2c3334;border:1px solid #60827d;"></div>
<div style="left:1234px;top:836px;width:160px;height:24px;background:#2c3334;border:1px solid #60827d;"></div>
<div style="left:1393px;top:836px;width:180px;height:24px;background:#2c3334;border:1px solid #60827d;"></div>
<div style="left:1572px;top:836px;width:240px;height:24px;background:#2c3334;border:1px solid #60827d;"></div>
<div style="left:170px;top:837px;width:148px;height:22px;background:#2b3a3a;"></div>
<svg class="p" style="left:74px;top:844px;fill:#82a29f" width="72" height="9" role="img"><title>Style Name:</title><use href="#g83"/><use href="#g116" x="7"/><use href="#g121" x="14"/><use href="#g108" x="21"/><use href="#g101" x="28"/><use href="#g78" x="40"/><use href="#g97" x="47"/><use href="#g109" x="54"/><use href="#g101" x="62"/><use href="#g58" x="69"/></svg>
<svg class="p" style="left:174px;top:844px;fill:#82a29f" width="42" height="9" role="img"><title>Jungle</title><use href="#g74"/><use href="#g117" x="7"/><use href="#g110" x="14"/><use href="#g103" x="21"/><use href="#g108" x="28"/><use href="#g101" x="35"/></svg>
<svg class="p" style="left:344px;top:844px;fill:#82a29f" width="139" height="9" role="img"><title>CHANGED PROPERTIES: 0</title><use href="#g67"/><use href="#g72" x="7"/><use href="#g65" x="14"/><use href="#g78" x="21"/><use href="#g71" x="28"/><use href="#g69" x="35"/><use href="#g68" x="42"/><use href="#g80" x="54"/><use href="#g82" x="61"/><use href="#g79" x="68"/><use href="#g80" x="75"/><use href="#g69" x="82"/><use href="#g82" x="89"/><use href="#g84" x="96"/><use href="#g73" x="103"/><use href="#g69" x="110"/><use href="#g83" x="117"/><use href="#g58" x="124"/><use href="#g48" x="132"/></svg>
<svg class="p" style="left:969px;top:844px;fill:#82a29f" width="213" height="9" role="img"><title>Font File: PixelIntv.otf [LOADED]</title><use href="#g70"/><use href="#g111" x="7"/><use href="#g110" x="14"/><use href="#g116" x="21"/><use href="#g70" x="33"/><use href="#g105" x="40"/><use href="#g108" x="47"/><use href="#g101" x="54"/><use href="#g58" x="61"/><use href="#g80" x="69"/><use href="#g105" x="76"/><use href="#g120" x="83"/><use href="#g101" x="90"/><use href="#g108" x="97"/><use href="#g73" x="104"/><use href="#g110" x="111"/><use href="#g116" x="118"/><use href="#g118" x="125"/><use href="#g46" x="132"/><use href="#g111" x="135"/><use href="#g116" x="142"/><use href="#g102" x="149"/><use href="#g91" x="161"/><use href="#g76" x="166"/><use href="#g79" x="173"/><use href="#g65" x="180"/><use href="#g68" x="187"/><use href="#g69" x="194"/><use href="#g68" x="201"/><use href="#g93" x="208"/></svg>
<svg class="p" style="left:1265px;top:844px;fill:#82a29f" width="99" height="9" role="img"><title>Codepoints: 189</title><use href="#g67"/><use href="#g111" x="7"/><use href="#g100" x="14"/><use href="#g101" x="21"/><use href="#g112" x="28"/><use href="#g111" x="35"/><use href="#g105" x="42"/><use href="#g110" x="49"/><use href="#g116" x="56"/><use href="#g115" x="63"/><use href="#g58" x="70"/><use href="#g49" x="78"/><use href="#g56" x="85"/><use href="#g57" x="92"/></svg>
<svg class="p" style="left:1421px;top:844px;fill:#82a29f" width="125" height="9" role="img"><title>Atlas Size: 256x256</title><use href="#g65"/><use href="#g116" x="7"/><use href="#g108" x="14"/><use href="#g97" x="21"/><use href="#g115" x="28"/><use href="#g83" x="40"/><use href="#g105" x="47"/><use href="#g122" x="54"/><use href="#g101" x="61"/><use href="#g58" x="68"/><use href="#g50" x="76"/><use href="#g53" x="83"/><use href="#g54" x="90"/><use href="#g120" x="97"/><use href="#g50" x="104"/><use href="#g53" x="111"/><use href="#g54" x="118"/></svg>
<svg class="p" style="left:1596px;top:844px;fill:#82a29f" width="193" height="9" role="img"><title>Font white rec: [254, 254, 1, 1]</title><use href="#g70"/><use href="#g111" x="7"/><use href="#g110" x="14"/><use href="#g116" x="21"/><use href="#g119" x="33"/><use href="#g104" x="41"/><use href="#g105" x="48"/><use href="#g116" x="55"/><use href="#g101" x="62"/><use href="#g114" x="74"/><use href="#g101" x="81"/><use href="#g99" x="88"/><use href="#g58" x="95"/><use href="#g91" x="103"/><use href="#g50" x="108"/><use href="#g53" x="115"/><use href="#g52" x="122"/><use href="#g44" x="129"/><use href="#g50" x="137"/><use href="#g53" x="144"/><use href="#g52" x="151"/><use href="#g44" x="158"/><use href="#g49" x="166"/><use href="#g44" x="173"/><use href="#g49" x="181"/><use href="#g93" x="188"/></svg>
</div></body></html>
